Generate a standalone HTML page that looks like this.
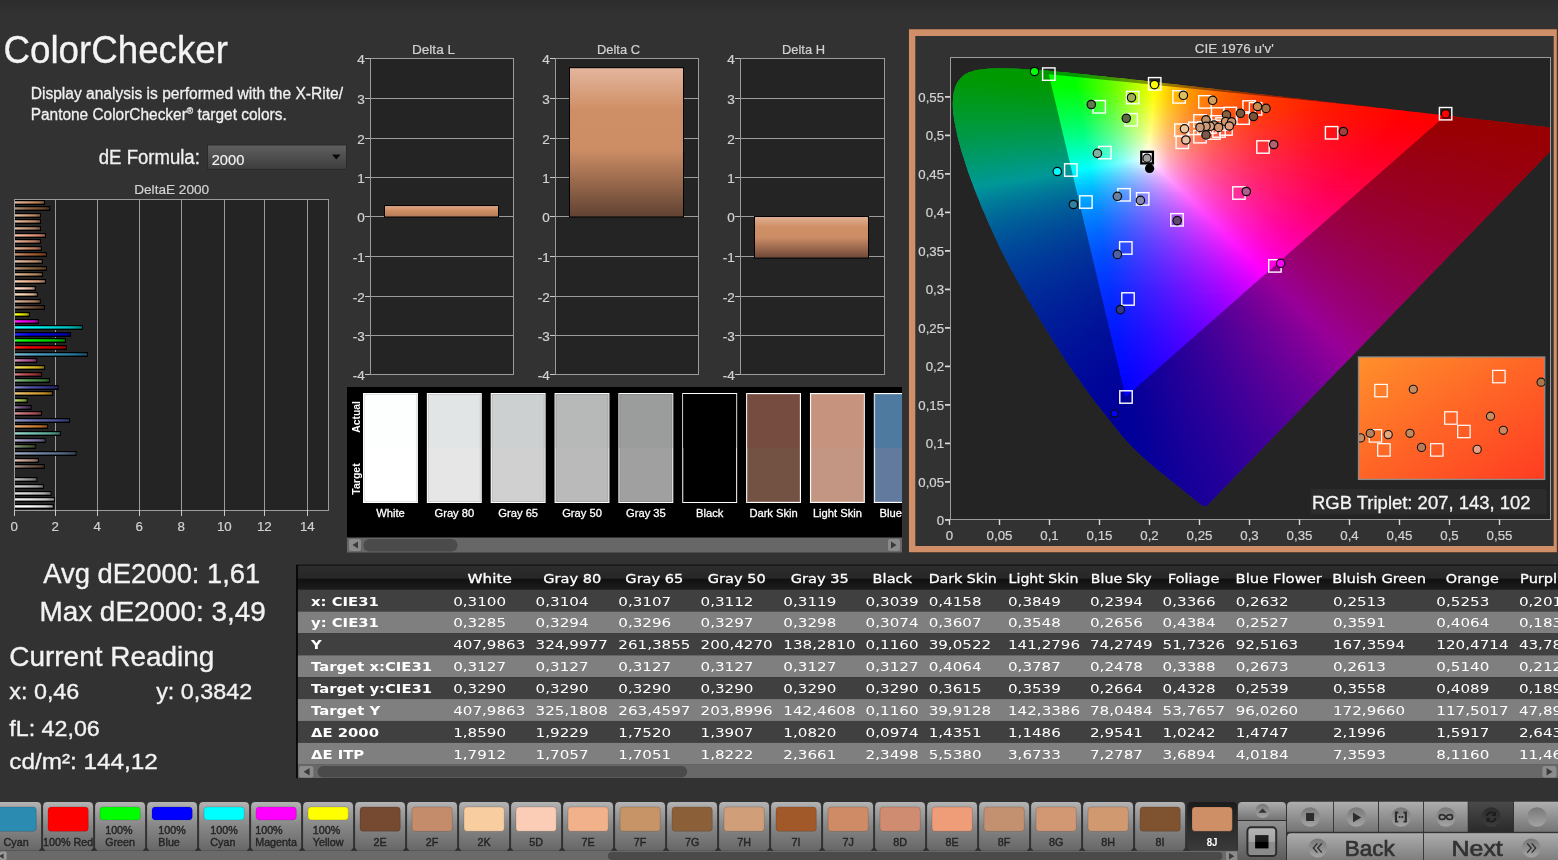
<!DOCTYPE html>
<html lang="en"><head><meta charset="utf-8"><title>ColorChecker</title>
<style>
html,body{margin:0;padding:0;background:#323232}
body{width:1558px;height:860px;overflow:hidden;position:relative}
svg{display:block;position:absolute;left:0;top:0;will-change:transform}
text{white-space:pre}
.l{font-family:"Liberation Sans",Arial,sans-serif}
.d{font-family:"DejaVu Sans","Liberation Sans",sans-serif}
</style></head><body>
<svg width="1558" height="860" viewBox="0 0 1558 860">
<defs>
<linearGradient id="tg" x1="0" y1="0" x2="0" y2="1"><stop offset="0" stop-color="#000" stop-opacity=".1"/><stop offset="1" stop-color="#000" stop-opacity="0"/></linearGradient>
<linearGradient id="dd" x1="0" y1="0" x2="0" y2="1"><stop offset="0" stop-color="#606060"/><stop offset="1" stop-color="#3c3c3c"/></linearGradient>
<linearGradient id="b0" x1="0" x2="1" y1="0" y2="0"><stop offset="0" stop-color="#ffffff"/><stop offset="0.35" stop-color="#ffffff"/><stop offset="0.8" stop-color="#d9d9d9"/><stop offset="1" stop-color="#949494"/></linearGradient>
<linearGradient id="b1" x1="0" x2="1" y1="0" y2="0"><stop offset="0" stop-color="#f0f0f0"/><stop offset="0.35" stop-color="#e9e9e9"/><stop offset="0.8" stop-color="#c4c4c4"/><stop offset="1" stop-color="#858585"/></linearGradient>
<linearGradient id="b2" x1="0" x2="1" y1="0" y2="0"><stop offset="0" stop-color="#e1e2e2"/><stop offset="0.35" stop-color="#d5d7d7"/><stop offset="0.8" stop-color="#b0b2b2"/><stop offset="1" stop-color="#787979"/></linearGradient>
<linearGradient id="b3" x1="0" x2="1" y1="0" y2="0"><stop offset="0" stop-color="#d4d4d4"/><stop offset="0.35" stop-color="#c1c2c1"/><stop offset="0.8" stop-color="#9d9e9d"/><stop offset="1" stop-color="#6b6c6b"/></linearGradient>
<linearGradient id="b4" x1="0" x2="1" y1="0" y2="0"><stop offset="0" stop-color="#c2c3c2"/><stop offset="0.35" stop-color="#a9aaa9"/><stop offset="0.8" stop-color="#858685"/><stop offset="1" stop-color="#5b5c5b"/></linearGradient>
<linearGradient id="b6" x1="0" x2="1" y1="0" y2="0"><stop offset="0" stop-color="#a8948b"/><stop offset="0.35" stop-color="#84675a"/><stop offset="0.8" stop-color="#62463a"/><stop offset="1" stop-color="#433027"/></linearGradient>
<linearGradient id="b7" x1="0" x2="1" y1="0" y2="0"><stop offset="0" stop-color="#d9beb2"/><stop offset="0.35" stop-color="#c9a391"/><stop offset="0.8" stop-color="#a5806e"/><stop offset="1" stop-color="#71574b"/></linearGradient>
<linearGradient id="b8" x1="0" x2="1" y1="0" y2="0"><stop offset="0" stop-color="#9eadc2"/><stop offset="0.35" stop-color="#758aa9"/><stop offset="0.8" stop-color="#536885"/><stop offset="1" stop-color="#39475b"/></linearGradient>
<linearGradient id="b9" x1="0" x2="1" y1="0" y2="0"><stop offset="0" stop-color="#97a48a"/><stop offset="0.35" stop-color="#6b7e5a"/><stop offset="0.8" stop-color="#4a5c39"/><stop offset="1" stop-color="#323f27"/></linearGradient>
<linearGradient id="b10" x1="0" x2="1" y1="0" y2="0"><stop offset="0" stop-color="#b3b0cf"/><stop offset="0.35" stop-color="#948fba"/><stop offset="0.8" stop-color="#716d96"/><stop offset="1" stop-color="#4d4a67"/></linearGradient>
<linearGradient id="b11" x1="0" x2="1" y1="0" y2="0"><stop offset="0" stop-color="#a1d6ca"/><stop offset="0.35" stop-color="#79c5b4"/><stop offset="0.8" stop-color="#58a190"/><stop offset="1" stop-color="#3c6e63"/></linearGradient>
<linearGradient id="b12" x1="0" x2="1" y1="0" y2="0"><stop offset="0" stop-color="#e6af7c"/><stop offset="0.35" stop-color="#db8d45"/><stop offset="0.8" stop-color="#b66b25"/><stop offset="1" stop-color="#7c491a"/></linearGradient>
<linearGradient id="b13" x1="0" x2="1" y1="0" y2="0"><stop offset="0" stop-color="#9299c8"/><stop offset="0.35" stop-color="#656fb1"/><stop offset="0.8" stop-color="#444d8d"/><stop offset="1" stop-color="#2e3560"/></linearGradient>
<linearGradient id="b14" x1="0" x2="1" y1="0" y2="0"><stop offset="0" stop-color="#d9999e"/><stop offset="0.35" stop-color="#c86e76"/><stop offset="0.8" stop-color="#a44c54"/><stop offset="1" stop-color="#703439"/></linearGradient>
<linearGradient id="b15" x1="0" x2="1" y1="0" y2="0"><stop offset="0" stop-color="#9b86a4"/><stop offset="0.35" stop-color="#71537e"/><stop offset="0.8" stop-color="#50335c"/><stop offset="1" stop-color="#37233f"/></linearGradient>
<linearGradient id="b16" x1="0" x2="1" y1="0" y2="0"><stop offset="0" stop-color="#c2d589"/><stop offset="0.35" stop-color="#a9c457"/><stop offset="0.8" stop-color="#85a036"/><stop offset="1" stop-color="#5b6d25"/></linearGradient>
<linearGradient id="b17" x1="0" x2="1" y1="0" y2="0"><stop offset="0" stop-color="#ecc67d"/><stop offset="0.35" stop-color="#e4ae47"/><stop offset="0.8" stop-color="#be8b27"/><stop offset="1" stop-color="#825f1b"/></linearGradient>
<linearGradient id="b18" x1="0" x2="1" y1="0" y2="0"><stop offset="0" stop-color="#8487be"/><stop offset="0.35" stop-color="#5054a3"/><stop offset="0.8" stop-color="#303480"/><stop offset="1" stop-color="#202357"/></linearGradient>
<linearGradient id="b19" x1="0" x2="1" y1="0" y2="0"><stop offset="0" stop-color="#8cbd8e"/><stop offset="0.35" stop-color="#5ca15f"/><stop offset="0.8" stop-color="#3c7e3e"/><stop offset="1" stop-color="#29562a"/></linearGradient>
<linearGradient id="b20" x1="0" x2="1" y1="0" y2="0"><stop offset="0" stop-color="#cd8286"/><stop offset="0.35" stop-color="#b94e53"/><stop offset="0.8" stop-color="#952e33"/><stop offset="1" stop-color="#661f23"/></linearGradient>
<linearGradient id="b21" x1="0" x2="1" y1="0" y2="0"><stop offset="0" stop-color="#f0dc74"/><stop offset="0.35" stop-color="#eace3a"/><stop offset="0.8" stop-color="#c4a91a"/><stop offset="1" stop-color="#867312"/></linearGradient>
<linearGradient id="b22" x1="0" x2="1" y1="0" y2="0"><stop offset="0" stop-color="#d596bd"/><stop offset="0.35" stop-color="#c36aa2"/><stop offset="0.8" stop-color="#9f497f"/><stop offset="1" stop-color="#6c3256"/></linearGradient>
<linearGradient id="b23" x1="0" x2="1" y1="0" y2="0"><stop offset="0" stop-color="#7cb7ce"/><stop offset="0.35" stop-color="#4499b9"/><stop offset="0.8" stop-color="#257696"/><stop offset="1" stop-color="#195166"/></linearGradient>
<linearGradient id="b24" x1="0" x2="1" y1="0" y2="0"><stop offset="0" stop-color="#ff2626"/><stop offset="0.3" stop-color="#f20000"/><stop offset="0.8" stop-color="#bf0000"/><stop offset="1" stop-color="#800000"/></linearGradient>
<linearGradient id="b25" x1="0" x2="1" y1="0" y2="0"><stop offset="0" stop-color="#26ff26"/><stop offset="0.3" stop-color="#00f200"/><stop offset="0.8" stop-color="#00bf00"/><stop offset="1" stop-color="#008000"/></linearGradient>
<linearGradient id="b26" x1="0" x2="1" y1="0" y2="0"><stop offset="0" stop-color="#2626ff"/><stop offset="0.3" stop-color="#0000f2"/><stop offset="0.8" stop-color="#0000bf"/><stop offset="1" stop-color="#000080"/></linearGradient>
<linearGradient id="b27" x1="0" x2="1" y1="0" y2="0"><stop offset="0" stop-color="#26ffff"/><stop offset="0.3" stop-color="#00f2f2"/><stop offset="0.8" stop-color="#00bfbf"/><stop offset="1" stop-color="#008080"/></linearGradient>
<linearGradient id="b28" x1="0" x2="1" y1="0" y2="0"><stop offset="0" stop-color="#ff26ff"/><stop offset="0.3" stop-color="#f200f2"/><stop offset="0.8" stop-color="#bf00bf"/><stop offset="1" stop-color="#800080"/></linearGradient>
<linearGradient id="b29" x1="0" x2="1" y1="0" y2="0"><stop offset="0" stop-color="#ffff26"/><stop offset="0.3" stop-color="#f2f200"/><stop offset="0.8" stop-color="#bfbf00"/><stop offset="1" stop-color="#808000"/></linearGradient>
<linearGradient id="b30" x1="0" x2="1" y1="0" y2="0"><stop offset="0" stop-color="#a98f7f"/><stop offset="0.35" stop-color="#86604a"/><stop offset="0.8" stop-color="#633f2a"/><stop offset="1" stop-color="#442b1c"/></linearGradient>
<linearGradient id="b31" x1="0" x2="1" y1="0" y2="0"><stop offset="0" stop-color="#dab8a3"/><stop offset="0.35" stop-color="#cb9a7d"/><stop offset="0.8" stop-color="#a7775b"/><stop offset="1" stop-color="#72513e"/></linearGradient>
<linearGradient id="b32" x1="0" x2="1" y1="0" y2="0"><stop offset="0" stop-color="#fbe0c4"/><stop offset="0.35" stop-color="#f9d3ab"/><stop offset="0.8" stop-color="#d3ae88"/><stop offset="1" stop-color="#90775d"/></linearGradient>
<linearGradient id="b33" x1="0" x2="1" y1="0" y2="0"><stop offset="0" stop-color="#fde0d2"/><stop offset="0.35" stop-color="#fbd3bf"/><stop offset="0.8" stop-color="#d5ae9b"/><stop offset="1" stop-color="#92776a"/></linearGradient>
<linearGradient id="b34" x1="0" x2="1" y1="0" y2="0"><stop offset="0" stop-color="#f6cfb7"/><stop offset="0.35" stop-color="#f2ba99"/><stop offset="0.8" stop-color="#cc9676"/><stop offset="1" stop-color="#8b6751"/></linearGradient>
<linearGradient id="b35" x1="0" x2="1" y1="0" y2="0"><stop offset="0" stop-color="#dcbda0"/><stop offset="0.35" stop-color="#cda178"/><stop offset="0.8" stop-color="#a87e57"/><stop offset="1" stop-color="#73563b"/></linearGradient>
<linearGradient id="b36" x1="0" x2="1" y1="0" y2="0"><stop offset="0" stop-color="#b79c84"/><stop offset="0.35" stop-color="#997350"/><stop offset="0.8" stop-color="#765230"/><stop offset="1" stop-color="#513820"/></linearGradient>
<linearGradient id="b37" x1="0" x2="1" y1="0" y2="0"><stop offset="0" stop-color="#e2c3ad"/><stop offset="0.35" stop-color="#d6ab8a"/><stop offset="0.8" stop-color="#b18768"/><stop offset="1" stop-color="#795c47"/></linearGradient>
<linearGradient id="b38" x1="0" x2="1" y1="0" y2="0"><stop offset="0" stop-color="#c5987b"/><stop offset="0.35" stop-color="#ad6d44"/><stop offset="0.8" stop-color="#8a4c24"/><stop offset="1" stop-color="#5e3418"/></linearGradient>
<linearGradient id="b39" x1="0" x2="1" y1="0" y2="0"><stop offset="0" stop-color="#e1b6a0"/><stop offset="0.35" stop-color="#d59878"/><stop offset="0.8" stop-color="#b07557"/><stop offset="1" stop-color="#78503b"/></linearGradient>
<linearGradient id="b40" x1="0" x2="1" y1="0" y2="0"><stop offset="0" stop-color="#e2b8a6"/><stop offset="0.35" stop-color="#d69a81"/><stop offset="0.8" stop-color="#b1775f"/><stop offset="1" stop-color="#795141"/></linearGradient>
<linearGradient id="b41" x1="0" x2="1" y1="0" y2="0"><stop offset="0" stop-color="#f5c2ab"/><stop offset="0.35" stop-color="#f1a888"/><stop offset="0.8" stop-color="#cb8566"/><stop offset="1" stop-color="#8b5a46"/></linearGradient>
<linearGradient id="b42" x1="0" x2="1" y1="0" y2="0"><stop offset="0" stop-color="#dabba6"/><stop offset="0.35" stop-color="#ca9e81"/><stop offset="0.8" stop-color="#a67b5f"/><stop offset="1" stop-color="#715441"/></linearGradient>
<linearGradient id="b43" x1="0" x2="1" y1="0" y2="0"><stop offset="0" stop-color="#e2bfa8"/><stop offset="0.35" stop-color="#d7a484"/><stop offset="0.8" stop-color="#b28162"/><stop offset="1" stop-color="#795843"/></linearGradient>
<linearGradient id="b44" x1="0" x2="1" y1="0" y2="0"><stop offset="0" stop-color="#e2c0a6"/><stop offset="0.35" stop-color="#d6a581"/><stop offset="0.8" stop-color="#b1825f"/><stop offset="1" stop-color="#795941"/></linearGradient>
<linearGradient id="b45" x1="0" x2="1" y1="0" y2="0"><stop offset="0" stop-color="#b0947f"/><stop offset="0.35" stop-color="#8e6849"/><stop offset="0.8" stop-color="#6c4729"/><stop offset="1" stop-color="#4a301c"/></linearGradient>
<linearGradient id="b46" x1="0" x2="1" y1="0" y2="0"><stop offset="0" stop-color="#e1baa0"/><stop offset="0.35" stop-color="#d59c78"/><stop offset="0.8" stop-color="#b07a57"/><stop offset="1" stop-color="#78533b"/></linearGradient>
<linearGradient id="dbar" x1="0" y1="0" x2="0" y2="1"><stop offset="0" stop-color="#e3b59c"/><stop offset="0.28" stop-color="#cf8f66"/><stop offset="0.55" stop-color="#cc8d65"/><stop offset="1" stop-color="#614232"/></linearGradient>
<linearGradient id="dbarL" x1="0" y1="0" x2="0" y2="1"><stop offset="0" stop-color="#dca585"/><stop offset="0.4" stop-color="#cf8f66"/><stop offset="1" stop-color="#b57c58"/></linearGradient>
<linearGradient id="dbarH" x1="0" y1="0" x2="0" y2="1"><stop offset="0" stop-color="#e0ae92"/><stop offset="0.25" stop-color="#cf8f66"/><stop offset="0.5" stop-color="#cc8d65"/><stop offset="1" stop-color="#70493a"/></linearGradient>
<clipPath id="swclip"><rect x="347" y="387" width="555" height="166"/></clipPath>
<linearGradient id="c0" gradientUnits="userSpaceOnUse" x1="979" x2="1031"><stop offset="0" stop-color="#0f0"/><stop offset="1" stop-color="#0f0"/></linearGradient>
<linearGradient id="c1" gradientUnits="userSpaceOnUse" x1="968" x2="1055"><stop offset="0" stop-color="#0f0"/><stop offset="1" stop-color="#0f0"/></linearGradient>
<linearGradient id="c2" gradientUnits="userSpaceOnUse" x1="962" x2="1078"><stop offset="0" stop-color="#0f0"/><stop offset=".9655" stop-color="#03ff00"/><stop offset="1" stop-color="#0dff00"/></linearGradient>
<linearGradient id="c3" gradientUnits="userSpaceOnUse" x1="958" x2="1098"><stop offset="0" stop-color="#0f0"/><stop offset=".8286" stop-color="#02ff00"/><stop offset="1" stop-color="#40ff00"/></linearGradient>
<linearGradient id="c4" gradientUnits="userSpaceOnUse" x1="956" x2="1114"><stop offset="0" stop-color="#0f0"/><stop offset=".7468" stop-color="#01ff00"/><stop offset=".9937" stop-color="#6aff00"/><stop offset="1" stop-color="#6dff00"/></linearGradient>
<linearGradient id="c5" gradientUnits="userSpaceOnUse" x1="954" x2="1132"><stop offset="0" stop-color="#00ff04"/><stop offset=".5169" stop-color="#0f0"/><stop offset=".6798" stop-color="#03ff00"/><stop offset=".8876" stop-color="#67ff00"/><stop offset="1" stop-color="#a7ff00"/></linearGradient>
<linearGradient id="c6" gradientUnits="userSpaceOnUse" x1="953" x2="1152"><stop offset="0" stop-color="#00ff08"/><stop offset=".3668" stop-color="#0f0"/><stop offset=".6131" stop-color="#02ff00"/><stop offset=".794" stop-color="#64ff00"/><stop offset=".9497" stop-color="#cbff00"/><stop offset="1" stop-color="#f1ff00"/></linearGradient>
<linearGradient id="c7" gradientUnits="userSpaceOnUse" x1="951" x2="1165"><stop offset="0" stop-color="#00ff0b"/><stop offset=".4393" stop-color="#0f0"/><stop offset=".5794" stop-color="#01ff00"/><stop offset=".7477" stop-color="#64ff00"/><stop offset=".8925" stop-color="#cbff00"/><stop offset=".9579" stop-color="#fffc00"/><stop offset="1" stop-color="#ffdc00"/></linearGradient>
<linearGradient id="c8" gradientUnits="userSpaceOnUse" x1="950" x2="1187"><stop offset="0" stop-color="#00ff0f"/><stop offset=".4852" stop-color="#0f0"/><stop offset=".5316" stop-color="#03ff00"/><stop offset=".6878" stop-color="#69ff00"/><stop offset=".8228" stop-color="#d7ff00"/><stop offset=".865" stop-color="#ff0"/><stop offset=".9409" stop-color="#ffc300"/><stop offset="1" stop-color="#ffa200"/></linearGradient>
<linearGradient id="c9" gradientUnits="userSpaceOnUse" x1="949" x2="1202"><stop offset="0" stop-color="#00ff13"/><stop offset=".502" stop-color="#02ff00"/><stop offset=".6522" stop-color="#6cff00"/><stop offset=".7787" stop-color="#dbff00"/><stop offset=".8142" stop-color="#ff0"/><stop offset=".8735" stop-color="#ffcb00"/><stop offset=".9526" stop-color="#ff9b00"/><stop offset="1" stop-color="#ff8500"/></linearGradient>
<linearGradient id="c10" gradientUnits="userSpaceOnUse" x1="949" x2="1218"><stop offset="0" stop-color="#00ff16"/><stop offset=".4721" stop-color="#02ff02"/><stop offset=".5948" stop-color="#5dff00"/><stop offset=".7063" stop-color="#c1ff00"/><stop offset=".7658" stop-color="#fffe00"/><stop offset=".8253" stop-color="#ffc700"/><stop offset=".9071" stop-color="#ff9400"/><stop offset="1" stop-color="#ff6d00"/></linearGradient>
<linearGradient id="c11" gradientUnits="userSpaceOnUse" x1="949" x2="1235"><stop offset="0" stop-color="#00ff1a"/><stop offset=".4476" stop-color="#03ff07"/><stop offset=".5664" stop-color="#62ff00"/><stop offset=".6748" stop-color="#cdff00"/><stop offset=".7203" stop-color="#fffd00"/><stop offset=".7797" stop-color="#ffc300"/><stop offset=".8566" stop-color="#ff9100"/><stop offset=".965" stop-color="#ff6400"/><stop offset="1" stop-color="#ff5900"/></linearGradient>
<linearGradient id="c12" gradientUnits="userSpaceOnUse" x1="949" x2="1252"><stop offset="0" stop-color="#00ff1d"/><stop offset=".4224" stop-color="#02ff0c"/><stop offset=".5413" stop-color="#68ff04"/><stop offset=".6436" stop-color="#d5ff00"/><stop offset=".6799" stop-color="#fffc00"/><stop offset=".7327" stop-color="#ffc500"/><stop offset=".8053" stop-color="#ff9200"/><stop offset=".9109" stop-color="#ff6300"/><stop offset="1" stop-color="#ff4900"/></linearGradient>
<linearGradient id="c13" gradientUnits="userSpaceOnUse" x1="949" x2="1270"><stop offset="0" stop-color="#00ff21"/><stop offset=".3988" stop-color="#02ff10"/><stop offset=".4984" stop-color="#5cff0a"/><stop offset=".5919" stop-color="#c2ff03"/><stop offset=".6386" stop-color="#feff00"/><stop offset=".6885" stop-color="#ffc700"/><stop offset=".757" stop-color="#ff9300"/><stop offset=".8536" stop-color="#ff6500"/><stop offset=".9875" stop-color="#ff3d00"/><stop offset="1" stop-color="#ff3a00"/></linearGradient>
<linearGradient id="c14" gradientUnits="userSpaceOnUse" x1="949" x2="1287"><stop offset="0" stop-color="#00ff24"/><stop offset=".3817" stop-color="#03ff15"/><stop offset=".4882" stop-color="#6bff0f"/><stop offset=".574" stop-color="#d2ff08"/><stop offset=".6065" stop-color="#ffff05"/><stop offset=".6538" stop-color="#ffc700"/><stop offset=".713" stop-color="#ff9700"/><stop offset=".7929" stop-color="#ff6b00"/><stop offset=".926" stop-color="#ff3f00"/><stop offset="1" stop-color="#ff2f00"/></linearGradient>
<linearGradient id="c15" gradientUnits="userSpaceOnUse" x1="949" x2="1305"><stop offset="0" stop-color="#00ff28"/><stop offset=".3624" stop-color="#03ff1a"/><stop offset=".4579" stop-color="#64ff14"/><stop offset=".5393" stop-color="#cbff0e"/><stop offset=".5758" stop-color="#fffe0b"/><stop offset=".6208" stop-color="#ffc606"/><stop offset=".677" stop-color="#ff9601"/><stop offset=".7584" stop-color="#ff6800"/><stop offset=".8736" stop-color="#ff4000"/><stop offset="1" stop-color="#ff2500"/></linearGradient>
<linearGradient id="c16" gradientUnits="userSpaceOnUse" x1="949" x2="1323"><stop offset="0" stop-color="#00ff2c"/><stop offset=".3449" stop-color="#02ff1f"/><stop offset=".4358" stop-color="#64ff1a"/><stop offset=".5134" stop-color="#cbff15"/><stop offset=".5481" stop-color="#fffd12"/><stop offset=".5909" stop-color="#ffc50b"/><stop offset=".6471" stop-color="#ff9305"/><stop offset=".7246" stop-color="#f60"/><stop offset=".8396" stop-color="#ff3d00"/><stop offset="1" stop-color="#ff1c00"/></linearGradient>
<linearGradient id="c17" gradientUnits="userSpaceOnUse" x1="949" x2="1342"><stop offset="0" stop-color="#00ff2f"/><stop offset=".3282" stop-color="#01ff24"/><stop offset=".4198" stop-color="#6aff1f"/><stop offset=".4911" stop-color="#d0ff1a"/><stop offset=".5216" stop-color="#fffc18"/><stop offset=".5649" stop-color="#ffc110"/><stop offset=".6209" stop-color="#ff8e08"/><stop offset=".7023" stop-color="#ff5f02"/><stop offset=".8193" stop-color="#ff3700"/><stop offset=".9949" stop-color="#ff1500"/><stop offset="1" stop-color="#ff1500"/></linearGradient>
<linearGradient id="c18" gradientUnits="userSpaceOnUse" x1="949" x2="1359"><stop offset="0" stop-color="#0f3"/><stop offset=".3171" stop-color="#03ff29"/><stop offset=".3951" stop-color="#60ff25"/><stop offset=".4683" stop-color="#ccff21"/><stop offset=".5" stop-color="#fffc1e"/><stop offset=".5366" stop-color="#ffc616"/><stop offset=".5878" stop-color="#ff930d"/><stop offset=".6585" stop-color="#ff6606"/><stop offset=".7585" stop-color="#ff3e00"/><stop offset=".9122" stop-color="#ff1b00"/><stop offset="1" stop-color="#ff0e00"/></linearGradient>
<linearGradient id="c19" gradientUnits="userSpaceOnUse" x1="949" x2="1376"><stop offset="0" stop-color="#00ff37"/><stop offset=".3044" stop-color="#02ff2e"/><stop offset=".3817" stop-color="#63ff2b"/><stop offset=".452" stop-color="#d0ff27"/><stop offset=".4778" stop-color="#ffff25"/><stop offset=".5152" stop-color="#ffc51b"/><stop offset=".5667" stop-color="#ff9011"/><stop offset=".6417" stop-color="#ff6009"/><stop offset=".7424" stop-color="#ff3902"/><stop offset=".9087" stop-color="#ff1500"/><stop offset="1" stop-color="#ff0900"/></linearGradient>
<linearGradient id="c20" gradientUnits="userSpaceOnUse" x1="949" x2="1393"><stop offset="0" stop-color="#00ff3b"/><stop offset=".2928" stop-color="#01ff33"/><stop offset=".3694" stop-color="#66ff31"/><stop offset=".4324" stop-color="#cdff2e"/><stop offset=".4595" stop-color="#fffe2c"/><stop offset=".4955" stop-color="#ffc420"/><stop offset=".545" stop-color="#ff8f16"/><stop offset=".6171" stop-color="#ff5f0c"/><stop offset=".7185" stop-color="#ff3704"/><stop offset=".8829" stop-color="#ff1300"/><stop offset="1" stop-color="#ff0400"/></linearGradient>
<linearGradient id="c21" gradientUnits="userSpaceOnUse" x1="949" x2="1410"><stop offset="0" stop-color="#00ff3e"/><stop offset=".2842" stop-color="#03ff39"/><stop offset=".3579" stop-color="#69ff36"/><stop offset=".4187" stop-color="#d1ff34"/><stop offset=".4425" stop-color="#fffd33"/><stop offset=".4794" stop-color="#ffc025"/><stop offset=".5249" stop-color="#ff8f1a"/><stop offset=".5879" stop-color="#ff6210"/><stop offset=".6833" stop-color="#ff3907"/><stop offset=".8351" stop-color="#ff1500"/><stop offset="1" stop-color="#f00"/></linearGradient>
<linearGradient id="c22" gradientUnits="userSpaceOnUse" x1="949" x2="1425"><stop offset="0" stop-color="#00ff42"/><stop offset=".2752" stop-color="#02ff3e"/><stop offset=".3487" stop-color="#6cff3c"/><stop offset=".4118" stop-color="#deff3a"/><stop offset=".4286" stop-color="#fffd39"/><stop offset=".458" stop-color="#ffc92d"/><stop offset=".4979" stop-color="#ff9821"/><stop offset=".5504" stop-color="#ff6d16"/><stop offset=".6345" stop-color="#ff420c"/><stop offset=".7689" stop-color="#ff1c03"/><stop offset=".9664" stop-color="#f00"/><stop offset="1" stop-color="#f00"/></linearGradient>
<linearGradient id="c23" gradientUnits="userSpaceOnUse" x1="949" x2="1446"><stop offset="0" stop-color="#00ff46"/><stop offset=".2636" stop-color="#01ff44"/><stop offset=".33" stop-color="#65ff42"/><stop offset=".3883" stop-color="#d2ff41"/><stop offset=".4085" stop-color="#feff41"/><stop offset=".4406" stop-color="#ffc531"/><stop offset=".4809" stop-color="#ff9324"/><stop offset=".5332" stop-color="#ff6819"/><stop offset=".6197" stop-color="#ff3d0d"/><stop offset=".7485" stop-color="#ff1904"/><stop offset=".9276" stop-color="#f00"/><stop offset="1" stop-color="#f00"/></linearGradient>
<linearGradient id="c24" gradientUnits="userSpaceOnUse" x1="949" x2="1465"><stop offset="0" stop-color="#00ff4a"/><stop offset=".2558" stop-color="#03ff49"/><stop offset=".3178" stop-color="#65ff49"/><stop offset=".3702" stop-color="#caff48"/><stop offset=".3934" stop-color="#ffff48"/><stop offset=".4225" stop-color="#ffc738"/><stop offset=".4593" stop-color="#ff962a"/><stop offset=".5136" stop-color="#ff671c"/><stop offset=".5969" stop-color="#ff3c10"/><stop offset=".719" stop-color="#ff1906"/><stop offset=".8876" stop-color="#f00"/><stop offset="1" stop-color="#f00"/></linearGradient>
<linearGradient id="c25" gradientUnits="userSpaceOnUse" x1="949" x2="1481"><stop offset="0" stop-color="#00ff4e"/><stop offset=".2481" stop-color="#02ff4f"/><stop offset=".3102" stop-color="#68ff4f"/><stop offset=".3628" stop-color="#d3ff4f"/><stop offset=".3816" stop-color="#ffff4f"/><stop offset=".4079" stop-color="#ffc93e"/><stop offset=".4455" stop-color="#ff952e"/><stop offset=".4981" stop-color="#ff6620"/><stop offset=".5846" stop-color="#ff3912"/><stop offset=".7143" stop-color="#ff1507"/><stop offset=".8628" stop-color="#f00"/><stop offset="1" stop-color="#f00"/></linearGradient>
<linearGradient id="c26" gradientUnits="userSpaceOnUse" x1="949" x2="1500"><stop offset="0" stop-color="#00ff52"/><stop offset=".2396" stop-color="#01ff54"/><stop offset=".2976" stop-color="#64ff55"/><stop offset=".3466" stop-color="#cbff56"/><stop offset=".3684" stop-color="#fffe56"/><stop offset=".3938" stop-color="#ffc844"/><stop offset=".4301" stop-color="#ff9433"/><stop offset=".4791" stop-color="#ff6724"/><stop offset=".5572" stop-color="#ff3c16"/><stop offset=".6606" stop-color="#ff1b0b"/><stop offset=".8203" stop-color="#ff0002"/><stop offset="1" stop-color="#f00"/></linearGradient>
<linearGradient id="c27" gradientUnits="userSpaceOnUse" x1="949" x2="1516"><stop offset="0" stop-color="#00ff56"/><stop offset=".2346" stop-color="#03ff5a"/><stop offset=".2892" stop-color="#64ff5c"/><stop offset=".3351" stop-color="#c8ff5d"/><stop offset=".358" stop-color="#fffd5d"/><stop offset=".3827" stop-color="#ffc74a"/><stop offset=".418" stop-color="#ff9338"/><stop offset=".4674" stop-color="#ff6527"/><stop offset=".5362" stop-color="#ff3d19"/><stop offset=".6437" stop-color="#ff1a0d"/><stop offset=".7954" stop-color="#ff0003"/><stop offset="1" stop-color="#f00"/></linearGradient>
<linearGradient id="c28" gradientUnits="userSpaceOnUse" x1="949" x2="1533"><stop offset="0" stop-color="#00ff5a"/><stop offset=".2277" stop-color="#02ff60"/><stop offset=".2825" stop-color="#67ff62"/><stop offset=".3271" stop-color="#ccff64"/><stop offset=".3476" stop-color="#fffc64"/><stop offset=".3716" stop-color="#ffc650"/><stop offset=".4058" stop-color="#ff923c"/><stop offset=".4538" stop-color="#ff642b"/><stop offset=".5257" stop-color="#ff3a1b"/><stop offset=".6336" stop-color="#ff170e"/><stop offset=".774" stop-color="#ff0005"/><stop offset="1" stop-color="#f00"/></linearGradient>
<linearGradient id="c29" gradientUnits="userSpaceOnUse" x1="949" x2="1552"><stop offset="0" stop-color="#00ff5e"/><stop offset=".2206" stop-color="#01ff66"/><stop offset=".2736" stop-color="#67ff69"/><stop offset=".3151" stop-color="#c8ff6b"/><stop offset=".335" stop-color="#feff6d"/><stop offset=".3615" stop-color="#ffc255"/><stop offset=".398" stop-color="#ff8b3f"/><stop offset=".4461" stop-color="#ff5e2d"/><stop offset=".5141" stop-color="#ff371d"/><stop offset=".6252" stop-color="#ff140f"/><stop offset=".7496" stop-color="#ff0006"/><stop offset="1" stop-color="#f00"/></linearGradient>
<linearGradient id="c30" gradientUnits="userSpaceOnUse" x1="949" x2="1552"><stop offset="0" stop-color="#00ff63"/><stop offset=".2222" stop-color="#03ff6c"/><stop offset=".2753" stop-color="#6aff70"/><stop offset=".3217" stop-color="#daff73"/><stop offset=".335" stop-color="#ffff75"/><stop offset=".3599" stop-color="#ffc45c"/><stop offset=".3947" stop-color="#ff8e45"/><stop offset=".4444" stop-color="#ff5e31"/><stop offset=".5191" stop-color="#ff341f"/><stop offset=".6385" stop-color="#ff1010"/><stop offset=".7496" stop-color="#ff0008"/><stop offset="1" stop-color="#f00"/></linearGradient>
<linearGradient id="c31" gradientUnits="userSpaceOnUse" x1="949" x2="1552"><stop offset="0" stop-color="#00ff67"/><stop offset=".2222" stop-color="#02ff72"/><stop offset=".2753" stop-color="#6aff76"/><stop offset=".3201" stop-color="#d6ff7b"/><stop offset=".335" stop-color="#fffe7c"/><stop offset=".3599" stop-color="#ffc362"/><stop offset=".3914" stop-color="#ff924c"/><stop offset=".4345" stop-color="#ff6538"/><stop offset=".5041" stop-color="#ff3a25"/><stop offset=".6103" stop-color="#ff1615"/><stop offset=".7413" stop-color="#ff000a"/><stop offset="1" stop-color="#f00"/></linearGradient>
<linearGradient id="c32" gradientUnits="userSpaceOnUse" x1="950" x2="1552"><stop offset="0" stop-color="#00ff6b"/><stop offset=".2209" stop-color="#01ff78"/><stop offset=".2724" stop-color="#66ff7d"/><stop offset=".3156" stop-color="#ceff82"/><stop offset=".3339" stop-color="#fffd84"/><stop offset=".3588" stop-color="#ffc268"/><stop offset=".3904" stop-color="#ff9151"/><stop offset=".4319" stop-color="#ff663c"/><stop offset=".4934" stop-color="#ff3e2a"/><stop offset=".593" stop-color="#ff1a19"/><stop offset=".7309" stop-color="#ff000c"/><stop offset="1" stop-color="#f00"/></linearGradient>
<linearGradient id="c33" gradientUnits="userSpaceOnUse" x1="950" x2="1552"><stop offset="0" stop-color="#00ff6f"/><stop offset=".2226" stop-color="#03ff7f"/><stop offset=".2757" stop-color="#6dff84"/><stop offset=".3173" stop-color="#d3ff8a"/><stop offset=".3339" stop-color="#fffc8b"/><stop offset=".3588" stop-color="#ffc16e"/><stop offset=".3904" stop-color="#ff9055"/><stop offset=".4319" stop-color="#ff6540"/><stop offset=".49" stop-color="#ff3f2e"/><stop offset=".5897" stop-color="#ff1a1b"/><stop offset=".7292" stop-color="#ff000e"/><stop offset="1" stop-color="#ff0001"/></linearGradient>
<linearGradient id="c34" gradientUnits="userSpaceOnUse" x1="951" x2="1552"><stop offset="0" stop-color="#00ff74"/><stop offset=".2213" stop-color="#03ff85"/><stop offset=".2712" stop-color="#65ff8b"/><stop offset=".3178" stop-color="#d8ff93"/><stop offset=".3311" stop-color="#feff95"/><stop offset=".3577" stop-color="#ffc074"/><stop offset=".3894" stop-color="#ff8f5a"/><stop offset=".4309" stop-color="#ff6444"/><stop offset=".4958" stop-color="#ff3b2f"/><stop offset=".599" stop-color="#ff171c"/><stop offset=".7271" stop-color="#ff000f"/><stop offset="1" stop-color="#ff0002"/></linearGradient>
<linearGradient id="c35" gradientUnits="userSpaceOnUse" x1="951" x2="1552"><stop offset="0" stop-color="#00ff78"/><stop offset=".2213" stop-color="#02ff8b"/><stop offset=".2696" stop-color="#61ff92"/><stop offset=".3161" stop-color="#d4ff9b"/><stop offset=".3311" stop-color="#ffff9e"/><stop offset=".3577" stop-color="#ffbf7b"/><stop offset=".3894" stop-color="#ff8e5f"/><stop offset=".4326" stop-color="#ff6247"/><stop offset=".5075" stop-color="#ff352f"/><stop offset=".609" stop-color="#ff141d"/><stop offset=".7288" stop-color="#f01"/><stop offset="1" stop-color="#ff0003"/></linearGradient>
<linearGradient id="c36" gradientUnits="userSpaceOnUse" x1="951" x2="1552"><stop offset="0" stop-color="#00ff7c"/><stop offset=".2213" stop-color="#01ff92"/><stop offset=".2679" stop-color="#5dff99"/><stop offset=".3095" stop-color="#c3ffa2"/><stop offset=".3311" stop-color="#fffea7"/><stop offset=".3561" stop-color="#ffc283"/><stop offset=".386" stop-color="#ff9167"/><stop offset=".4276" stop-color="#ff654e"/><stop offset=".4925" stop-color="#ff3b36"/><stop offset=".5874" stop-color="#ff1922"/><stop offset=".7188" stop-color="#ff0013"/><stop offset="1" stop-color="#ff0004"/></linearGradient>
<linearGradient id="c37" gradientUnits="userSpaceOnUse" x1="952" x2="1552"><stop offset="0" stop-color="#00ff81"/><stop offset=".2217" stop-color="#03ff99"/><stop offset=".2667" stop-color="#5dffa0"/><stop offset=".3067" stop-color="#bfffaa"/><stop offset=".33" stop-color="#fffdb1"/><stop offset=".3583" stop-color="#ffba85"/><stop offset=".3917" stop-color="#ff8867"/><stop offset=".4367" stop-color="#ff5c4d"/><stop offset=".505" stop-color="#ff3435"/><stop offset=".6167" stop-color="#ff1120"/><stop offset=".7233" stop-color="#ff0014"/><stop offset="1" stop-color="#ff0005"/></linearGradient>
<linearGradient id="c38" gradientUnits="userSpaceOnUse" x1="953" x2="1552"><stop offset="0" stop-color="#00ff86"/><stop offset=".2204" stop-color="#02ff9f"/><stop offset=".2671" stop-color="#60ffa8"/><stop offset=".3055" stop-color="#c0ffb3"/><stop offset=".3289" stop-color="#fffdba"/><stop offset=".3573" stop-color="#ffb98c"/><stop offset=".3907" stop-color="#ff876c"/><stop offset=".4357" stop-color="#ff5b51"/><stop offset=".5025" stop-color="#ff3438"/><stop offset=".6043" stop-color="#ff1324"/><stop offset=".7179" stop-color="#ff0016"/><stop offset="1" stop-color="#ff0006"/></linearGradient>
<linearGradient id="c39" gradientUnits="userSpaceOnUse" x1="953" x2="1552"><stop offset="0" stop-color="#00ff8a"/><stop offset=".2204" stop-color="#01ffa6"/><stop offset=".2671" stop-color="#60ffb0"/><stop offset=".3005" stop-color="#b3ffb9"/><stop offset=".3272" stop-color="#feffc7"/><stop offset=".3589" stop-color="#ffb590"/><stop offset=".3907" stop-color="#ff8671"/><stop offset=".4357" stop-color="#ff5a55"/><stop offset=".5075" stop-color="#ff313a"/><stop offset=".6227" stop-color="#ff0e23"/><stop offset=".7179" stop-color="#ff0018"/><stop offset="1" stop-color="#ff0007"/></linearGradient>
<linearGradient id="c40" gradientUnits="userSpaceOnUse" x1="954" x2="1552"><stop offset="0" stop-color="#00ff8f"/><stop offset=".2057" stop-color="#0fa"/><stop offset=".2207" stop-color="#03ffad"/><stop offset=".2692" stop-color="#67ffb8"/><stop offset=".301" stop-color="#b9ffc3"/><stop offset=".3261" stop-color="#ffffd2"/><stop offset=".3595" stop-color="#ffb194"/><stop offset=".393" stop-color="#ff8173"/><stop offset=".4381" stop-color="#ff5757"/><stop offset=".51" stop-color="#ff2f3c"/><stop offset=".6254" stop-color="#ff0d25"/><stop offset=".714" stop-color="#ff001a"/><stop offset="1" stop-color="#ff0008"/></linearGradient>
<linearGradient id="c41" gradientUnits="userSpaceOnUse" x1="954" x2="1552"><stop offset="0" stop-color="#00ff94"/><stop offset=".2007" stop-color="#00ffb0"/><stop offset=".2207" stop-color="#02ffb4"/><stop offset=".2659" stop-color="#5fffbf"/><stop offset=".2977" stop-color="#b0ffca"/><stop offset=".3227" stop-color="#f8ffdc"/><stop offset=".3278" stop-color="#fffbda"/><stop offset=".3545" stop-color="#ffbaa2"/><stop offset=".3846" stop-color="#ff8a7f"/><stop offset=".4281" stop-color="#ff5e60"/><stop offset=".5033" stop-color="#ff3141"/><stop offset=".6054" stop-color="#ff112a"/><stop offset=".709" stop-color="#ff001c"/><stop offset="1" stop-color="#ff0009"/></linearGradient>
<linearGradient id="c42" gradientUnits="userSpaceOnUse" x1="955" x2="1552"><stop offset="0" stop-color="#00ff98"/><stop offset=".2044" stop-color="#00ffb8"/><stop offset=".2194" stop-color="#01ffbc"/><stop offset=".2647" stop-color="#5fffc7"/><stop offset=".2931" stop-color="#a7ffd1"/><stop offset=".3183" stop-color="#f2ffe4"/><stop offset=".3266" stop-color="#fffae3"/><stop offset=".3568" stop-color="#ffb3a4"/><stop offset=".3853" stop-color="#ff8783"/><stop offset=".4271" stop-color="#ff5d64"/><stop offset=".4958" stop-color="#ff3446"/><stop offset=".5896" stop-color="#ff142f"/><stop offset=".7018" stop-color="#ff001f"/><stop offset="1" stop-color="#ff000a"/></linearGradient>
<linearGradient id="c43" gradientUnits="userSpaceOnUse" x1="955" x2="1552"><stop offset="0" stop-color="#00ff9d"/><stop offset=".1926" stop-color="#00ffbc"/><stop offset=".2211" stop-color="#03ffc3"/><stop offset=".268" stop-color="#66ffd0"/><stop offset=".2948" stop-color="#adffdb"/><stop offset=".3166" stop-color="#f0ffec"/><stop offset=".325" stop-color="#fffeee"/><stop offset=".3585" stop-color="#ffafa8"/><stop offset=".3886" stop-color="#ff8285"/><stop offset=".4322" stop-color="#ff5865"/><stop offset=".4992" stop-color="#ff3148"/><stop offset=".608" stop-color="#ff0f2d"/><stop offset=".7018" stop-color="#ff0020"/><stop offset="1" stop-color="#ff000b"/></linearGradient>
<linearGradient id="c44" gradientUnits="userSpaceOnUse" x1="956" x2="1552"><stop offset="0" stop-color="#00ffa2"/><stop offset=".1913" stop-color="#00ffc3"/><stop offset=".2198" stop-color="#02ffcb"/><stop offset=".2651" stop-color="#62ffd8"/><stop offset=".2919" stop-color="#a8ffe3"/><stop offset=".3138" stop-color="#eefff2"/><stop offset=".3238" stop-color="#fffdf4"/><stop offset=".3389" stop-color="#ffdcd6"/><stop offset=".3574" stop-color="#ffaeae"/><stop offset=".3876" stop-color="#ff818a"/><stop offset=".4312" stop-color="#ff5769"/><stop offset=".4966" stop-color="#ff314b"/><stop offset=".599" stop-color="#ff1031"/><stop offset=".698" stop-color="#f02"/><stop offset="1" stop-color="#ff000c"/></linearGradient>
<linearGradient id="c45" gradientUnits="userSpaceOnUse" x1="957" x2="1552"><stop offset="0" stop-color="#00ffa7"/><stop offset=".1815" stop-color="#00ffc8"/><stop offset=".2185" stop-color="#01ffd2"/><stop offset=".2622" stop-color="#5effe0"/><stop offset=".2891" stop-color="#a3ffeb"/><stop offset=".3126" stop-color="#effff9"/><stop offset=".3227" stop-color="#fffdfa"/><stop offset=".3361" stop-color="#ffe0e1"/><stop offset=".3563" stop-color="#ffadb5"/><stop offset=".3866" stop-color="#ff808f"/><stop offset=".4303" stop-color="#ff566d"/><stop offset=".4941" stop-color="#ff314f"/><stop offset=".5966" stop-color="#ff1034"/><stop offset=".6941" stop-color="#ff0024"/><stop offset=".9916" stop-color="#ff000e"/><stop offset="1" stop-color="#ff000e"/></linearGradient>
<linearGradient id="c46" gradientUnits="userSpaceOnUse" x1="957" x2="1551"><stop offset="0" stop-color="#00ffac"/><stop offset=".1785" stop-color="#00ffce"/><stop offset=".2205" stop-color="#03ffda"/><stop offset=".2677" stop-color="#69ffea"/><stop offset=".2929" stop-color="#aefff5"/><stop offset=".3114" stop-color="#ebfffe"/><stop offset=".3232" stop-color="#fffcfe"/><stop offset=".3384" stop-color="#ffdbe3"/><stop offset=".3569" stop-color="#ffacbb"/><stop offset=".3872" stop-color="#ff7f95"/><stop offset=".431" stop-color="#ff5571"/><stop offset=".5" stop-color="#ff2e50"/><stop offset=".6128" stop-color="#ff0c33"/><stop offset=".6953" stop-color="#ff0026"/><stop offset=".9747" stop-color="#ff0010"/><stop offset="1" stop-color="#ff000f"/></linearGradient>
<linearGradient id="c47" gradientUnits="userSpaceOnUse" x1="958" x2="1549"><stop offset="0" stop-color="#00ffb1"/><stop offset=".1743" stop-color="#00ffd4"/><stop offset=".22" stop-color="#02ffe2"/><stop offset=".2657" stop-color="#65fff2"/><stop offset=".291" stop-color="#a9fffd"/><stop offset=".313" stop-color="#eafaff"/><stop offset=".3266" stop-color="#fff6fe"/><stop offset=".3587" stop-color="#ffa7bf"/><stop offset=".3892" stop-color="#ff7c98"/><stop offset=".4349" stop-color="#ff5273"/><stop offset=".5059" stop-color="#ff2b51"/><stop offset=".6159" stop-color="#ff0b35"/><stop offset=".6937" stop-color="#ff0028"/><stop offset=".9882" stop-color="#ff0010"/><stop offset="1" stop-color="#ff0010"/></linearGradient>
<linearGradient id="c48" gradientUnits="userSpaceOnUse" x1="958" x2="1547"><stop offset="0" stop-color="#00ffb6"/><stop offset=".1715" stop-color="#00ffda"/><stop offset=".2207" stop-color="#01ffea"/><stop offset=".2666" stop-color="#64fffb"/><stop offset=".2971" stop-color="#b2f6ff"/><stop offset=".3158" stop-color="#e8f3ff"/><stop offset=".3311" stop-color="#ffedfe"/><stop offset=".3582" stop-color="#ffa9c8"/><stop offset=".3888" stop-color="#ff7d9f"/><stop offset=".4329" stop-color="#ff537a"/><stop offset=".4992" stop-color="#ff2e57"/><stop offset=".6061" stop-color="#ff0d39"/><stop offset=".691" stop-color="#ff002b"/><stop offset=".9559" stop-color="#ff0013"/><stop offset="1" stop-color="#f01"/></linearGradient>
<linearGradient id="c49" gradientUnits="userSpaceOnUse" x1="959" x2="1545"><stop offset="0" stop-color="#00ffbc"/><stop offset=".1672" stop-color="#00ffe0"/><stop offset=".2218" stop-color="#03fff2"/><stop offset=".2611" stop-color="#57fcff"/><stop offset=".2969" stop-color="#acedff"/><stop offset=".3174" stop-color="#e4ecff"/><stop offset=".3345" stop-color="#ffe2fe"/><stop offset=".3584" stop-color="#ffa8cf"/><stop offset=".3874" stop-color="#ff7ea6"/><stop offset=".43" stop-color="#ff5580"/><stop offset=".4983" stop-color="#ff2e5b"/><stop offset=".6075" stop-color="#ff0c3b"/><stop offset=".6911" stop-color="#ff002d"/><stop offset=".9437" stop-color="#ff0015"/><stop offset="1" stop-color="#ff0012"/></linearGradient>
<linearGradient id="c50" gradientUnits="userSpaceOnUse" x1="960" x2="1543"><stop offset="0" stop-color="#00ffc1"/><stop offset=".163" stop-color="#00ffe6"/><stop offset=".2213" stop-color="#02fffa"/><stop offset=".2504" stop-color="#3ef8ff"/><stop offset=".295" stop-color="#a1e6ff"/><stop offset=".3173" stop-color="#dce4ff"/><stop offset=".3379" stop-color="#ffd7fe"/><stop offset=".3585" stop-color="#ffa7d5"/><stop offset=".3877" stop-color="#ff7dac"/><stop offset=".4305" stop-color="#ff5484"/><stop offset=".4991" stop-color="#ff2d5e"/><stop offset=".6038" stop-color="#ff0d3f"/><stop offset=".6878" stop-color="#ff002f"/><stop offset=".9417" stop-color="#ff0017"/><stop offset="1" stop-color="#ff0013"/></linearGradient>
<linearGradient id="c51" gradientUnits="userSpaceOnUse" x1="960" x2="1541"><stop offset="0" stop-color="#00ffc6"/><stop offset=".1618" stop-color="#00ffed"/><stop offset=".222" stop-color="#01fcff"/><stop offset=".2909" stop-color="#8fdfff"/><stop offset=".3219" stop-color="#dadaff"/><stop offset=".3425" stop-color="#ffcbfe"/><stop offset=".3666" stop-color="#ff9ad0"/><stop offset=".4028" stop-color="#ff6ca2"/><stop offset=".4578" stop-color="#ff4277"/><stop offset=".5353" stop-color="#ff2054"/><stop offset=".6558" stop-color="#ff0237"/><stop offset=".8692" stop-color="#ff001d"/><stop offset="1" stop-color="#ff0015"/></linearGradient>
<linearGradient id="c52" gradientUnits="userSpaceOnUse" x1="961" x2="1539"><stop offset="0" stop-color="#0fc"/><stop offset=".1557" stop-color="#00fff2"/><stop offset=".2007" stop-color="#00fcff"/><stop offset=".2232" stop-color="#03f3ff"/><stop offset=".2976" stop-color="#99d6ff"/><stop offset=".3253" stop-color="#d8d0ff"/><stop offset=".346" stop-color="#ffc1fe"/><stop offset=".3702" stop-color="#ff93d1"/><stop offset=".41" stop-color="#ff65a0"/><stop offset=".4637" stop-color="#ff3e78"/><stop offset=".5415" stop-color="#ff1d55"/><stop offset=".6678" stop-color="#ff0037"/><stop offset=".8927" stop-color="#ff001d"/><stop offset="1" stop-color="#ff0016"/></linearGradient>
<linearGradient id="c53" gradientUnits="userSpaceOnUse" x1="962" x2="1537"><stop offset="0" stop-color="#00ffd2"/><stop offset=".1443" stop-color="#00fff6"/><stop offset=".1809" stop-color="#00fbff"/><stop offset=".2226" stop-color="#02ecff"/><stop offset=".2974" stop-color="#94ceff"/><stop offset=".3304" stop-color="#dac4ff"/><stop offset=".3496" stop-color="#ffb7fe"/><stop offset=".3757" stop-color="#ff8bcf"/><stop offset=".4157" stop-color="#ff5fa0"/><stop offset=".473" stop-color="#ff3976"/><stop offset=".5565" stop-color="#ff1853"/><stop offset=".6748" stop-color="#ff0038"/><stop offset=".887" stop-color="#ff001f"/><stop offset="1" stop-color="#ff0017"/></linearGradient>
<linearGradient id="c54" gradientUnits="userSpaceOnUse" x1="963" x2="1535"><stop offset="0" stop-color="#00ffd7"/><stop offset=".1573" stop-color="#00fcff"/><stop offset=".222" stop-color="#01e4ff"/><stop offset=".3007" stop-color="#96c6ff"/><stop offset=".3462" stop-color="#f1b3ff"/><stop offset=".3549" stop-color="#ffabfb"/><stop offset=".3864" stop-color="#ff7cc6"/><stop offset=".4301" stop-color="#ff5398"/><stop offset=".493" stop-color="#ff2f70"/><stop offset=".5839" stop-color="#ff104e"/><stop offset=".6801" stop-color="#ff0039"/><stop offset=".9161" stop-color="#ff001e"/><stop offset="1" stop-color="#ff0019"/></linearGradient>
<linearGradient id="c55" gradientUnits="userSpaceOnUse" x1="963" x2="1533"><stop offset="0" stop-color="#0fd"/><stop offset=".1368" stop-color="#00fcff"/><stop offset=".2246" stop-color="#03ddff"/><stop offset=".3088" stop-color="#9fbdff"/><stop offset=".3579" stop-color="#ffa7fe"/><stop offset=".3877" stop-color="#ff7bcc"/><stop offset=".4298" stop-color="#ff539e"/><stop offset=".4895" stop-color="#ff3076"/><stop offset=".5772" stop-color="#ff1253"/><stop offset=".6772" stop-color="#ff003c"/><stop offset=".8965" stop-color="#ff0021"/><stop offset="1" stop-color="#ff001a"/></linearGradient>
<linearGradient id="c56" gradientUnits="userSpaceOnUse" x1="964" x2="1531"><stop offset="0" stop-color="#00ffe3"/><stop offset=".1146" stop-color="#00fcff"/><stop offset=".224" stop-color="#02d6ff"/><stop offset=".3104" stop-color="#9db6ff"/><stop offset=".3616" stop-color="#ff9ffe"/><stop offset=".3951" stop-color="#ff72c8"/><stop offset=".4427" stop-color="#ff4998"/><stop offset=".5079" stop-color="#ff2870"/><stop offset=".6085" stop-color="#ff0a4d"/><stop offset=".6808" stop-color="#ff003e"/><stop offset=".8818" stop-color="#ff0024"/><stop offset="1" stop-color="#ff001b"/></linearGradient>
<linearGradient id="c57" gradientUnits="userSpaceOnUse" x1="965" x2="1529"><stop offset="0" stop-color="#00ffe9"/><stop offset=".0922" stop-color="#00fcff"/><stop offset=".2234" stop-color="#01d0ff"/><stop offset=".3227" stop-color="#afabff"/><stop offset=".3652" stop-color="#ff98fe"/><stop offset=".3989" stop-color="#ff6dc9"/><stop offset=".4486" stop-color="#ff4598"/><stop offset=".5266" stop-color="#ff206b"/><stop offset=".6436" stop-color="#ff0347"/><stop offset=".844" stop-color="#ff0029"/><stop offset="1" stop-color="#ff001c"/></linearGradient>
<linearGradient id="c58" gradientUnits="userSpaceOnUse" x1="965" x2="1527"><stop offset="0" stop-color="#0fe"/><stop offset=".073" stop-color="#00fcff"/><stop offset=".226" stop-color="#03caff"/><stop offset=".3327" stop-color="#baa2ff"/><stop offset=".3701" stop-color="#ff92fe"/><stop offset=".4057" stop-color="#ff67c8"/><stop offset=".4555" stop-color="#ff4198"/><stop offset=".532" stop-color="#ff1e6d"/><stop offset=".6423" stop-color="#ff034a"/><stop offset=".8256" stop-color="#ff002d"/><stop offset="1" stop-color="#ff001e"/></linearGradient>
<linearGradient id="c59" gradientUnits="userSpaceOnUse" x1="966" x2="1525"><stop offset="0" stop-color="#00fff5"/><stop offset=".0537" stop-color="#00fbff"/><stop offset=".2254" stop-color="#02c4ff"/><stop offset=".3399" stop-color="#c299ff"/><stop offset=".3739" stop-color="#ff8bfe"/><stop offset=".4097" stop-color="#ff62c9"/><stop offset=".458" stop-color="#ff3f9b"/><stop offset=".5259" stop-color="#ff2073"/><stop offset=".6333" stop-color="#ff044f"/><stop offset=".7191" stop-color="#ff003d"/><stop offset=".9624" stop-color="#f02"/><stop offset="1" stop-color="#ff001f"/></linearGradient>
<linearGradient id="c60" gradientUnits="userSpaceOnUse" x1="967" x2="1524"><stop offset="0" stop-color="#00fffb"/><stop offset=".0449" stop-color="#00f7ff"/><stop offset=".2244" stop-color="#01beff"/><stop offset=".3357" stop-color="#b696ff"/><stop offset=".377" stop-color="#ff85fe"/><stop offset=".4129" stop-color="#ff5eca"/><stop offset=".4614" stop-color="#ff3c9c"/><stop offset=".544" stop-color="#ff196e"/><stop offset=".6625" stop-color="#ff004a"/><stop offset=".8636" stop-color="#ff002c"/><stop offset="1" stop-color="#ff0020"/></linearGradient>
<linearGradient id="c61" gradientUnits="userSpaceOnUse" x1="968" x2="1522"><stop offset="0" stop-color="#00fdff"/><stop offset=".2256" stop-color="#03b8ff"/><stop offset=".3339" stop-color="#af92ff"/><stop offset=".3809" stop-color="#ff7ffe"/><stop offset=".417" stop-color="#ff5acb"/><stop offset=".4639" stop-color="#ff3a9f"/><stop offset=".5307" stop-color="#ff1d77"/><stop offset=".6372" stop-color="#ff0353"/><stop offset=".8014" stop-color="#ff0035"/><stop offset="1" stop-color="#f02"/></linearGradient>
<linearGradient id="c62" gradientUnits="userSpaceOnUse" x1="968" x2="1520"><stop offset="0" stop-color="#00f7ff"/><stop offset=".2264" stop-color="#02b3ff"/><stop offset=".3424" stop-color="#b68bff"/><stop offset=".3859" stop-color="#ff7aff"/><stop offset=".4203" stop-color="#ff57ce"/><stop offset=".4692" stop-color="#ff37a0"/><stop offset=".5417" stop-color="#ff1a76"/><stop offset=".6522" stop-color="#ff0052"/><stop offset=".8243" stop-color="#ff0034"/><stop offset="1" stop-color="#ff0023"/></linearGradient>
<linearGradient id="c63" gradientUnits="userSpaceOnUse" x1="969" x2="1518"><stop offset="0" stop-color="#00f1ff"/><stop offset=".2259" stop-color="#01afff"/><stop offset=".3406" stop-color="#af87ff"/><stop offset=".3916" stop-color="#ff72fc"/><stop offset=".4299" stop-color="#ff4fc8"/><stop offset=".4827" stop-color="#ff309b"/><stop offset=".5592" stop-color="#ff1472"/><stop offset=".6612" stop-color="#ff0052"/><stop offset=".8397" stop-color="#ff0034"/><stop offset="1" stop-color="#ff0025"/></linearGradient>
<linearGradient id="c64" gradientUnits="userSpaceOnUse" x1="970" x2="1516"><stop offset="0" stop-color="#00ebff"/><stop offset=".2271" stop-color="#03a9ff"/><stop offset=".3443" stop-color="#b081ff"/><stop offset=".3956" stop-color="#ff6dfc"/><stop offset=".4322" stop-color="#ff4dcb"/><stop offset=".4853" stop-color="#ff2e9d"/><stop offset=".5623" stop-color="#ff1374"/><stop offset=".6593" stop-color="#f05"/><stop offset=".8425" stop-color="#ff0035"/><stop offset="1" stop-color="#ff0026"/></linearGradient>
<linearGradient id="c65" gradientUnits="userSpaceOnUse" x1="971" x2="1514"><stop offset="0" stop-color="#00e6ff"/><stop offset=".2265" stop-color="#02a5ff"/><stop offset=".3481" stop-color="#b17cff"/><stop offset=".3996" stop-color="#ff68fc"/><stop offset=".4383" stop-color="#ff48ca"/><stop offset=".4917" stop-color="#ff2b9d"/><stop offset=".5727" stop-color="#ff1073"/><stop offset=".6611" stop-color="#ff0057"/><stop offset=".8435" stop-color="#ff0037"/><stop offset="1" stop-color="#ff0028"/></linearGradient>
<linearGradient id="c66" gradientUnits="userSpaceOnUse" x1="972" x2="1512"><stop offset="0" stop-color="#00e0ff"/><stop offset=".2259" stop-color="#01a0ff"/><stop offset=".35" stop-color="#b078ff"/><stop offset=".4037" stop-color="#ff63fc"/><stop offset=".4426" stop-color="#ff44cb"/><stop offset=".4926" stop-color="#ff2aa1"/><stop offset=".5759" stop-color="#ff0e75"/><stop offset=".6593" stop-color="#ff005b"/><stop offset=".813" stop-color="#ff003d"/><stop offset="1" stop-color="#ff0029"/></linearGradient>
<linearGradient id="c67" gradientUnits="userSpaceOnUse" x1="973" x2="1510"><stop offset="0" stop-color="#00dbff"/><stop offset=".2272" stop-color="#039cff"/><stop offset=".3538" stop-color="#b173ff"/><stop offset=".406" stop-color="#ff60ff"/><stop offset=".4451" stop-color="#ff42ce"/><stop offset=".4972" stop-color="#ff27a2"/><stop offset=".5791" stop-color="#ff0d77"/><stop offset=".6574" stop-color="#ff005e"/><stop offset=".8175" stop-color="#ff003e"/><stop offset="1" stop-color="#ff002a"/></linearGradient>
<linearGradient id="c68" gradientUnits="userSpaceOnUse" x1="973" x2="1508"><stop offset="0" stop-color="#00d6ff"/><stop offset=".228" stop-color="#0298ff"/><stop offset=".357" stop-color="#b06eff"/><stop offset=".4131" stop-color="#ff5afc"/><stop offset=".4542" stop-color="#ff3cca"/><stop offset=".5178" stop-color="#ff1f99"/><stop offset=".6093" stop-color="#ff066f"/><stop offset=".6692" stop-color="#ff005d"/><stop offset=".8486" stop-color="#ff003c"/><stop offset="1" stop-color="#ff002c"/></linearGradient>
<linearGradient id="c69" gradientUnits="userSpaceOnUse" x1="974" x2="1506"><stop offset="0" stop-color="#00d1ff"/><stop offset=".2274" stop-color="#0194ff"/><stop offset=".3609" stop-color="#b16aff"/><stop offset=".4173" stop-color="#ff56fc"/><stop offset=".4605" stop-color="#ff38c9"/><stop offset=".5263" stop-color="#ff1c98"/><stop offset=".6184" stop-color="#ff046f"/><stop offset=".6936" stop-color="#ff005a"/><stop offset=".8647" stop-color="#ff003c"/><stop offset="1" stop-color="#ff002d"/></linearGradient>
<linearGradient id="c70" gradientUnits="userSpaceOnUse" x1="974" x2="1504"><stop offset="0" stop-color="#00cdff"/><stop offset=".2302" stop-color="#038fff"/><stop offset=".366" stop-color="#b265ff"/><stop offset=".4226" stop-color="#ff51fc"/><stop offset=".4679" stop-color="#ff34c8"/><stop offset=".534" stop-color="#ff1998"/><stop offset=".6283" stop-color="#ff026f"/><stop offset=".766" stop-color="#ff004d"/><stop offset=".9887" stop-color="#ff0030"/><stop offset="1" stop-color="#ff002f"/></linearGradient>
<linearGradient id="c71" gradientUnits="userSpaceOnUse" x1="975" x2="1502"><stop offset="0" stop-color="#00c8ff"/><stop offset=".2296" stop-color="#028cff"/><stop offset=".3681" stop-color="#b162ff"/><stop offset=".4269" stop-color="#ff4dfc"/><stop offset=".4744" stop-color="#ff30c7"/><stop offset=".5427" stop-color="#ff1697"/><stop offset=".6395" stop-color="#ff006e"/><stop offset=".7894" stop-color="#ff004b"/><stop offset="1" stop-color="#ff0031"/></linearGradient>
<linearGradient id="c72" gradientUnits="userSpaceOnUse" x1="976" x2="1500"><stop offset="0" stop-color="#00c3ff"/><stop offset=".2309" stop-color="#0388ff"/><stop offset=".3798" stop-color="#bc5bff"/><stop offset=".4313" stop-color="#ff49fc"/><stop offset=".4809" stop-color="#ff2cc6"/><stop offset=".5515" stop-color="#ff1396"/><stop offset=".645" stop-color="#ff0070"/><stop offset=".7824" stop-color="#ff004e"/><stop offset="1" stop-color="#ff0032"/></linearGradient>
<linearGradient id="c73" gradientUnits="userSpaceOnUse" x1="977" x2="1498"><stop offset="0" stop-color="#00bfff"/><stop offset=".2303" stop-color="#0384ff"/><stop offset=".3724" stop-color="#ae5aff"/><stop offset=".4357" stop-color="#ff45fc"/><stop offset=".4856" stop-color="#ff2ac7"/><stop offset=".5547" stop-color="#ff1198"/><stop offset=".6449" stop-color="#ff0073"/><stop offset=".7793" stop-color="#ff0051"/><stop offset="1" stop-color="#ff0034"/></linearGradient>
<linearGradient id="c74" gradientUnits="userSpaceOnUse" x1="978" x2="1496"><stop offset="0" stop-color="#0bf"/><stop offset=".2297" stop-color="#0281ff"/><stop offset=".3745" stop-color="#ad57ff"/><stop offset=".4402" stop-color="#ff42fc"/><stop offset=".4923" stop-color="#ff26c6"/><stop offset=".5637" stop-color="#ff0e97"/><stop offset=".6448" stop-color="#ff0076"/><stop offset=".7819" stop-color="#ff0053"/><stop offset="1" stop-color="#ff0035"/></linearGradient>
<linearGradient id="c75" gradientUnits="userSpaceOnUse" x1="979" x2="1494"><stop offset="0" stop-color="#00b6ff"/><stop offset=".2311" stop-color="#037dff"/><stop offset=".3825" stop-color="#b352ff"/><stop offset=".4447" stop-color="#ff3efd"/><stop offset=".4932" stop-color="#ff25ca"/><stop offset=".565" stop-color="#ff0e9a"/><stop offset=".6408" stop-color="#ff007a"/><stop offset=".7922" stop-color="#ff0053"/><stop offset="1" stop-color="#ff0037"/></linearGradient>
<linearGradient id="c76" gradientUnits="userSpaceOnUse" x1="980" x2="1492"><stop offset="0" stop-color="#00b2ff"/><stop offset=".2305" stop-color="#037aff"/><stop offset=".377" stop-color="#a851ff"/><stop offset=".4492" stop-color="#ff3bfd"/><stop offset=".5" stop-color="#ff22c9"/><stop offset=".5742" stop-color="#ff0b99"/><stop offset=".6406" stop-color="#ff007d"/><stop offset=".7793" stop-color="#ff0058"/><stop offset=".9941" stop-color="#ff0039"/><stop offset="1" stop-color="#ff0039"/></linearGradient>
<linearGradient id="c77" gradientUnits="userSpaceOnUse" x1="981" x2="1490"><stop offset="0" stop-color="#00aeff"/><stop offset=".2299" stop-color="#0277ff"/><stop offset=".3851" stop-color="#ae4cff"/><stop offset=".4538" stop-color="#ff37fd"/><stop offset=".5069" stop-color="#ff1fc8"/><stop offset=".5835" stop-color="#ff0898"/><stop offset=".6424" stop-color="#ff0080"/><stop offset=".7623" stop-color="#ff005e"/><stop offset=".9705" stop-color="#ff003d"/><stop offset="1" stop-color="#ff003a"/></linearGradient>
<linearGradient id="c78" gradientUnits="userSpaceOnUse" x1="982" x2="1488"><stop offset="0" stop-color="#0af"/><stop offset=".2312" stop-color="#0374ff"/><stop offset=".3953" stop-color="#b647ff"/><stop offset=".4585" stop-color="#ff34fd"/><stop offset=".5079" stop-color="#ff1ecc"/><stop offset=".581" stop-color="#ff089d"/><stop offset=".6443" stop-color="#ff0082"/><stop offset=".7688" stop-color="#ff005f"/><stop offset=".9704" stop-color="#ff003f"/><stop offset="1" stop-color="#ff003c"/></linearGradient>
<linearGradient id="c79" gradientUnits="userSpaceOnUse" x1="983" x2="1487"><stop offset="0" stop-color="#00a7ff"/><stop offset=".2302" stop-color="#0371ff"/><stop offset=".3829" stop-color="#a548ff"/><stop offset=".4623" stop-color="#ff31fd"/><stop offset=".5139" stop-color="#ff1bcb"/><stop offset=".5893" stop-color="#ff069c"/><stop offset=".6448" stop-color="#ff0084"/><stop offset=".7778" stop-color="#ff005f"/><stop offset=".9841" stop-color="#ff003f"/><stop offset="1" stop-color="#ff003d"/></linearGradient>
<linearGradient id="c80" gradientUnits="userSpaceOnUse" x1="984" x2="1485"><stop offset="0" stop-color="#00a3ff"/><stop offset=".2295" stop-color="#026eff"/><stop offset=".3952" stop-color="#af43ff"/><stop offset=".4671" stop-color="#ff2efd"/><stop offset=".521" stop-color="#ff18ca"/><stop offset=".6008" stop-color="#ff039a"/><stop offset=".7106" stop-color="#ff0072"/><stop offset=".8822" stop-color="#ff004e"/><stop offset="1" stop-color="#ff003f"/></linearGradient>
<linearGradient id="c81" gradientUnits="userSpaceOnUse" x1="984" x2="1483"><stop offset="0" stop-color="#00a0ff"/><stop offset=".2325" stop-color="#036bff"/><stop offset=".4008" stop-color="#b03fff"/><stop offset=".4729" stop-color="#ff2bfd"/><stop offset=".5291" stop-color="#ff15c9"/><stop offset=".6132" stop-color="#ff0098"/><stop offset=".7315" stop-color="#ff006f"/><stop offset=".9058" stop-color="#ff004d"/><stop offset="1" stop-color="#ff0041"/></linearGradient>
<linearGradient id="c82" gradientUnits="userSpaceOnUse" x1="985" x2="1481"><stop offset="0" stop-color="#009cff"/><stop offset=".2319" stop-color="#0268ff"/><stop offset=".4173" stop-color="#be39ff"/><stop offset=".4778" stop-color="#ff28fd"/><stop offset=".5343" stop-color="#ff13ca"/><stop offset=".6129" stop-color="#ff009c"/><stop offset=".7198" stop-color="#ff0075"/><stop offset=".8911" stop-color="#ff0051"/><stop offset="1" stop-color="#ff0043"/></linearGradient>
<linearGradient id="c83" gradientUnits="userSpaceOnUse" x1="986" x2="1479"><stop offset="0" stop-color="#09f"/><stop offset=".2312" stop-color="#0266ff"/><stop offset=".4239" stop-color="#c135ff"/><stop offset=".4828" stop-color="#ff25fd"/><stop offset=".5375" stop-color="#f1c"/><stop offset=".6146" stop-color="#ff009f"/><stop offset=".7221" stop-color="#f07"/><stop offset=".8966" stop-color="#ff0052"/><stop offset="1" stop-color="#f04"/></linearGradient>
<linearGradient id="c84" gradientUnits="userSpaceOnUse" x1="987" x2="1477"><stop offset="0" stop-color="#0095ff"/><stop offset=".2327" stop-color="#0363ff"/><stop offset=".4327" stop-color="#c631ff"/><stop offset=".4878" stop-color="#ff22fd"/><stop offset=".5449" stop-color="#ff0fcb"/><stop offset=".6184" stop-color="#ff00a1"/><stop offset=".7245" stop-color="#ff0079"/><stop offset=".8939" stop-color="#f05"/><stop offset="1" stop-color="#ff0046"/></linearGradient>
<linearGradient id="c85" gradientUnits="userSpaceOnUse" x1="988" x2="1475"><stop offset="0" stop-color="#0092ff"/><stop offset=".232" stop-color="#0261ff"/><stop offset=".4209" stop-color="#b633ff"/><stop offset=".4928" stop-color="#ff1ffd"/><stop offset=".5544" stop-color="#ff0bc9"/><stop offset=".6222" stop-color="#ff00a2"/><stop offset=".7351" stop-color="#ff0079"/><stop offset=".9055" stop-color="#f05"/><stop offset="1" stop-color="#ff0048"/></linearGradient>
<linearGradient id="c86" gradientUnits="userSpaceOnUse" x1="989" x2="1473"><stop offset="0" stop-color="#008fff"/><stop offset=".2314" stop-color="#025eff"/><stop offset=".4215" stop-color="#b331ff"/><stop offset=".4979" stop-color="#ff1dfd"/><stop offset=".5599" stop-color="#ff0ac9"/><stop offset=".6178" stop-color="#ff00a8"/><stop offset=".7335" stop-color="#ff007c"/><stop offset=".9112" stop-color="#ff0056"/><stop offset="1" stop-color="#ff004a"/></linearGradient>
<linearGradient id="c87" gradientUnits="userSpaceOnUse" x1="990" x2="1471"><stop offset="0" stop-color="#008cff"/><stop offset=".2328" stop-color="#035cff"/><stop offset=".4283" stop-color="#b62dff"/><stop offset=".5031" stop-color="#ff1afd"/><stop offset=".5655" stop-color="#ff08ca"/><stop offset=".6175" stop-color="#ff00ac"/><stop offset=".7235" stop-color="#ff0082"/><stop offset=".8836" stop-color="#ff005d"/><stop offset="1" stop-color="#ff004c"/></linearGradient>
<linearGradient id="c88" gradientUnits="userSpaceOnUse" x1="990" x2="1469"><stop offset="0" stop-color="#0089ff"/><stop offset=".2338" stop-color="#0259ff"/><stop offset=".4363" stop-color="#b92aff"/><stop offset=".5094" stop-color="#ff18fd"/><stop offset=".5741" stop-color="#ff05c9"/><stop offset=".6305" stop-color="#f0a"/><stop offset=".737" stop-color="#ff0081"/><stop offset=".9061" stop-color="#ff005b"/><stop offset="1" stop-color="#ff004d"/></linearGradient>
<linearGradient id="c89" gradientUnits="userSpaceOnUse" x1="991" x2="1467"><stop offset="0" stop-color="#0086ff"/><stop offset=".2332" stop-color="#0257ff"/><stop offset=".4307" stop-color="#b02aff"/><stop offset=".5147" stop-color="#ff15fd"/><stop offset=".5819" stop-color="#ff03c8"/><stop offset=".6786" stop-color="#ff0098"/><stop offset=".8172" stop-color="#ff006f"/><stop offset="1" stop-color="#ff004f"/></linearGradient>
<linearGradient id="c90" gradientUnits="userSpaceOnUse" x1="992" x2="1465"><stop offset="0" stop-color="#0083ff"/><stop offset=".2347" stop-color="#0355ff"/><stop offset=".4376" stop-color="#b327ff"/><stop offset=".5201" stop-color="#ff13fd"/><stop offset=".5877" stop-color="#ff01c9"/><stop offset=".6744" stop-color="#ff009d"/><stop offset=".814" stop-color="#ff0072"/><stop offset="1" stop-color="#ff0051"/></linearGradient>
<linearGradient id="c91" gradientUnits="userSpaceOnUse" x1="993" x2="1463"><stop offset="0" stop-color="#0081ff"/><stop offset=".234" stop-color="#0253ff"/><stop offset=".4426" stop-color="#b424ff"/><stop offset=".5255" stop-color="#ff10fd"/><stop offset=".5915" stop-color="#ff00cb"/><stop offset=".6851" stop-color="#ff009c"/><stop offset=".8255" stop-color="#ff0072"/><stop offset="1" stop-color="#ff0053"/></linearGradient>
<linearGradient id="c92" gradientUnits="userSpaceOnUse" x1="994" x2="1461"><stop offset="0" stop-color="#007eff"/><stop offset=".2355" stop-color="#0350ff"/><stop offset=".4582" stop-color="#be20ff"/><stop offset=".531" stop-color="#ff0efd"/><stop offset=".5996" stop-color="#ff00ca"/><stop offset=".7088" stop-color="#ff0097"/><stop offset=".8587" stop-color="#ff006d"/><stop offset="1" stop-color="#f05"/></linearGradient>
<linearGradient id="c93" gradientUnits="userSpaceOnUse" x1="996" x2="1459"><stop offset="0" stop-color="#007bff"/><stop offset=".2333" stop-color="#034eff"/><stop offset=".4428" stop-color="#ae22ff"/><stop offset=".5356" stop-color="#ff0cfd"/><stop offset=".5983" stop-color="#ff00cf"/><stop offset=".689" stop-color="#ff00a1"/><stop offset=".8251" stop-color="#f07"/><stop offset="1" stop-color="#ff0057"/></linearGradient>
<linearGradient id="c94" gradientUnits="userSpaceOnUse" x1="997" x2="1457"><stop offset="0" stop-color="#0078ff"/><stop offset=".2326" stop-color="#024cff"/><stop offset=".4609" stop-color="#ba1cff"/><stop offset=".5413" stop-color="#ff0afd"/><stop offset=".5957" stop-color="#ff00d5"/><stop offset=".6826" stop-color="#ff00a7"/><stop offset=".8196" stop-color="#ff007b"/><stop offset="1" stop-color="#ff0059"/></linearGradient>
<linearGradient id="c95" gradientUnits="userSpaceOnUse" x1="998" x2="1455"><stop offset="0" stop-color="#0075ff"/><stop offset=".2341" stop-color="#034aff"/><stop offset=".4639" stop-color="#b91aff"/><stop offset=".547" stop-color="#ff08fe"/><stop offset=".5952" stop-color="#ff00d9"/><stop offset=".6871" stop-color="#ff00a9"/><stop offset=".8228" stop-color="#ff007d"/><stop offset="1" stop-color="#ff005b"/></linearGradient>
<linearGradient id="c96" gradientUnits="userSpaceOnUse" x1="999" x2="1453"><stop offset="0" stop-color="#0073ff"/><stop offset=".2335" stop-color="#0348ff"/><stop offset=".4626" stop-color="#b41aff"/><stop offset=".5529" stop-color="#ff06fe"/><stop offset=".5969" stop-color="#ff00dc"/><stop offset=".685" stop-color="#ff00ae"/><stop offset=".7996" stop-color="#ff0086"/><stop offset=".978" stop-color="#ff0061"/><stop offset="1" stop-color="#ff005d"/></linearGradient>
<linearGradient id="c97" gradientUnits="userSpaceOnUse" x1="1000" x2="1451"><stop offset="0" stop-color="#0070ff"/><stop offset=".2328" stop-color="#0247ff"/><stop offset=".4612" stop-color="#b019ff"/><stop offset=".5588" stop-color="#ff04fe"/><stop offset=".6208" stop-color="#ff00d2"/><stop offset=".7184" stop-color="#ff00a3"/><stop offset=".867" stop-color="#ff0078"/><stop offset="1" stop-color="#ff0060"/></linearGradient>
<linearGradient id="c98" gradientUnits="userSpaceOnUse" x1="1001" x2="1450"><stop offset="0" stop-color="#006eff"/><stop offset=".2339" stop-color="#0345ff"/><stop offset=".4811" stop-color="#bd13ff"/><stop offset=".5635" stop-color="#ff02fe"/><stop offset=".6437" stop-color="#ff00c8"/><stop offset=".7572" stop-color="#ff0098"/><stop offset=".9243" stop-color="#ff006e"/><stop offset="1" stop-color="#ff0061"/></linearGradient>
<linearGradient id="c99" gradientUnits="userSpaceOnUse" x1="1002" x2="1448"><stop offset="0" stop-color="#006cff"/><stop offset=".2332" stop-color="#0343ff"/><stop offset=".4664" stop-color="#ae15ff"/><stop offset=".5695" stop-color="#ff00fe"/><stop offset=".6457" stop-color="#ff00cb"/><stop offset=".7489" stop-color="#ff009e"/><stop offset=".9036" stop-color="#ff0075"/><stop offset="1" stop-color="#ff0064"/></linearGradient>
<linearGradient id="c100" gradientUnits="userSpaceOnUse" x1="1003" x2="1446"><stop offset="0" stop-color="#0069ff"/><stop offset=".2325" stop-color="#0241ff"/><stop offset=".4853" stop-color="#b911ff"/><stop offset=".5756" stop-color="#ff00fe"/><stop offset=".6501" stop-color="#ff00cd"/><stop offset=".7585" stop-color="#ff009e"/><stop offset=".9187" stop-color="#ff0074"/><stop offset="1" stop-color="#f06"/></linearGradient>
<linearGradient id="c101" gradientUnits="userSpaceOnUse" x1="1004" x2="1444"><stop offset="0" stop-color="#0067ff"/><stop offset=".2341" stop-color="#033fff"/><stop offset=".4886" stop-color="#b80fff"/><stop offset=".5795" stop-color="#fe00ff"/><stop offset=".6614" stop-color="#ff00cb"/><stop offset=".7682" stop-color="#ff009e"/><stop offset=".9273" stop-color="#ff0075"/><stop offset="1" stop-color="#ff0068"/></linearGradient>
<linearGradient id="c102" gradientUnits="userSpaceOnUse" x1="1005" x2="1442"><stop offset="0" stop-color="#0065ff"/><stop offset=".2334" stop-color="#033eff"/><stop offset=".4783" stop-color="#ad10ff"/><stop offset=".5767" stop-color="#f700ff"/><stop offset=".595" stop-color="#ff00f9"/><stop offset=".6751" stop-color="#ff00c8"/><stop offset=".7872" stop-color="#ff009b"/><stop offset=".9542" stop-color="#ff0072"/><stop offset="1" stop-color="#ff006a"/></linearGradient>
<linearGradient id="c103" gradientUnits="userSpaceOnUse" x1="1006" x2="1440"><stop offset="0" stop-color="#0063ff"/><stop offset=".2327" stop-color="#023cff"/><stop offset=".4954" stop-color="#b60cff"/><stop offset=".5737" stop-color="#f000ff"/><stop offset=".5968" stop-color="#ff00fc"/><stop offset=".6774" stop-color="#ff00cb"/><stop offset=".7903" stop-color="#ff009d"/><stop offset=".9631" stop-color="#ff0073"/><stop offset="1" stop-color="#ff006d"/></linearGradient>
<linearGradient id="c104" gradientUnits="userSpaceOnUse" x1="1007" x2="1438"><stop offset="0" stop-color="#0060ff"/><stop offset=".2343" stop-color="#033aff"/><stop offset=".5012" stop-color="#b70aff"/><stop offset=".5731" stop-color="#eb00ff"/><stop offset=".6032" stop-color="#ff00fc"/><stop offset=".6868" stop-color="#ff00ca"/><stop offset=".8005" stop-color="#ff009d"/><stop offset=".9745" stop-color="#ff0073"/><stop offset="1" stop-color="#ff006f"/></linearGradient>
<linearGradient id="c105" gradientUnits="userSpaceOnUse" x1="1009" x2="1436"><stop offset="0" stop-color="#005eff"/><stop offset=".2319" stop-color="#0339ff"/><stop offset=".4895" stop-color="#ac0bff"/><stop offset=".5691" stop-color="#e500ff"/><stop offset=".6089" stop-color="#ff00fc"/><stop offset=".6979" stop-color="#ff00c8"/><stop offset=".8197" stop-color="#ff009a"/><stop offset="1" stop-color="#ff0071"/></linearGradient>
<linearGradient id="c106" gradientUnits="userSpaceOnUse" x1="1010" x2="1434"><stop offset="0" stop-color="#005cff"/><stop offset=".2311" stop-color="#0238ff"/><stop offset=".5024" stop-color="#b208ff"/><stop offset=".5684" stop-color="#e000ff"/><stop offset=".6156" stop-color="#ff00fc"/><stop offset=".7028" stop-color="#ff00ca"/><stop offset=".8208" stop-color="#ff009d"/><stop offset=".9976" stop-color="#ff0074"/><stop offset="1" stop-color="#ff0074"/></linearGradient>
<linearGradient id="c107" gradientUnits="userSpaceOnUse" x1="1011" x2="1432"><stop offset="0" stop-color="#005aff"/><stop offset=".2328" stop-color="#0336ff"/><stop offset=".5012" stop-color="#ae08ff"/><stop offset=".5653" stop-color="#da00ff"/><stop offset=".6223" stop-color="#ff00fc"/><stop offset=".715" stop-color="#ff00c8"/><stop offset=".848" stop-color="#ff0098"/><stop offset="1" stop-color="#ff0076"/></linearGradient>
<linearGradient id="c108" gradientUnits="userSpaceOnUse" x1="1012" x2="1430"><stop offset="0" stop-color="#0058ff"/><stop offset=".2321" stop-color="#0334ff"/><stop offset=".4976" stop-color="#a808ff"/><stop offset=".5622" stop-color="#d400ff"/><stop offset=".6292" stop-color="#ff00fc"/><stop offset=".7249" stop-color="#ff00c7"/><stop offset=".866" stop-color="#ff0096"/><stop offset="1" stop-color="#ff0079"/></linearGradient>
<linearGradient id="c109" gradientUnits="userSpaceOnUse" x1="1013" x2="1428"><stop offset="0" stop-color="#0056ff"/><stop offset=".2313" stop-color="#0233ff"/><stop offset=".5253" stop-color="#b702ff"/><stop offset=".6361" stop-color="#ff00fc"/><stop offset=".7325" stop-color="#ff00c8"/><stop offset=".8627" stop-color="#ff009a"/><stop offset="1" stop-color="#ff007b"/></linearGradient>
<linearGradient id="c110" gradientUnits="userSpaceOnUse" x1="1014" x2="1426"><stop offset="0" stop-color="#0054ff"/><stop offset=".233" stop-color="#0331ff"/><stop offset=".5243" stop-color="#b302ff"/><stop offset=".6432" stop-color="#ff00fc"/><stop offset=".7451" stop-color="#ff00c6"/><stop offset=".8859" stop-color="#ff0097"/><stop offset="1" stop-color="#ff007e"/></linearGradient>
<linearGradient id="c111" gradientUnits="userSpaceOnUse" x1="1015" x2="1424"><stop offset="0" stop-color="#0052ff"/><stop offset=".2323" stop-color="#0330ff"/><stop offset=".5086" stop-color="#a604ff"/><stop offset=".5868" stop-color="#d800ff"/><stop offset=".6504" stop-color="#ff00fc"/><stop offset=".7482" stop-color="#ff00c9"/><stop offset=".8778" stop-color="#ff009c"/><stop offset="1" stop-color="#ff0080"/></linearGradient>
<linearGradient id="c112" gradientUnits="userSpaceOnUse" x1="1017" x2="1422"><stop offset="0" stop-color="#0050ff"/><stop offset=".2321" stop-color="#032eff"/><stop offset=".5432" stop-color="#b900ff"/><stop offset=".6568" stop-color="#ff00fc"/><stop offset=".7605" stop-color="#ff00c7"/><stop offset=".8963" stop-color="#ff009a"/><stop offset="1" stop-color="#ff0083"/></linearGradient>
<linearGradient id="c113" gradientUnits="userSpaceOnUse" x1="1018" x2="1420"><stop offset="0" stop-color="#004eff"/><stop offset=".2313" stop-color="#032dff"/><stop offset=".5373" stop-color="#b200ff"/><stop offset=".6642" stop-color="#ff00fd"/><stop offset=".7562" stop-color="#ff00cd"/><stop offset=".8856" stop-color="#ff00a0"/><stop offset="1" stop-color="#ff0085"/></linearGradient>
<linearGradient id="c114" gradientUnits="userSpaceOnUse" x1="1019" x2="1418"><stop offset="0" stop-color="#004cff"/><stop offset=".2306" stop-color="#032cff"/><stop offset=".5238" stop-color="#a700ff"/><stop offset=".6717" stop-color="#ff00fd"/><stop offset=".7694" stop-color="#ff00cb"/><stop offset=".9123" stop-color="#ff009c"/><stop offset="1" stop-color="#f08"/></linearGradient>
<linearGradient id="c115" gradientUnits="userSpaceOnUse" x1="1020" x2="1416"><stop offset="0" stop-color="#004aff"/><stop offset=".2323" stop-color="#032bff"/><stop offset=".5328" stop-color="#a900ff"/><stop offset=".6793" stop-color="#ff00fd"/><stop offset=".7727" stop-color="#ff00ce"/><stop offset=".9015" stop-color="#ff00a2"/><stop offset="1" stop-color="#ff008b"/></linearGradient>
<linearGradient id="c116" gradientUnits="userSpaceOnUse" x1="1021" x2="1414"><stop offset="0" stop-color="#0049ff"/><stop offset=".2316" stop-color="#0329ff"/><stop offset=".5293" stop-color="#a400ff"/><stop offset=".687" stop-color="#ff00fd"/><stop offset=".7888" stop-color="#ff00cb"/><stop offset=".9313" stop-color="#ff009d"/><stop offset="1" stop-color="#ff008e"/></linearGradient>
<linearGradient id="c117" gradientUnits="userSpaceOnUse" x1="1022" x2="1413"><stop offset="0" stop-color="#0047ff"/><stop offset=".2302" stop-color="#0328ff"/><stop offset=".5243" stop-color="#9f00ff"/><stop offset=".6931" stop-color="#ff00fd"/><stop offset=".8005" stop-color="#ff00c9"/><stop offset=".954" stop-color="#ff009a"/><stop offset="1" stop-color="#ff0090"/></linearGradient>
<linearGradient id="c118" gradientUnits="userSpaceOnUse" x1="1023" x2="1411"><stop offset="0" stop-color="#0045ff"/><stop offset=".232" stop-color="#0327ff"/><stop offset=".5206" stop-color="#9b00ff"/><stop offset=".701" stop-color="#ff00fd"/><stop offset=".8015" stop-color="#ff00cd"/><stop offset=".9459" stop-color="#ff009f"/><stop offset="1" stop-color="#ff0093"/></linearGradient>
<linearGradient id="c119" gradientUnits="userSpaceOnUse" x1="1025" x2="1409"><stop offset="0" stop-color="#0043ff"/><stop offset=".2292" stop-color="#0326ff"/><stop offset=".5156" stop-color="#9600ff"/><stop offset=".7083" stop-color="#ff00fd"/><stop offset=".8177" stop-color="#ff00ca"/><stop offset=".974" stop-color="#ff009b"/><stop offset="1" stop-color="#ff0096"/></linearGradient>
<linearGradient id="c120" gradientUnits="userSpaceOnUse" x1="1026" x2="1407"><stop offset="0" stop-color="#0042ff"/><stop offset=".2283" stop-color="#0225ff"/><stop offset=".5118" stop-color="#9100ff"/><stop offset=".7165" stop-color="#ff00fd"/><stop offset=".8215" stop-color="#ff00cd"/><stop offset=".9659" stop-color="#ff00a0"/><stop offset="1" stop-color="#ff0098"/></linearGradient>
<linearGradient id="c121" gradientUnits="userSpaceOnUse" x1="1027" x2="1405"><stop offset="0" stop-color="#0040ff"/><stop offset=".2302" stop-color="#0323ff"/><stop offset=".5106" stop-color="#8e00ff"/><stop offset=".7249" stop-color="#ff00fd"/><stop offset=".836" stop-color="#ff00cb"/><stop offset=".9868" stop-color="#ff009e"/><stop offset="1" stop-color="#ff009b"/></linearGradient>
<linearGradient id="c122" gradientUnits="userSpaceOnUse" x1="1028" x2="1403"><stop offset="0" stop-color="#003fff"/><stop offset=".2293" stop-color="#0322ff"/><stop offset=".5067" stop-color="#8a00ff"/><stop offset=".7333" stop-color="#ff00fd"/><stop offset=".8507" stop-color="#ff00c9"/><stop offset="1" stop-color="#ff009e"/></linearGradient>
<linearGradient id="c123" gradientUnits="userSpaceOnUse" x1="1029" x2="1401"><stop offset="0" stop-color="#003dff"/><stop offset=".2285" stop-color="#0221ff"/><stop offset=".5027" stop-color="#8500ff"/><stop offset=".7419" stop-color="#ff00fd"/><stop offset=".8548" stop-color="#f0c"/><stop offset="1" stop-color="#ff00a2"/></linearGradient>
<linearGradient id="c124" gradientUnits="userSpaceOnUse" x1="1030" x2="1399"><stop offset="0" stop-color="#003cff"/><stop offset=".2304" stop-color="#0320ff"/><stop offset=".4986" stop-color="#8100ff"/><stop offset=".7507" stop-color="#ff00fd"/><stop offset=".8699" stop-color="#ff00ca"/><stop offset="1" stop-color="#ff00a5"/></linearGradient>
<linearGradient id="c125" gradientUnits="userSpaceOnUse" x1="1031" x2="1397"><stop offset="0" stop-color="#003aff"/><stop offset=".2295" stop-color="#031fff"/><stop offset=".4945" stop-color="#7d00ff"/><stop offset=".7596" stop-color="#ff00fd"/><stop offset=".8743" stop-color="#f0c"/><stop offset="1" stop-color="#ff00a8"/></linearGradient>
<linearGradient id="c126" gradientUnits="userSpaceOnUse" x1="1032" x2="1395"><stop offset="0" stop-color="#0039ff"/><stop offset=".2287" stop-color="#021eff"/><stop offset=".4904" stop-color="#7900ff"/><stop offset=".7686" stop-color="#ff00fd"/><stop offset=".8898" stop-color="#ff00cb"/><stop offset="1" stop-color="#ff00ab"/></linearGradient>
<linearGradient id="c127" gradientUnits="userSpaceOnUse" x1="1033" x2="1393"><stop offset="0" stop-color="#0037ff"/><stop offset=".2306" stop-color="#031dff"/><stop offset=".4861" stop-color="#7400ff"/><stop offset=".7778" stop-color="#ff00fd"/><stop offset=".9056" stop-color="#ff00c9"/><stop offset="1" stop-color="#ff00ae"/></linearGradient>
<linearGradient id="c128" gradientUnits="userSpaceOnUse" x1="1034" x2="1391"><stop offset="0" stop-color="#0036ff"/><stop offset=".2297" stop-color="#031cff"/><stop offset=".4818" stop-color="#7100ff"/><stop offset=".7871" stop-color="#ff00fd"/><stop offset=".9132" stop-color="#ff00cb"/><stop offset="1" stop-color="#ff00b2"/></linearGradient>
<linearGradient id="c129" gradientUnits="userSpaceOnUse" x1="1036" x2="1389"><stop offset="0" stop-color="#0034ff"/><stop offset=".2266" stop-color="#021bff"/><stop offset=".4759" stop-color="#6d00ff"/><stop offset=".796" stop-color="#ff00fd"/><stop offset=".932" stop-color="#ff00c8"/><stop offset="1" stop-color="#ff00b5"/></linearGradient>
<linearGradient id="c130" gradientUnits="userSpaceOnUse" x1="1037" x2="1387"><stop offset="0" stop-color="#03f"/><stop offset=".2286" stop-color="#031aff"/><stop offset=".4714" stop-color="#6900ff"/><stop offset=".8057" stop-color="#ff00fd"/><stop offset=".9314" stop-color="#f0c"/><stop offset="1" stop-color="#ff00b8"/></linearGradient>
<linearGradient id="c131" gradientUnits="userSpaceOnUse" x1="1038" x2="1385"><stop offset="0" stop-color="#0031ff"/><stop offset=".2277" stop-color="#0319ff"/><stop offset=".4697" stop-color="#60f"/><stop offset=".8156" stop-color="#ff00fd"/><stop offset=".9539" stop-color="#ff00c9"/><stop offset="1" stop-color="#ff00bc"/></linearGradient>
<linearGradient id="c132" gradientUnits="userSpaceOnUse" x1="1039" x2="1383"><stop offset="0" stop-color="#0030ff"/><stop offset=".2297" stop-color="#0318ff"/><stop offset=".4651" stop-color="#6300ff"/><stop offset=".8285" stop-color="#ff00fc"/><stop offset=".9622" stop-color="#ff00ca"/><stop offset="1" stop-color="#ff00c0"/></linearGradient>
<linearGradient id="c133" gradientUnits="userSpaceOnUse" x1="1041" x2="1381"><stop offset="0" stop-color="#002fff"/><stop offset=".2265" stop-color="#0317ff"/><stop offset=".4588" stop-color="#5f00ff"/><stop offset=".8382" stop-color="#ff00fc"/><stop offset=".9853" stop-color="#ff00c7"/><stop offset="1" stop-color="#ff00c3"/></linearGradient>
<linearGradient id="c134" gradientUnits="userSpaceOnUse" x1="1042" x2="1379"><stop offset="0" stop-color="#002dff"/><stop offset=".2255" stop-color="#0316ff"/><stop offset=".457" stop-color="#5d00ff"/><stop offset=".8487" stop-color="#ff00fc"/><stop offset=".9911" stop-color="#ff00c9"/><stop offset="1" stop-color="#ff00c7"/></linearGradient>
<linearGradient id="c135" gradientUnits="userSpaceOnUse" x1="1044" x2="1378"><stop offset="0" stop-color="#002cff"/><stop offset=".2246" stop-color="#0315ff"/><stop offset=".4491" stop-color="#5900ff"/><stop offset=".8533" stop-color="#ff00fd"/><stop offset=".994" stop-color="#ff00cb"/><stop offset="1" stop-color="#ff00ca"/></linearGradient>
<linearGradient id="c136" gradientUnits="userSpaceOnUse" x1="1045" x2="1376"><stop offset="0" stop-color="#002aff"/><stop offset=".2236" stop-color="#0314ff"/><stop offset=".4441" stop-color="#5600ff"/><stop offset=".8489" stop-color="#fa00ff"/><stop offset=".8731" stop-color="#ff00fa"/><stop offset="1" stop-color="#ff00ce"/></linearGradient>
<linearGradient id="c137" gradientUnits="userSpaceOnUse" x1="1046" x2="1374"><stop offset="0" stop-color="#0029ff"/><stop offset=".2226" stop-color="#0313ff"/><stop offset=".4421" stop-color="#5300ff"/><stop offset=".875" stop-color="#ff00fd"/><stop offset="1" stop-color="#ff00d1"/></linearGradient>
<linearGradient id="c138" gradientUnits="userSpaceOnUse" x1="1047" x2="1372"><stop offset="0" stop-color="#0028ff"/><stop offset=".2246" stop-color="#0312ff"/><stop offset=".4369" stop-color="#5000ff"/><stop offset=".8892" stop-color="#ff00fc"/><stop offset="1" stop-color="#ff00d5"/></linearGradient>
<linearGradient id="c139" gradientUnits="userSpaceOnUse" x1="1049" x2="1370"><stop offset="0" stop-color="#0027ff"/><stop offset=".2212" stop-color="#0312ff"/><stop offset=".4268" stop-color="#4c00ff"/><stop offset=".8816" stop-color="#fa00ff"/><stop offset=".9065" stop-color="#ff00fa"/><stop offset="1" stop-color="#ff00d9"/></linearGradient>
<linearGradient id="c140" gradientUnits="userSpaceOnUse" x1="1050" x2="1368"><stop offset="0" stop-color="#0025ff"/><stop offset=".2201" stop-color="#0311ff"/><stop offset=".4245" stop-color="#4a00ff"/><stop offset=".9119" stop-color="#ff00fc"/><stop offset="1" stop-color="#f0d"/></linearGradient>
<linearGradient id="c141" gradientUnits="userSpaceOnUse" x1="1051" x2="1366"><stop offset="0" stop-color="#0024ff"/><stop offset=".2222" stop-color="#0310ff"/><stop offset=".419" stop-color="#4700ff"/><stop offset=".8794" stop-color="#f000ff"/><stop offset=".9238" stop-color="#ff00fc"/><stop offset="1" stop-color="#ff00e2"/></linearGradient>
<linearGradient id="c142" gradientUnits="userSpaceOnUse" x1="1053" x2="1364"><stop offset="0" stop-color="#0023ff"/><stop offset=".2186" stop-color="#030fff"/><stop offset=".4148" stop-color="#4500ff"/><stop offset=".8746" stop-color="#ea00ff"/><stop offset=".9357" stop-color="#ff00fc"/><stop offset="1" stop-color="#ff00e6"/></linearGradient>
<linearGradient id="c143" gradientUnits="userSpaceOnUse" x1="1054" x2="1362"><stop offset="0" stop-color="#02f"/><stop offset=".2175" stop-color="#030eff"/><stop offset=".4091" stop-color="#4100ff"/><stop offset=".9286" stop-color="#fa00ff"/><stop offset=".961" stop-color="#ff00f8"/><stop offset="1" stop-color="#ff00ea"/></linearGradient>
<linearGradient id="c144" gradientUnits="userSpaceOnUse" x1="1055" x2="1360"><stop offset="0" stop-color="#0021ff"/><stop offset=".2197" stop-color="#030dff"/><stop offset=".4066" stop-color="#4000ff"/><stop offset=".9115" stop-color="#ef00ff"/><stop offset=".9607" stop-color="#ff00fc"/><stop offset="1" stop-color="#ff00ef"/></linearGradient>
<linearGradient id="c145" gradientUnits="userSpaceOnUse" x1="1057" x2="1358"><stop offset="0" stop-color="#001fff"/><stop offset=".2159" stop-color="#030dff"/><stop offset=".3953" stop-color="#3c00ff"/><stop offset=".887" stop-color="#e200ff"/><stop offset=".9734" stop-color="#ff00fc"/><stop offset="1" stop-color="#ff00f3"/></linearGradient>
<linearGradient id="c146" gradientUnits="userSpaceOnUse" x1="1058" x2="1356"><stop offset="0" stop-color="#001eff"/><stop offset=".2148" stop-color="#030cff"/><stop offset=".3926" stop-color="#3a00ff"/><stop offset=".9128" stop-color="#e700ff"/><stop offset=".9866" stop-color="#ff00fc"/><stop offset="1" stop-color="#ff00f8"/></linearGradient>
<linearGradient id="c147" gradientUnits="userSpaceOnUse" x1="1059" x2="1354"><stop offset="0" stop-color="#001dff"/><stop offset=".2169" stop-color="#030bff"/><stop offset=".3864" stop-color="#3700ff"/><stop offset="1" stop-color="#ff00fc"/></linearGradient>
<linearGradient id="c148" gradientUnits="userSpaceOnUse" x1="1060" x2="1352"><stop offset="0" stop-color="#001cff"/><stop offset=".2158" stop-color="#030aff"/><stop offset=".3836" stop-color="#3500ff"/><stop offset=".9315" stop-color="#e500ff"/><stop offset="1" stop-color="#fd00ff"/></linearGradient>
<linearGradient id="c149" gradientUnits="userSpaceOnUse" x1="1061" x2="1350"><stop offset="0" stop-color="#001bff"/><stop offset=".2145" stop-color="#030aff"/><stop offset=".3772" stop-color="#3200ff"/><stop offset=".9412" stop-color="#e400ff"/><stop offset="1" stop-color="#f800ff"/></linearGradient>
<linearGradient id="c150" gradientUnits="userSpaceOnUse" x1="1062" x2="1348"><stop offset="0" stop-color="#001aff"/><stop offset=".2168" stop-color="#0309ff"/><stop offset=".3706" stop-color="#2f00ff"/><stop offset=".951" stop-color="#e300ff"/><stop offset="1" stop-color="#f400ff"/></linearGradient>
<linearGradient id="c151" gradientUnits="userSpaceOnUse" x1="1064" x2="1346"><stop offset="0" stop-color="#0019ff"/><stop offset=".2128" stop-color="#0308ff"/><stop offset=".3688" stop-color="#2f00ff"/><stop offset=".9362" stop-color="#da00ff"/><stop offset="1" stop-color="#ef00ff"/></linearGradient>
<linearGradient id="c152" gradientUnits="userSpaceOnUse" x1="1065" x2="1344"><stop offset="0" stop-color="#0018ff"/><stop offset=".2115" stop-color="#0308ff"/><stop offset=".3584" stop-color="#2b00ff"/><stop offset=".9427" stop-color="#d800ff"/><stop offset="1" stop-color="#eb00ff"/></linearGradient>
<linearGradient id="c153" gradientUnits="userSpaceOnUse" x1="1067" x2="1342"><stop offset="0" stop-color="#0017ff"/><stop offset=".2109" stop-color="#0307ff"/><stop offset=".3564" stop-color="#2b00ff"/><stop offset=".9164" stop-color="#c0f"/><stop offset="1" stop-color="#e600ff"/></linearGradient>
<linearGradient id="c154" gradientUnits="userSpaceOnUse" x1="1069" x2="1341"><stop offset="0" stop-color="#0015ff"/><stop offset=".2059" stop-color="#0306ff"/><stop offset=".3603" stop-color="#2c00ff"/><stop offset=".9485" stop-color="#d300ff"/><stop offset="1" stop-color="#e300ff"/></linearGradient>
<linearGradient id="c155" gradientUnits="userSpaceOnUse" x1="1070" x2="1339"><stop offset="0" stop-color="#0014ff"/><stop offset=".2082" stop-color="#0305ff"/><stop offset=".3755" stop-color="#2f00ff"/><stop offset=".9926" stop-color="#dc00ff"/><stop offset="1" stop-color="#df00ff"/></linearGradient>
<linearGradient id="c156" gradientUnits="userSpaceOnUse" x1="1072" x2="1337"><stop offset="0" stop-color="#0013ff"/><stop offset=".2038" stop-color="#0305ff"/><stop offset=".3547" stop-color="#2a00ff"/><stop offset=".9547" stop-color="#cd00ff"/><stop offset="1" stop-color="#db00ff"/></linearGradient>
<linearGradient id="c157" gradientUnits="userSpaceOnUse" x1="1073" x2="1335"><stop offset="0" stop-color="#0012ff"/><stop offset=".2023" stop-color="#0304ff"/><stop offset=".416" stop-color="#3900ff"/><stop offset="1" stop-color="#d600ff"/></linearGradient>
<linearGradient id="c158" gradientUnits="userSpaceOnUse" x1="1074" x2="1333"><stop offset="0" stop-color="#01f"/><stop offset=".2046" stop-color="#0303ff"/><stop offset=".888" stop-color="#b300ff"/><stop offset="1" stop-color="#d200ff"/></linearGradient>
<linearGradient id="c159" gradientUnits="userSpaceOnUse" x1="1076" x2="1331"><stop offset="0" stop-color="#0010ff"/><stop offset=".2" stop-color="#0303ff"/><stop offset=".8667" stop-color="#ab00ff"/><stop offset="1" stop-color="#ce00ff"/></linearGradient>
<linearGradient id="c160" gradientUnits="userSpaceOnUse" x1="1077" x2="1329"><stop offset="0" stop-color="#000fff"/><stop offset=".1984" stop-color="#0302ff"/><stop offset=".9127" stop-color="#b300ff"/><stop offset="1" stop-color="#ca00ff"/></linearGradient>
<linearGradient id="c161" gradientUnits="userSpaceOnUse" x1="1078" x2="1327"><stop offset="0" stop-color="#000fff"/><stop offset=".2008" stop-color="#0301ff"/><stop offset=".9478" stop-color="#b900ff"/><stop offset="1" stop-color="#c700ff"/></linearGradient>
<linearGradient id="c162" gradientUnits="userSpaceOnUse" x1="1080" x2="1325"><stop offset="0" stop-color="#000dff"/><stop offset=".1959" stop-color="#0301ff"/><stop offset=".9633" stop-color="#b900ff"/><stop offset="1" stop-color="#c300ff"/></linearGradient>
<linearGradient id="c163" gradientUnits="userSpaceOnUse" x1="1081" x2="1323"><stop offset="0" stop-color="#000dff"/><stop offset=".1942" stop-color="#0300ff"/><stop offset=".8926" stop-color="#a500ff"/><stop offset="1" stop-color="#bf00ff"/></linearGradient>
<linearGradient id="c164" gradientUnits="userSpaceOnUse" x1="1083" x2="1321"><stop offset="0" stop-color="#000bff"/><stop offset=".1933" stop-color="#0300ff"/><stop offset="1" stop-color="#b0f"/></linearGradient>
<linearGradient id="c165" gradientUnits="userSpaceOnUse" x1="1084" x2="1319"><stop offset="0" stop-color="#000bff"/><stop offset=".1915" stop-color="#0300ff"/><stop offset=".9489" stop-color="#ac00ff"/><stop offset="1" stop-color="#b800ff"/></linearGradient>
<linearGradient id="c166" gradientUnits="userSpaceOnUse" x1="1086" x2="1317"><stop offset="0" stop-color="#000aff"/><stop offset=".1861" stop-color="#0300ff"/><stop offset=".974" stop-color="#ae00ff"/><stop offset="1" stop-color="#b400ff"/></linearGradient>
<linearGradient id="c167" gradientUnits="userSpaceOnUse" x1="1087" x2="1315"><stop offset="0" stop-color="#0009ff"/><stop offset=".1886" stop-color="#0300ff"/><stop offset="1" stop-color="#b100ff"/></linearGradient>
<linearGradient id="c168" gradientUnits="userSpaceOnUse" x1="1089" x2="1313"><stop offset="0" stop-color="#0008ff"/><stop offset=".183" stop-color="#0300ff"/><stop offset="1" stop-color="#ad00ff"/></linearGradient>
<linearGradient id="c169" gradientUnits="userSpaceOnUse" x1="1091" x2="1311"><stop offset="0" stop-color="#0007ff"/><stop offset=".1773" stop-color="#0300ff"/><stop offset=".9955" stop-color="#a900ff"/><stop offset="1" stop-color="#a0f"/></linearGradient>
<linearGradient id="c170" gradientUnits="userSpaceOnUse" x1="1092" x2="1309"><stop offset="0" stop-color="#0006ff"/><stop offset=".1797" stop-color="#0300ff"/><stop offset="1" stop-color="#a600ff"/></linearGradient>
<linearGradient id="c171" gradientUnits="userSpaceOnUse" x1="1094" x2="1307"><stop offset="0" stop-color="#0005ff"/><stop offset=".1737" stop-color="#0300ff"/><stop offset="1" stop-color="#a300ff"/></linearGradient>
<linearGradient id="c172" gradientUnits="userSpaceOnUse" x1="1095" x2="1305"><stop offset="0" stop-color="#0004ff"/><stop offset=".1714" stop-color="#0300ff"/><stop offset="1" stop-color="#a000ff"/></linearGradient>
<linearGradient id="c173" gradientUnits="userSpaceOnUse" x1="1097" x2="1304"><stop offset="0" stop-color="#0003ff"/><stop offset=".1691" stop-color="#0300ff"/><stop offset="1" stop-color="#9e00ff"/></linearGradient>
<linearGradient id="c174" gradientUnits="userSpaceOnUse" x1="1099" x2="1302"><stop offset="0" stop-color="#0002ff"/><stop offset=".1626" stop-color="#0300ff"/><stop offset="1" stop-color="#9a00ff"/></linearGradient>
<linearGradient id="c175" gradientUnits="userSpaceOnUse" x1="1101" x2="1300"><stop offset="0" stop-color="#0001ff"/><stop offset=".1608" stop-color="#0300ff"/><stop offset="1" stop-color="#9700ff"/></linearGradient>
<linearGradient id="c176" gradientUnits="userSpaceOnUse" x1="1102" x2="1298"><stop offset="0" stop-color="#0001ff"/><stop offset=".1582" stop-color="#0300ff"/><stop offset="1" stop-color="#9400ff"/></linearGradient>
<linearGradient id="c177" gradientUnits="userSpaceOnUse" x1="1104" x2="1296"><stop offset="0" stop-color="#00f"/><stop offset=".151" stop-color="#0300ff"/><stop offset="1" stop-color="#9100ff"/></linearGradient>
<linearGradient id="c178" gradientUnits="userSpaceOnUse" x1="1105" x2="1294"><stop offset="0" stop-color="#00f"/><stop offset=".1534" stop-color="#0300ff"/><stop offset="1" stop-color="#8e00ff"/></linearGradient>
<linearGradient id="c179" gradientUnits="userSpaceOnUse" x1="1107" x2="1292"><stop offset="0" stop-color="#00f"/><stop offset=".1459" stop-color="#0300ff"/><stop offset="1" stop-color="#8b00ff"/></linearGradient>
<linearGradient id="c180" gradientUnits="userSpaceOnUse" x1="1109" x2="1290"><stop offset="0" stop-color="#00f"/><stop offset=".1381" stop-color="#0300ff"/><stop offset="1" stop-color="#80f"/></linearGradient>
<linearGradient id="c181" gradientUnits="userSpaceOnUse" x1="1110" x2="1288"><stop offset="0" stop-color="#00f"/><stop offset=".1404" stop-color="#0300ff"/><stop offset="1" stop-color="#8500ff"/></linearGradient>
<linearGradient id="c182" gradientUnits="userSpaceOnUse" x1="1112" x2="1286"><stop offset="0" stop-color="#00f"/><stop offset=".1322" stop-color="#0300ff"/><stop offset="1" stop-color="#8200ff"/></linearGradient>
<linearGradient id="c183" gradientUnits="userSpaceOnUse" x1="1114" x2="1284"><stop offset="0" stop-color="#00f"/><stop offset=".1235" stop-color="#0300ff"/><stop offset="1" stop-color="#8000ff"/></linearGradient>
<linearGradient id="c184" gradientUnits="userSpaceOnUse" x1="1115" x2="1282"><stop offset="0" stop-color="#00f"/><stop offset=".1257" stop-color="#0300ff"/><stop offset="1" stop-color="#7d00ff"/></linearGradient>
<linearGradient id="c185" gradientUnits="userSpaceOnUse" x1="1117" x2="1280"><stop offset="0" stop-color="#00f"/><stop offset=".1227" stop-color="#0400ff"/><stop offset="1" stop-color="#7a00ff"/></linearGradient>
<linearGradient id="c186" gradientUnits="userSpaceOnUse" x1="1119" x2="1278"><stop offset="0" stop-color="#00f"/><stop offset=".1069" stop-color="#0300ff"/><stop offset="1" stop-color="#70f"/></linearGradient>
<linearGradient id="c187" gradientUnits="userSpaceOnUse" x1="1121" x2="1276"><stop offset="0" stop-color="#00f"/><stop offset=".1097" stop-color="#0400ff"/><stop offset="1" stop-color="#7500ff"/></linearGradient>
<linearGradient id="c188" gradientUnits="userSpaceOnUse" x1="1124" x2="1274"><stop offset="0" stop-color="#00f"/><stop offset=".1067" stop-color="#0500ff"/><stop offset="1" stop-color="#7200ff"/></linearGradient>
<linearGradient id="c189" gradientUnits="userSpaceOnUse" x1="1125" x2="1272"><stop offset="0" stop-color="#00f"/><stop offset=".102" stop-color="#0500ff"/><stop offset="1" stop-color="#6f00ff"/></linearGradient>
<linearGradient id="c190" gradientUnits="userSpaceOnUse" x1="1127" x2="1270"><stop offset="0" stop-color="#00f"/><stop offset=".1049" stop-color="#0600ff"/><stop offset="1" stop-color="#6d00ff"/></linearGradient>
<linearGradient id="c191" gradientUnits="userSpaceOnUse" x1="1129" x2="1268"><stop offset="0" stop-color="#00f"/><stop offset=".1511" stop-color="#0c00ff"/><stop offset="1" stop-color="#6a00ff"/></linearGradient>
<linearGradient id="c192" gradientUnits="userSpaceOnUse" x1="1131" x2="1267"><stop offset="0" stop-color="#00f"/><stop offset=".7059" stop-color="#4800ff"/><stop offset="1" stop-color="#6900ff"/></linearGradient>
<linearGradient id="c193" gradientUnits="userSpaceOnUse" x1="1134" x2="1265"><stop offset="0" stop-color="#00f"/><stop offset="1" stop-color="#60f"/></linearGradient>
<linearGradient id="c194" gradientUnits="userSpaceOnUse" x1="1136" x2="1263"><stop offset="0" stop-color="#0100ff"/><stop offset="1" stop-color="#6400ff"/></linearGradient>
<linearGradient id="c195" gradientUnits="userSpaceOnUse" x1="1138" x2="1261"><stop offset="0" stop-color="#0200ff"/><stop offset="1" stop-color="#6100ff"/></linearGradient>
<linearGradient id="c196" gradientUnits="userSpaceOnUse" x1="1140" x2="1259"><stop offset="0" stop-color="#0300ff"/><stop offset="1" stop-color="#5f00ff"/></linearGradient>
<linearGradient id="c197" gradientUnits="userSpaceOnUse" x1="1143" x2="1257"><stop offset="0" stop-color="#0500ff"/><stop offset="1" stop-color="#5d00ff"/></linearGradient>
<linearGradient id="c198" gradientUnits="userSpaceOnUse" x1="1144" x2="1255"><stop offset="0" stop-color="#0600ff"/><stop offset="1" stop-color="#5a00ff"/></linearGradient>
<linearGradient id="c199" gradientUnits="userSpaceOnUse" x1="1146" x2="1253"><stop offset="0" stop-color="#0700ff"/><stop offset="1" stop-color="#5800ff"/></linearGradient>
<linearGradient id="c200" gradientUnits="userSpaceOnUse" x1="1149" x2="1251"><stop offset="0" stop-color="#0900ff"/><stop offset="1" stop-color="#5600ff"/></linearGradient>
<linearGradient id="c201" gradientUnits="userSpaceOnUse" x1="1151" x2="1249"><stop offset="0" stop-color="#0a00ff"/><stop offset="1" stop-color="#5300ff"/></linearGradient>
<linearGradient id="c202" gradientUnits="userSpaceOnUse" x1="1154" x2="1247"><stop offset="0" stop-color="#0c00ff"/><stop offset="1" stop-color="#5100ff"/></linearGradient>
<linearGradient id="c203" gradientUnits="userSpaceOnUse" x1="1156" x2="1245"><stop offset="0" stop-color="#0d00ff"/><stop offset="1" stop-color="#4f00ff"/></linearGradient>
<linearGradient id="c204" gradientUnits="userSpaceOnUse" x1="1159" x2="1243"><stop offset="0" stop-color="#0f00ff"/><stop offset="1" stop-color="#4d00ff"/></linearGradient>
<linearGradient id="c205" gradientUnits="userSpaceOnUse" x1="1161" x2="1241"><stop offset="0" stop-color="#1000ff"/><stop offset="1" stop-color="#4b00ff"/></linearGradient>
<linearGradient id="c206" gradientUnits="userSpaceOnUse" x1="1164" x2="1239"><stop offset="0" stop-color="#1200ff"/><stop offset="1" stop-color="#4900ff"/></linearGradient>
<linearGradient id="c207" gradientUnits="userSpaceOnUse" x1="1166" x2="1237"><stop offset="0" stop-color="#1300ff"/><stop offset="1" stop-color="#4600ff"/></linearGradient>
<linearGradient id="c208" gradientUnits="userSpaceOnUse" x1="1169" x2="1235"><stop offset="0" stop-color="#1500ff"/><stop offset="1" stop-color="#40f"/></linearGradient>
<linearGradient id="c209" gradientUnits="userSpaceOnUse" x1="1171" x2="1233"><stop offset="0" stop-color="#1600ff"/><stop offset="1" stop-color="#4200ff"/></linearGradient>
<linearGradient id="c210" gradientUnits="userSpaceOnUse" x1="1173" x2="1231"><stop offset="0" stop-color="#1700ff"/><stop offset="1" stop-color="#4000ff"/></linearGradient>
<linearGradient id="c211" gradientUnits="userSpaceOnUse" x1="1175" x2="1230"><stop offset="0" stop-color="#1800ff"/><stop offset="1" stop-color="#3f00ff"/></linearGradient>
<linearGradient id="c212" gradientUnits="userSpaceOnUse" x1="1178" x2="1228"><stop offset="0" stop-color="#1a00ff"/><stop offset="1" stop-color="#3d00ff"/></linearGradient>
<linearGradient id="c213" gradientUnits="userSpaceOnUse" x1="1181" x2="1226"><stop offset="0" stop-color="#1b00ff"/><stop offset="1" stop-color="#3b00ff"/></linearGradient>
<linearGradient id="c214" gradientUnits="userSpaceOnUse" x1="1183" x2="1224"><stop offset="0" stop-color="#1c00ff"/><stop offset="1" stop-color="#3900ff"/></linearGradient>
<linearGradient id="c215" gradientUnits="userSpaceOnUse" x1="1185" x2="1222"><stop offset="0" stop-color="#1d00ff"/><stop offset="1" stop-color="#3700ff"/></linearGradient>
<linearGradient id="c216" gradientUnits="userSpaceOnUse" x1="1188" x2="1220"><stop offset="0" stop-color="#1f00ff"/><stop offset="1" stop-color="#3500ff"/></linearGradient>
<linearGradient id="c217" gradientUnits="userSpaceOnUse" x1="1190" x2="1218"><stop offset="0" stop-color="#2000ff"/><stop offset="1" stop-color="#30f"/></linearGradient>
<linearGradient id="c218" gradientUnits="userSpaceOnUse" x1="1193" x2="1216"><stop offset="0" stop-color="#20f"/><stop offset="1" stop-color="#3200ff"/></linearGradient>
<linearGradient id="c219" gradientUnits="userSpaceOnUse" x1="1195" x2="1214"><stop offset="0" stop-color="#2300ff"/><stop offset="1" stop-color="#3000ff"/></linearGradient>
<clipPath id="locus"><path d="M1206.5,505.9 1571.0,129.9 1132.9,79.6 1077.0,73.5 1045.4,70.5 1029.4,69.4 1017.5,68.8 997.8,68.5 987.9,68.8 978.1,69.8 972.2,71.3 968.1,72.8 965.5,74.1 963.2,75.7 961.1,77.7 959.1,79.9 957.4,82.5 955.9,85.4 954.8,88.7 953.8,92.3 953.2,96.3 952.8,103.3 952.9,108.4 953.4,114.1 954.9,123.7 958.2,138.9 961.8,152.1 968.4,172.4 974.7,189.5 982.0,207.7 990.5,227.3 1000.0,247.7 1006.9,261.2 1014.3,275.1 1026.1,296.1 1038.0,316.3 1050.1,336.0 1062.0,354.8 1069.7,366.4 1081.0,382.5 1095.2,401.7 1105.1,414.2 1114.4,425.9 1122.7,436.6 1132.2,446.7 1142.9,457.0 1156.1,468.6 1200.5,503.9 1203.4,505.9 1206.5,505.9Z"/></clipPath>
<clipPath id="plot"><rect x="951" y="58" width="599" height="461"/></clipPath>
<linearGradient id="ins" x1="0" y1="0" x2="1" y2="1"><stop offset="0" stop-color="#ff902c"/><stop offset=".5" stop-color="#ff6426"/><stop offset="1" stop-color="#ff3c22"/></linearGradient>
<clipPath id="insc"><rect x="1359" y="357.5" width="186" height="122"/></clipPath>
<linearGradient id="th" x1="0" y1="0" x2="0" y2="1"><stop offset="0" stop-color="#2d2d2d"/><stop offset="0.53" stop-color="#272727"/><stop offset="0.55" stop-color="#101010"/><stop offset="1" stop-color="#1c1c1c"/></linearGradient>
<clipPath id="tclip"><rect x="296" y="564" width="1262" height="215"/></clipPath>
<linearGradient id="tab" x1="0" y1="0" x2="0" y2="1"><stop offset="0" stop-color="#b4b4b4"/><stop offset="0.12" stop-color="#a6a6a6"/><stop offset="0.5" stop-color="#868686"/><stop offset="1" stop-color="#676767"/></linearGradient>
<linearGradient id="tabs" x1="0" y1="0" x2="0" y2="1"><stop offset="0" stop-color="#1c1c1c"/><stop offset="0.3" stop-color="#262626"/><stop offset="1" stop-color="#3a3a3a"/></linearGradient>
<linearGradient id="btn" x1="0" y1="0" x2="0" y2="1"><stop offset="0" stop-color="#b0b0b0"/><stop offset="0.1" stop-color="#a8a8a8"/><stop offset="1" stop-color="#747474"/></linearGradient>
<linearGradient id="btnd" x1="0" y1="0" x2="0" y2="1"><stop offset="0" stop-color="#4a4a4a"/><stop offset="1" stop-color="#2a2a2a"/></linearGradient>
<linearGradient id="btn2" x1="0" y1="0" x2="0" y2="1"><stop offset="0" stop-color="#b0b0b0"/><stop offset="0.1" stop-color="#a8a8a8"/><stop offset="1" stop-color="#7c7c7c"/></linearGradient>
<linearGradient id="circ" x1="0" y1="0" x2="0" y2="1"><stop offset="0" stop-color="#787878"/><stop offset="1" stop-color="#a4a4a4"/></linearGradient>
<linearGradient id="circd" x1="0" y1="0" x2="0" y2="1"><stop offset="0" stop-color="#2c2c2c"/><stop offset="1" stop-color="#3c3c3c"/></linearGradient>
<linearGradient id="sq" x1="0" y1="0" x2="0" y2="1"><stop offset="0" stop-color="#b4b4b4"/><stop offset="0.5" stop-color="#a4a4a4"/><stop offset="0.5" stop-color="#8c8c8c"/><stop offset="1" stop-color="#8a8a8a"/></linearGradient>
<linearGradient id="sqi" x1="0" y1="0" x2="0" y2="1"><stop offset="0" stop-color="#202020"/><stop offset="0.5" stop-color="#1a1a1a"/><stop offset="0.5" stop-color="#000"/><stop offset="1" stop-color="#000"/></linearGradient>
<linearGradient id="pnl" x1="0" y1="0" x2="0" y2="1"><stop offset="0" stop-color="#929292"/><stop offset="1" stop-color="#5c5c5c"/></linearGradient>
</defs>
<rect x="0" y="0" width="1558" height="14" fill="url(#tg)"/>
<text class="l" x="3.5" y="62.5" font-size="39.5" fill="#f4f4f4" textLength="224.5" lengthAdjust="spacingAndGlyphs" stroke="#f4f4f4" stroke-width="0.3">ColorChecker</text>
<text class="l" x="30.7" y="98.6" font-size="16" fill="#f0f0f0" textLength="312.3" lengthAdjust="spacingAndGlyphs" stroke="#f0f0f0" stroke-width="0.3">Display analysis is performed with the X-Rite/</text>
<text class="l" x="30.7" y="119.6" font-size="16" fill="#f0f0f0" textLength="256" lengthAdjust="spacingAndGlyphs" stroke="#f0f0f0" stroke-width="0.3">Pantone ColorChecker<tspan font-size="9" dy="-5.6">®</tspan><tspan dy="5.6"> target colors.</tspan></text>
<text class="l" x="98.8" y="164.3" font-size="20.5" fill="#f0f0f0" textLength="101" lengthAdjust="spacingAndGlyphs" stroke="#f0f0f0" stroke-width="0.35">dE Formula:</text>
<rect x="207.5" y="145" width="139" height="24.4" fill="url(#dd)" stroke="#2a2a2a" stroke-width="1"/>
<text class="l" x="211.7" y="165" font-size="15.4" fill="#f0f0f0" textLength="32.6" lengthAdjust="spacingAndGlyphs" stroke="#f0f0f0" stroke-width="0.2">2000</text>
<path d="M332 154.5h8.6l-4.3 5z" fill="#0a0a0a"/>
<text class="l" x="171.7" y="193.8" font-size="13.2" fill="#d2d2d2" text-anchor="middle" textLength="75" lengthAdjust="spacingAndGlyphs" stroke="#d2d2d2" stroke-width="0.2">DeltaE 2000</text>
<rect x="14.5" y="199.5" width="314" height="311" fill="#242424" stroke="#9b9b9b" stroke-width="1"/>
<path d="M14.5 510L14.5 516" stroke="#c8c8c8" stroke-width="1"/>
<text class="l" x="14.3" y="530.7" font-size="12.8" fill="#d2d2d2" text-anchor="middle" textLength="7.4" lengthAdjust="spacingAndGlyphs" stroke="#d2d2d2" stroke-width="0.2">0</text>
<path d="M55.5 199L55.5 510" stroke="#9b9b9b" stroke-width="1"/>
<path d="M55.5 510L55.5 516" stroke="#c8c8c8" stroke-width="1"/>
<text class="l" x="55.3" y="530.7" font-size="12.8" fill="#d2d2d2" text-anchor="middle" textLength="7.4" lengthAdjust="spacingAndGlyphs" stroke="#d2d2d2" stroke-width="0.2">2</text>
<path d="M97.5 199L97.5 510" stroke="#9b9b9b" stroke-width="1"/>
<path d="M97.5 510L97.5 516" stroke="#c8c8c8" stroke-width="1"/>
<text class="l" x="97.3" y="530.7" font-size="12.8" fill="#d2d2d2" text-anchor="middle" textLength="7.4" lengthAdjust="spacingAndGlyphs" stroke="#d2d2d2" stroke-width="0.2">4</text>
<path d="M139.5 199L139.5 510" stroke="#9b9b9b" stroke-width="1"/>
<path d="M139.5 510L139.5 516" stroke="#c8c8c8" stroke-width="1"/>
<text class="l" x="139.3" y="530.7" font-size="12.8" fill="#d2d2d2" text-anchor="middle" textLength="7.4" lengthAdjust="spacingAndGlyphs" stroke="#d2d2d2" stroke-width="0.2">6</text>
<path d="M181.5 199L181.5 510" stroke="#9b9b9b" stroke-width="1"/>
<path d="M181.5 510L181.5 516" stroke="#c8c8c8" stroke-width="1"/>
<text class="l" x="181.3" y="530.7" font-size="12.8" fill="#d2d2d2" text-anchor="middle" textLength="7.4" lengthAdjust="spacingAndGlyphs" stroke="#d2d2d2" stroke-width="0.2">8</text>
<path d="M224.5 199L224.5 510" stroke="#9b9b9b" stroke-width="1"/>
<path d="M224.5 510L224.5 516" stroke="#c8c8c8" stroke-width="1"/>
<text class="l" x="224.3" y="530.7" font-size="12.8" fill="#d2d2d2" text-anchor="middle" textLength="14.81" lengthAdjust="spacingAndGlyphs" stroke="#d2d2d2" stroke-width="0.2">10</text>
<path d="M264.5 199L264.5 510" stroke="#9b9b9b" stroke-width="1"/>
<path d="M264.5 510L264.5 516" stroke="#c8c8c8" stroke-width="1"/>
<text class="l" x="264.3" y="530.7" font-size="12.8" fill="#d2d2d2" text-anchor="middle" textLength="14.81" lengthAdjust="spacingAndGlyphs" stroke="#d2d2d2" stroke-width="0.2">12</text>
<path d="M307.5 199L307.5 510" stroke="#9b9b9b" stroke-width="1"/>
<path d="M307.5 510L307.5 516" stroke="#c8c8c8" stroke-width="1"/>
<text class="l" x="307.3" y="530.7" font-size="12.8" fill="#d2d2d2" text-anchor="middle" textLength="14.81" lengthAdjust="spacingAndGlyphs" stroke="#d2d2d2" stroke-width="0.2">14</text>
<rect x="15" y="504" width="38.71" height="5" fill="#000"/>
<rect x="15" y="505" width="37.71" height="3" fill="url(#b0)"/>
<rect x="15" y="505" width="37.71" height="1" fill="#000" opacity=".22"/>
<rect x="15" y="507" width="37.71" height="1" fill="#000" opacity=".4"/>
<rect x="15" y="497" width="40.05" height="5" fill="#000"/>
<rect x="15" y="498" width="39.05" height="3" fill="url(#b1)"/>
<rect x="15" y="498" width="39.05" height="1" fill="#000" opacity=".22"/>
<rect x="15" y="500" width="39.05" height="1" fill="#000" opacity=".4"/>
<rect x="15" y="491" width="36.47" height="5" fill="#000"/>
<rect x="15" y="492" width="35.47" height="3" fill="url(#b2)"/>
<rect x="15" y="492" width="35.47" height="1" fill="#000" opacity=".22"/>
<rect x="15" y="494" width="35.47" height="1" fill="#000" opacity=".4"/>
<rect x="15" y="484" width="28.91" height="5" fill="#000"/>
<rect x="15" y="485" width="27.91" height="3" fill="url(#b3)"/>
<rect x="15" y="485" width="27.91" height="1" fill="#000" opacity=".22"/>
<rect x="15" y="487" width="27.91" height="1" fill="#000" opacity=".4"/>
<rect x="15" y="477" width="22.45" height="5" fill="#000"/>
<rect x="15" y="478" width="21.45" height="3" fill="url(#b4)"/>
<rect x="15" y="478" width="21.45" height="1" fill="#000" opacity=".22"/>
<rect x="15" y="480" width="21.45" height="1" fill="#000" opacity=".4"/>
<rect x="15" y="464" width="29.84" height="5" fill="#000"/>
<rect x="15" y="465" width="28.84" height="3" fill="url(#b6)"/>
<rect x="15" y="465" width="28.84" height="1" fill="#000" opacity=".22"/>
<rect x="15" y="467" width="28.84" height="1" fill="#000" opacity=".4"/>
<rect x="15" y="458" width="23.84" height="5" fill="#000"/>
<rect x="15" y="459" width="22.84" height="3" fill="url(#b7)"/>
<rect x="15" y="459" width="22.84" height="1" fill="#000" opacity=".22"/>
<rect x="15" y="461" width="22.84" height="1" fill="#000" opacity=".4"/>
<rect x="15" y="451" width="61.63" height="5" fill="#000"/>
<rect x="15" y="452" width="60.63" height="3" fill="url(#b8)"/>
<rect x="15" y="452" width="60.63" height="1" fill="#000" opacity=".22"/>
<rect x="15" y="454" width="60.63" height="1" fill="#000" opacity=".4"/>
<rect x="15" y="444" width="21.24" height="5" fill="#000"/>
<rect x="15" y="445" width="20.24" height="3" fill="url(#b9)"/>
<rect x="15" y="445" width="20.24" height="1" fill="#000" opacity=".22"/>
<rect x="15" y="447" width="20.24" height="1" fill="#000" opacity=".4"/>
<rect x="15" y="438" width="30.67" height="5" fill="#000"/>
<rect x="15" y="439" width="29.67" height="3" fill="url(#b10)"/>
<rect x="15" y="439" width="29.67" height="1" fill="#000" opacity=".22"/>
<rect x="15" y="441" width="29.67" height="1" fill="#000" opacity=".4"/>
<rect x="15" y="431" width="45.84" height="5" fill="#000"/>
<rect x="15" y="432" width="44.84" height="3" fill="url(#b11)"/>
<rect x="15" y="432" width="44.84" height="1" fill="#000" opacity=".22"/>
<rect x="15" y="434" width="44.84" height="1" fill="#000" opacity=".4"/>
<rect x="15" y="424" width="33.11" height="5" fill="#000"/>
<rect x="15" y="425" width="32.11" height="3" fill="url(#b12)"/>
<rect x="15" y="425" width="32.11" height="1" fill="#000" opacity=".22"/>
<rect x="15" y="427" width="32.11" height="1" fill="#000" opacity=".4"/>
<rect x="15" y="418" width="55.12" height="5" fill="#000"/>
<rect x="15" y="419" width="54.12" height="3" fill="url(#b13)"/>
<rect x="15" y="419" width="54.12" height="1" fill="#000" opacity=".22"/>
<rect x="15" y="421" width="54.12" height="1" fill="#000" opacity=".4"/>
<rect x="15" y="411" width="27.01" height="5" fill="#000"/>
<rect x="15" y="412" width="26.01" height="3" fill="url(#b14)"/>
<rect x="15" y="412" width="26.01" height="1" fill="#000" opacity=".22"/>
<rect x="15" y="414" width="26.01" height="1" fill="#000" opacity=".4"/>
<rect x="15" y="405" width="16.75" height="5" fill="#000"/>
<rect x="15" y="406" width="15.75" height="3" fill="url(#b15)"/>
<rect x="15" y="406" width="15.75" height="1" fill="#000" opacity=".22"/>
<rect x="15" y="408" width="15.75" height="1" fill="#000" opacity=".4"/>
<rect x="15" y="398" width="12.78" height="5" fill="#000"/>
<rect x="15" y="399" width="11.78" height="3" fill="url(#b16)"/>
<rect x="15" y="399" width="11.78" height="1" fill="#000" opacity=".22"/>
<rect x="15" y="401" width="11.78" height="1" fill="#000" opacity=".4"/>
<rect x="15" y="391" width="37.89" height="5" fill="#000"/>
<rect x="15" y="392" width="36.89" height="3" fill="url(#b17)"/>
<rect x="15" y="392" width="36.89" height="1" fill="#000" opacity=".22"/>
<rect x="15" y="394" width="36.89" height="1" fill="#000" opacity=".4"/>
<rect x="15" y="385" width="43.75" height="5" fill="#000"/>
<rect x="15" y="386" width="42.75" height="3" fill="url(#b18)"/>
<rect x="15" y="386" width="42.75" height="1" fill="#000" opacity=".22"/>
<rect x="15" y="388" width="42.75" height="1" fill="#000" opacity=".4"/>
<rect x="15" y="378" width="34.96" height="5" fill="#000"/>
<rect x="15" y="379" width="33.96" height="3" fill="url(#b19)"/>
<rect x="15" y="379" width="33.96" height="1" fill="#000" opacity=".22"/>
<rect x="15" y="381" width="33.96" height="1" fill="#000" opacity=".4"/>
<rect x="15" y="372" width="27.01" height="5" fill="#000"/>
<rect x="15" y="373" width="26.01" height="3" fill="url(#b20)"/>
<rect x="15" y="373" width="26.01" height="1" fill="#000" opacity=".22"/>
<rect x="15" y="375" width="26.01" height="1" fill="#000" opacity=".4"/>
<rect x="15" y="365" width="29.94" height="5" fill="#000"/>
<rect x="15" y="366" width="28.94" height="3" fill="url(#b21)"/>
<rect x="15" y="366" width="28.94" height="1" fill="#000" opacity=".22"/>
<rect x="15" y="368" width="28.94" height="1" fill="#000" opacity=".4"/>
<rect x="15" y="358" width="22.2" height="5" fill="#000"/>
<rect x="15" y="359" width="21.2" height="3" fill="url(#b22)"/>
<rect x="15" y="359" width="21.2" height="1" fill="#000" opacity=".22"/>
<rect x="15" y="361" width="21.2" height="1" fill="#000" opacity=".4"/>
<rect x="15" y="352" width="72.85" height="5" fill="#000"/>
<rect x="15" y="353" width="71.85" height="3" fill="url(#b23)"/>
<rect x="15" y="353" width="71.85" height="1" fill="#000" opacity=".22"/>
<rect x="15" y="355" width="71.85" height="1" fill="#000" opacity=".4"/>
<rect x="15" y="345" width="51.92" height="5" fill="#000"/>
<rect x="15" y="346" width="50.92" height="3" fill="url(#b24)"/>
<rect x="15" y="346" width="50.92" height="1" fill="#000" opacity=".22"/>
<rect x="15" y="348" width="50.92" height="1" fill="#000" opacity=".4"/>
<rect x="15" y="338" width="50.87" height="5" fill="#000"/>
<rect x="15" y="339" width="49.87" height="3" fill="url(#b25)"/>
<rect x="15" y="339" width="49.87" height="1" fill="#000" opacity=".22"/>
<rect x="15" y="341" width="49.87" height="1" fill="#000" opacity=".4"/>
<rect x="15" y="332" width="56.1" height="5" fill="#000"/>
<rect x="15" y="333" width="55.1" height="3" fill="url(#b26)"/>
<rect x="15" y="333" width="55.1" height="1" fill="#000" opacity=".22"/>
<rect x="15" y="335" width="55.1" height="1" fill="#000" opacity=".4"/>
<rect x="15" y="325" width="67.82" height="5" fill="#000"/>
<rect x="15" y="326" width="66.82" height="3" fill="url(#b27)"/>
<rect x="15" y="326" width="66.82" height="1" fill="#000" opacity=".22"/>
<rect x="15" y="328" width="66.82" height="1" fill="#000" opacity=".4"/>
<rect x="15" y="319" width="23.87" height="5" fill="#000"/>
<rect x="15" y="320" width="22.87" height="3" fill="url(#b28)"/>
<rect x="15" y="320" width="22.87" height="1" fill="#000" opacity=".22"/>
<rect x="15" y="322" width="22.87" height="1" fill="#000" opacity=".4"/>
<rect x="15" y="312" width="14.87" height="5" fill="#000"/>
<rect x="15" y="313" width="13.87" height="3" fill="url(#b29)"/>
<rect x="15" y="313" width="13.87" height="1" fill="#000" opacity=".22"/>
<rect x="15" y="315" width="13.87" height="1" fill="#000" opacity=".4"/>
<rect x="15" y="305" width="29.94" height="5" fill="#000"/>
<rect x="15" y="306" width="28.94" height="3" fill="url(#b30)"/>
<rect x="15" y="306" width="28.94" height="1" fill="#000" opacity=".22"/>
<rect x="15" y="308" width="28.94" height="1" fill="#000" opacity=".4"/>
<rect x="15" y="299" width="25.75" height="5" fill="#000"/>
<rect x="15" y="300" width="24.75" height="3" fill="url(#b31)"/>
<rect x="15" y="300" width="24.75" height="1" fill="#000" opacity=".22"/>
<rect x="15" y="302" width="24.75" height="1" fill="#000" opacity=".4"/>
<rect x="15" y="292" width="22.82" height="5" fill="#000"/>
<rect x="15" y="293" width="21.82" height="3" fill="url(#b32)"/>
<rect x="15" y="293" width="21.82" height="1" fill="#000" opacity=".22"/>
<rect x="15" y="295" width="21.82" height="1" fill="#000" opacity=".4"/>
<rect x="15" y="286" width="20.73" height="5" fill="#000"/>
<rect x="15" y="287" width="19.73" height="3" fill="url(#b33)"/>
<rect x="15" y="287" width="19.73" height="1" fill="#000" opacity=".22"/>
<rect x="15" y="289" width="19.73" height="1" fill="#000" opacity=".4"/>
<rect x="15" y="279" width="30.99" height="5" fill="#000"/>
<rect x="15" y="280" width="29.99" height="3" fill="url(#b34)"/>
<rect x="15" y="280" width="29.99" height="1" fill="#000" opacity=".22"/>
<rect x="15" y="282" width="29.99" height="1" fill="#000" opacity=".4"/>
<rect x="15" y="272" width="28.06" height="5" fill="#000"/>
<rect x="15" y="273" width="27.06" height="3" fill="url(#b35)"/>
<rect x="15" y="273" width="27.06" height="1" fill="#000" opacity=".22"/>
<rect x="15" y="275" width="27.06" height="1" fill="#000" opacity=".4"/>
<rect x="15" y="266" width="32.03" height="5" fill="#000"/>
<rect x="15" y="267" width="31.03" height="3" fill="url(#b36)"/>
<rect x="15" y="267" width="31.03" height="1" fill="#000" opacity=".22"/>
<rect x="15" y="269" width="31.03" height="1" fill="#000" opacity=".4"/>
<rect x="15" y="259" width="27.85" height="5" fill="#000"/>
<rect x="15" y="260" width="26.85" height="3" fill="url(#b37)"/>
<rect x="15" y="260" width="26.85" height="1" fill="#000" opacity=".22"/>
<rect x="15" y="262" width="26.85" height="1" fill="#000" opacity=".4"/>
<rect x="15" y="252" width="32.03" height="5" fill="#000"/>
<rect x="15" y="253" width="31.03" height="3" fill="url(#b38)"/>
<rect x="15" y="253" width="31.03" height="1" fill="#000" opacity=".22"/>
<rect x="15" y="255" width="31.03" height="1" fill="#000" opacity=".4"/>
<rect x="15" y="246" width="26.8" height="5" fill="#000"/>
<rect x="15" y="247" width="25.8" height="3" fill="url(#b39)"/>
<rect x="15" y="247" width="25.8" height="1" fill="#000" opacity=".22"/>
<rect x="15" y="249" width="25.8" height="1" fill="#000" opacity=".4"/>
<rect x="15" y="239" width="25.96" height="5" fill="#000"/>
<rect x="15" y="240" width="24.96" height="3" fill="url(#b40)"/>
<rect x="15" y="240" width="24.96" height="1" fill="#000" opacity=".22"/>
<rect x="15" y="242" width="24.96" height="1" fill="#000" opacity=".4"/>
<rect x="15" y="233" width="30.99" height="5" fill="#000"/>
<rect x="15" y="234" width="29.99" height="3" fill="url(#b41)"/>
<rect x="15" y="234" width="29.99" height="1" fill="#000" opacity=".22"/>
<rect x="15" y="236" width="29.99" height="1" fill="#000" opacity=".4"/>
<rect x="15" y="226" width="25.96" height="5" fill="#000"/>
<rect x="15" y="227" width="24.96" height="3" fill="url(#b42)"/>
<rect x="15" y="227" width="24.96" height="1" fill="#000" opacity=".22"/>
<rect x="15" y="229" width="24.96" height="1" fill="#000" opacity=".4"/>
<rect x="15" y="219" width="25.96" height="5" fill="#000"/>
<rect x="15" y="220" width="24.96" height="3" fill="url(#b43)"/>
<rect x="15" y="220" width="24.96" height="1" fill="#000" opacity=".22"/>
<rect x="15" y="222" width="24.96" height="1" fill="#000" opacity=".4"/>
<rect x="15" y="213" width="25.96" height="5" fill="#000"/>
<rect x="15" y="214" width="24.96" height="3" fill="url(#b44)"/>
<rect x="15" y="214" width="24.96" height="1" fill="#000" opacity=".22"/>
<rect x="15" y="216" width="24.96" height="1" fill="#000" opacity=".4"/>
<rect x="15" y="206" width="35.17" height="5" fill="#000"/>
<rect x="15" y="207" width="34.17" height="3" fill="url(#b45)"/>
<rect x="15" y="207" width="34.17" height="1" fill="#000" opacity=".22"/>
<rect x="15" y="209" width="34.17" height="1" fill="#000" opacity=".4"/>
<rect x="15" y="200" width="29.94" height="5" fill="#000"/>
<rect x="15" y="201" width="28.94" height="3" fill="url(#b46)"/>
<rect x="15" y="201" width="28.94" height="1" fill="#000" opacity=".22"/>
<rect x="15" y="203" width="28.94" height="1" fill="#000" opacity=".4"/>
<text class="l" x="433.5" y="54" font-size="13.2" fill="#d2d2d2" text-anchor="middle" textLength="43" lengthAdjust="spacingAndGlyphs" stroke="#d2d2d2" stroke-width="0.2">Delta L</text>
<rect x="370.5" y="58.5" width="143" height="316" fill="#242424" stroke="#9b9b9b" stroke-width="1"/>
<path d="M365 374.5L370 374.5" stroke="#c8c8c8" stroke-width="1"/>
<text class="l" x="364.7" y="379.5" font-size="12.9" fill="#d2d2d2" text-anchor="end" textLength="12.04" lengthAdjust="spacingAndGlyphs" stroke="#d2d2d2" stroke-width="0.2">-4</text>
<path d="M370 335.5L513 335.5" stroke="#9b9b9b" stroke-width="1"/>
<path d="M365 335.5L370 335.5" stroke="#c8c8c8" stroke-width="1"/>
<text class="l" x="364.7" y="340.5" font-size="12.9" fill="#d2d2d2" text-anchor="end" textLength="12.04" lengthAdjust="spacingAndGlyphs" stroke="#d2d2d2" stroke-width="0.2">-3</text>
<path d="M370 296.5L513 296.5" stroke="#9b9b9b" stroke-width="1"/>
<path d="M365 296.5L370 296.5" stroke="#c8c8c8" stroke-width="1"/>
<text class="l" x="364.7" y="301.5" font-size="12.9" fill="#d2d2d2" text-anchor="end" textLength="12.04" lengthAdjust="spacingAndGlyphs" stroke="#d2d2d2" stroke-width="0.2">-2</text>
<path d="M370 256.5L513 256.5" stroke="#9b9b9b" stroke-width="1"/>
<path d="M365 256.5L370 256.5" stroke="#c8c8c8" stroke-width="1"/>
<text class="l" x="364.7" y="261.5" font-size="12.9" fill="#d2d2d2" text-anchor="end" textLength="12.04" lengthAdjust="spacingAndGlyphs" stroke="#d2d2d2" stroke-width="0.2">-1</text>
<path d="M370 216.5L513 216.5" stroke="#9b9b9b" stroke-width="1"/>
<path d="M365 216.5L370 216.5" stroke="#c8c8c8" stroke-width="1"/>
<text class="l" x="364.7" y="221.5" font-size="12.9" fill="#d2d2d2" text-anchor="end" textLength="7.53" lengthAdjust="spacingAndGlyphs" stroke="#d2d2d2" stroke-width="0.2">0</text>
<path d="M370 177.5L513 177.5" stroke="#9b9b9b" stroke-width="1"/>
<path d="M365 177.5L370 177.5" stroke="#c8c8c8" stroke-width="1"/>
<text class="l" x="364.7" y="182.5" font-size="12.9" fill="#d2d2d2" text-anchor="end" textLength="7.53" lengthAdjust="spacingAndGlyphs" stroke="#d2d2d2" stroke-width="0.2">1</text>
<path d="M370 138.5L513 138.5" stroke="#9b9b9b" stroke-width="1"/>
<path d="M365 138.5L370 138.5" stroke="#c8c8c8" stroke-width="1"/>
<text class="l" x="364.7" y="143.5" font-size="12.9" fill="#d2d2d2" text-anchor="end" textLength="7.53" lengthAdjust="spacingAndGlyphs" stroke="#d2d2d2" stroke-width="0.2">2</text>
<path d="M370 98.5L513 98.5" stroke="#9b9b9b" stroke-width="1"/>
<path d="M365 98.5L370 98.5" stroke="#c8c8c8" stroke-width="1"/>
<text class="l" x="364.7" y="103.5" font-size="12.9" fill="#d2d2d2" text-anchor="end" textLength="7.53" lengthAdjust="spacingAndGlyphs" stroke="#d2d2d2" stroke-width="0.2">3</text>
<path d="M365 58.5L370 58.5" stroke="#c8c8c8" stroke-width="1"/>
<text class="l" x="364.7" y="63.5" font-size="12.9" fill="#d2d2d2" text-anchor="end" textLength="7.53" lengthAdjust="spacingAndGlyphs" stroke="#d2d2d2" stroke-width="0.2">4</text>
<rect x="384" y="205.04" width="115" height="12.46" fill="#000"/>
<rect x="385" y="206.04" width="113" height="10.46" fill="url(#dbarL)"/>
<text class="l" x="618.5" y="54" font-size="13.2" fill="#d2d2d2" text-anchor="middle" textLength="43" lengthAdjust="spacingAndGlyphs" stroke="#d2d2d2" stroke-width="0.2">Delta C</text>
<rect x="555.5" y="58.5" width="143" height="316" fill="#242424" stroke="#9b9b9b" stroke-width="1"/>
<path d="M550 374.5L555 374.5" stroke="#c8c8c8" stroke-width="1"/>
<text class="l" x="549.7" y="379.5" font-size="12.9" fill="#d2d2d2" text-anchor="end" textLength="12.04" lengthAdjust="spacingAndGlyphs" stroke="#d2d2d2" stroke-width="0.2">-4</text>
<path d="M555 335.5L698 335.5" stroke="#9b9b9b" stroke-width="1"/>
<path d="M550 335.5L555 335.5" stroke="#c8c8c8" stroke-width="1"/>
<text class="l" x="549.7" y="340.5" font-size="12.9" fill="#d2d2d2" text-anchor="end" textLength="12.04" lengthAdjust="spacingAndGlyphs" stroke="#d2d2d2" stroke-width="0.2">-3</text>
<path d="M555 296.5L698 296.5" stroke="#9b9b9b" stroke-width="1"/>
<path d="M550 296.5L555 296.5" stroke="#c8c8c8" stroke-width="1"/>
<text class="l" x="549.7" y="301.5" font-size="12.9" fill="#d2d2d2" text-anchor="end" textLength="12.04" lengthAdjust="spacingAndGlyphs" stroke="#d2d2d2" stroke-width="0.2">-2</text>
<path d="M555 256.5L698 256.5" stroke="#9b9b9b" stroke-width="1"/>
<path d="M550 256.5L555 256.5" stroke="#c8c8c8" stroke-width="1"/>
<text class="l" x="549.7" y="261.5" font-size="12.9" fill="#d2d2d2" text-anchor="end" textLength="12.04" lengthAdjust="spacingAndGlyphs" stroke="#d2d2d2" stroke-width="0.2">-1</text>
<path d="M555 216.5L698 216.5" stroke="#9b9b9b" stroke-width="1"/>
<path d="M550 216.5L555 216.5" stroke="#c8c8c8" stroke-width="1"/>
<text class="l" x="549.7" y="221.5" font-size="12.9" fill="#d2d2d2" text-anchor="end" textLength="7.53" lengthAdjust="spacingAndGlyphs" stroke="#d2d2d2" stroke-width="0.2">0</text>
<path d="M555 177.5L698 177.5" stroke="#9b9b9b" stroke-width="1"/>
<path d="M550 177.5L555 177.5" stroke="#c8c8c8" stroke-width="1"/>
<text class="l" x="549.7" y="182.5" font-size="12.9" fill="#d2d2d2" text-anchor="end" textLength="7.53" lengthAdjust="spacingAndGlyphs" stroke="#d2d2d2" stroke-width="0.2">1</text>
<path d="M555 138.5L698 138.5" stroke="#9b9b9b" stroke-width="1"/>
<path d="M550 138.5L555 138.5" stroke="#c8c8c8" stroke-width="1"/>
<text class="l" x="549.7" y="143.5" font-size="12.9" fill="#d2d2d2" text-anchor="end" textLength="7.53" lengthAdjust="spacingAndGlyphs" stroke="#d2d2d2" stroke-width="0.2">2</text>
<path d="M555 98.5L698 98.5" stroke="#9b9b9b" stroke-width="1"/>
<path d="M550 98.5L555 98.5" stroke="#c8c8c8" stroke-width="1"/>
<text class="l" x="549.7" y="103.5" font-size="12.9" fill="#d2d2d2" text-anchor="end" textLength="7.53" lengthAdjust="spacingAndGlyphs" stroke="#d2d2d2" stroke-width="0.2">3</text>
<path d="M550 58.5L555 58.5" stroke="#c8c8c8" stroke-width="1"/>
<text class="l" x="549.7" y="63.5" font-size="12.9" fill="#d2d2d2" text-anchor="end" textLength="7.53" lengthAdjust="spacingAndGlyphs" stroke="#d2d2d2" stroke-width="0.2">4</text>
<rect x="569" y="67.19" width="115" height="150.31" fill="#000"/>
<rect x="570" y="68.19" width="113" height="148.31" fill="url(#dbar)"/>
<text class="l" x="803.5" y="54" font-size="13.2" fill="#d2d2d2" text-anchor="middle" textLength="43" lengthAdjust="spacingAndGlyphs" stroke="#d2d2d2" stroke-width="0.2">Delta H</text>
<rect x="740.5" y="58.5" width="144" height="316" fill="#242424" stroke="#9b9b9b" stroke-width="1"/>
<path d="M735 374.5L740 374.5" stroke="#c8c8c8" stroke-width="1"/>
<text class="l" x="734.7" y="379.5" font-size="12.9" fill="#d2d2d2" text-anchor="end" textLength="12.04" lengthAdjust="spacingAndGlyphs" stroke="#d2d2d2" stroke-width="0.2">-4</text>
<path d="M740 335.5L884 335.5" stroke="#9b9b9b" stroke-width="1"/>
<path d="M735 335.5L740 335.5" stroke="#c8c8c8" stroke-width="1"/>
<text class="l" x="734.7" y="340.5" font-size="12.9" fill="#d2d2d2" text-anchor="end" textLength="12.04" lengthAdjust="spacingAndGlyphs" stroke="#d2d2d2" stroke-width="0.2">-3</text>
<path d="M740 296.5L884 296.5" stroke="#9b9b9b" stroke-width="1"/>
<path d="M735 296.5L740 296.5" stroke="#c8c8c8" stroke-width="1"/>
<text class="l" x="734.7" y="301.5" font-size="12.9" fill="#d2d2d2" text-anchor="end" textLength="12.04" lengthAdjust="spacingAndGlyphs" stroke="#d2d2d2" stroke-width="0.2">-2</text>
<path d="M740 256.5L884 256.5" stroke="#9b9b9b" stroke-width="1"/>
<path d="M735 256.5L740 256.5" stroke="#c8c8c8" stroke-width="1"/>
<text class="l" x="734.7" y="261.5" font-size="12.9" fill="#d2d2d2" text-anchor="end" textLength="12.04" lengthAdjust="spacingAndGlyphs" stroke="#d2d2d2" stroke-width="0.2">-1</text>
<path d="M740 216.5L884 216.5" stroke="#9b9b9b" stroke-width="1"/>
<path d="M735 216.5L740 216.5" stroke="#c8c8c8" stroke-width="1"/>
<text class="l" x="734.7" y="221.5" font-size="12.9" fill="#d2d2d2" text-anchor="end" textLength="7.53" lengthAdjust="spacingAndGlyphs" stroke="#d2d2d2" stroke-width="0.2">0</text>
<path d="M740 177.5L884 177.5" stroke="#9b9b9b" stroke-width="1"/>
<path d="M735 177.5L740 177.5" stroke="#c8c8c8" stroke-width="1"/>
<text class="l" x="734.7" y="182.5" font-size="12.9" fill="#d2d2d2" text-anchor="end" textLength="7.53" lengthAdjust="spacingAndGlyphs" stroke="#d2d2d2" stroke-width="0.2">1</text>
<path d="M740 138.5L884 138.5" stroke="#9b9b9b" stroke-width="1"/>
<path d="M735 138.5L740 138.5" stroke="#c8c8c8" stroke-width="1"/>
<text class="l" x="734.7" y="143.5" font-size="12.9" fill="#d2d2d2" text-anchor="end" textLength="7.53" lengthAdjust="spacingAndGlyphs" stroke="#d2d2d2" stroke-width="0.2">2</text>
<path d="M740 98.5L884 98.5" stroke="#9b9b9b" stroke-width="1"/>
<path d="M735 98.5L740 98.5" stroke="#c8c8c8" stroke-width="1"/>
<text class="l" x="734.7" y="103.5" font-size="12.9" fill="#d2d2d2" text-anchor="end" textLength="7.53" lengthAdjust="spacingAndGlyphs" stroke="#d2d2d2" stroke-width="0.2">3</text>
<path d="M735 58.5L740 58.5" stroke="#c8c8c8" stroke-width="1"/>
<text class="l" x="734.7" y="63.5" font-size="12.9" fill="#d2d2d2" text-anchor="end" textLength="7.53" lengthAdjust="spacingAndGlyphs" stroke="#d2d2d2" stroke-width="0.2">4</text>
<rect x="754" y="216" width="115" height="42.58" fill="#000"/>
<rect x="755" y="217" width="113" height="40.58" fill="url(#dbarH)"/>
<g clip-path="url(#swclip)">
<rect x="347" y="387" width="555" height="151" fill="#000"/>
<rect x="363" y="393" width="54.9" height="110" fill="#fff"/>
<rect x="364" y="394" width="52.9" height="108" fill="#ffffff"/>
<rect x="364" y="394" width="52.9" height="54" fill="#fdffff"/>
<rect x="364.5" y="394.5" width="51.9" height="107" fill="none" stroke="#000" stroke-opacity=".1" stroke-width="1"/>
<text class="l" x="376.22" y="517" font-size="11.7" fill="#fff" textLength="28.56" lengthAdjust="spacingAndGlyphs" stroke="#fff" stroke-width="0.3">White</text>
<rect x="426.85" y="393" width="54.9" height="110" fill="#fff"/>
<rect x="427.85" y="394" width="52.9" height="108" fill="#e6e6e6"/>
<rect x="427.85" y="394" width="52.9" height="54" fill="#e2e5e5"/>
<rect x="428.35" y="394.5" width="51.9" height="107" fill="none" stroke="#000" stroke-opacity=".1" stroke-width="1"/>
<text class="l" x="434.48" y="517" font-size="11.7" fill="#fff" textLength="39.75" lengthAdjust="spacingAndGlyphs" stroke="#fff" stroke-width="0.3">Gray 80</text>
<rect x="490.7" y="393" width="54.9" height="110" fill="#fff"/>
<rect x="491.7" y="394" width="52.9" height="108" fill="#d0d0d0"/>
<rect x="491.7" y="394" width="52.9" height="54" fill="#ccd0d0"/>
<rect x="492.2" y="394.5" width="51.9" height="107" fill="none" stroke="#000" stroke-opacity=".1" stroke-width="1"/>
<text class="l" x="498.33" y="517" font-size="11.7" fill="#fff" textLength="39.75" lengthAdjust="spacingAndGlyphs" stroke="#fff" stroke-width="0.3">Gray 65</text>
<rect x="554.55" y="393" width="54.9" height="110" fill="#fff"/>
<rect x="555.55" y="394" width="52.9" height="108" fill="#bababa"/>
<rect x="555.55" y="394" width="52.9" height="54" fill="#b7b9b8"/>
<rect x="556.05" y="394.5" width="51.9" height="107" fill="none" stroke="#000" stroke-opacity=".1" stroke-width="1"/>
<text class="l" x="562.18" y="517" font-size="11.7" fill="#fff" textLength="39.75" lengthAdjust="spacingAndGlyphs" stroke="#fff" stroke-width="0.3">Gray 50</text>
<rect x="618.4" y="393" width="54.9" height="110" fill="#fff"/>
<rect x="619.4" y="394" width="52.9" height="108" fill="#a0a0a0"/>
<rect x="619.4" y="394" width="52.9" height="54" fill="#9b9d9c"/>
<rect x="619.9" y="394.5" width="51.9" height="107" fill="none" stroke="#000" stroke-opacity=".1" stroke-width="1"/>
<text class="l" x="626.03" y="517" font-size="11.7" fill="#fff" textLength="39.75" lengthAdjust="spacingAndGlyphs" stroke="#fff" stroke-width="0.3">Gray 35</text>
<rect x="682.25" y="393" width="54.9" height="110" fill="#fff"/>
<rect x="683.25" y="394" width="52.9" height="108" fill="#000000"/>
<rect x="683.25" y="394" width="52.9" height="54" fill="#000000"/>
<text class="l" x="696.09" y="517" font-size="11.7" fill="#fff" textLength="27.32" lengthAdjust="spacingAndGlyphs" stroke="#fff" stroke-width="0.3">Black</text>
<rect x="746.1" y="393" width="54.9" height="110" fill="#fff"/>
<rect x="747.1" y="394" width="52.9" height="108" fill="#735244"/>
<rect x="747.1" y="394" width="52.9" height="54" fill="#764c40"/>
<rect x="747.6" y="394.5" width="51.9" height="107" fill="none" stroke="#fff" stroke-opacity=".15" stroke-width="1"/>
<text class="l" x="749.38" y="517" font-size="11.7" fill="#fff" textLength="48.43" lengthAdjust="spacingAndGlyphs" stroke="#fff" stroke-width="0.3">Dark Skin</text>
<rect x="809.95" y="393" width="54.9" height="110" fill="#fff"/>
<rect x="810.95" y="394" width="52.9" height="108" fill="#c29682"/>
<rect x="810.95" y="394" width="52.9" height="54" fill="#c6937e"/>
<rect x="811.45" y="394.5" width="51.9" height="107" fill="none" stroke="#fff" stroke-opacity=".15" stroke-width="1"/>
<text class="l" x="812.92" y="517" font-size="11.7" fill="#fff" textLength="49.07" lengthAdjust="spacingAndGlyphs" stroke="#fff" stroke-width="0.3">Light Skin</text>
<rect x="873.8" y="393" width="54.9" height="110" fill="#fff"/>
<rect x="874.8" y="394" width="52.9" height="108" fill="#627a9d"/>
<rect x="874.8" y="394" width="52.9" height="54" fill="#4e7aa0"/>
<rect x="875.3" y="394.5" width="51.9" height="107" fill="none" stroke="#fff" stroke-opacity=".15" stroke-width="1"/>
<text class="l" x="879.5" y="517" font-size="11.7" fill="#fff" textLength="44.09" lengthAdjust="spacingAndGlyphs" stroke="#fff" stroke-width="0.3">Blue Sky</text>
<text class="l" font-size="11.4" fill="#fff" transform="translate(359.8 432.8) rotate(-90)" font-weight="bold" textLength="31.8" lengthAdjust="spacingAndGlyphs">Actual</text>
<text class="l" font-size="11.4" fill="#fff" transform="translate(359.8 494.7) rotate(-90)" font-weight="bold" textLength="31.4" lengthAdjust="spacingAndGlyphs">Target</text>
</g>
<rect x="347" y="537.5" width="555" height="15" fill="#676767"/>
<rect x="349" y="539" width="12" height="12" fill="#8a8a8a" rx="2"/>
<path d="M358 541.5v7l-5.5-3.5z" fill="#3a3a3a"/>
<rect x="363.5" y="539" width="94" height="12.5" fill="#4b4b4b" rx="6"/>
<rect x="888" y="539" width="12" height="12" fill="#8a8a8a" rx="2"/>
<path d="M891 541.5v7l5.5-3.5z" fill="#3a3a3a"/>
<rect x="908.5" y="28.8" width="649.5" height="523.8" fill="#4a3324"/>
<rect x="909" y="29.3" width="647.8" height="522.9" fill="#d08f68"/>
<rect x="915.3" y="36" width="638.4" height="510" fill="#323232"/>
<text class="l" x="1234.3" y="53.1" font-size="12.6" fill="#d2d2d2" text-anchor="middle" textLength="79" lengthAdjust="spacingAndGlyphs" stroke="#d2d2d2" stroke-width="0.2">CIE 1976 u'v'</text>
<rect x="950.5" y="57.5" width="600" height="462" fill="#242424" stroke="#9b9b9b" stroke-width="1"/>
<g clip-path="url(#plot)"><g clip-path="url(#locus)">
<rect x="979" y="66" width="52" height="2.6" fill="url(#c0)"/>
<rect x="968" y="68" width="87" height="2.6" fill="url(#c1)"/>
<rect x="962" y="70" width="116" height="2.6" fill="url(#c2)"/>
<rect x="958" y="72" width="140" height="2.6" fill="url(#c3)"/>
<rect x="956" y="74" width="158" height="2.6" fill="url(#c4)"/>
<rect x="954" y="76" width="178" height="2.6" fill="url(#c5)"/>
<rect x="953" y="78" width="199" height="2.6" fill="url(#c6)"/>
<rect x="951" y="80" width="214" height="2.6" fill="url(#c7)"/>
<rect x="950" y="82" width="237" height="2.6" fill="url(#c8)"/>
<rect x="949" y="84" width="253" height="2.6" fill="url(#c9)"/>
<rect x="949" y="86" width="269" height="2.6" fill="url(#c10)"/>
<rect x="949" y="88" width="286" height="2.6" fill="url(#c11)"/>
<rect x="949" y="90" width="303" height="2.6" fill="url(#c12)"/>
<rect x="949" y="92" width="321" height="2.6" fill="url(#c13)"/>
<rect x="949" y="94" width="338" height="2.6" fill="url(#c14)"/>
<rect x="949" y="96" width="356" height="2.6" fill="url(#c15)"/>
<rect x="949" y="98" width="374" height="2.6" fill="url(#c16)"/>
<rect x="949" y="100" width="393" height="2.6" fill="url(#c17)"/>
<rect x="949" y="102" width="410" height="2.6" fill="url(#c18)"/>
<rect x="949" y="104" width="427" height="2.6" fill="url(#c19)"/>
<rect x="949" y="106" width="444" height="2.6" fill="url(#c20)"/>
<rect x="949" y="108" width="461" height="2.6" fill="url(#c21)"/>
<rect x="949" y="110" width="476" height="2.6" fill="url(#c22)"/>
<rect x="949" y="112" width="497" height="2.6" fill="url(#c23)"/>
<rect x="949" y="114" width="516" height="2.6" fill="url(#c24)"/>
<rect x="949" y="116" width="532" height="2.6" fill="url(#c25)"/>
<rect x="949" y="118" width="551" height="2.6" fill="url(#c26)"/>
<rect x="949" y="120" width="567" height="2.6" fill="url(#c27)"/>
<rect x="949" y="122" width="584" height="2.6" fill="url(#c28)"/>
<rect x="949" y="124" width="603" height="2.6" fill="url(#c29)"/>
<rect x="949" y="126" width="603" height="2.6" fill="url(#c30)"/>
<rect x="949" y="128" width="603" height="2.6" fill="url(#c31)"/>
<rect x="950" y="130" width="602" height="2.6" fill="url(#c32)"/>
<rect x="950" y="132" width="602" height="2.6" fill="url(#c33)"/>
<rect x="951" y="134" width="601" height="2.6" fill="url(#c34)"/>
<rect x="951" y="136" width="601" height="2.6" fill="url(#c35)"/>
<rect x="951" y="138" width="601" height="2.6" fill="url(#c36)"/>
<rect x="952" y="140" width="600" height="2.6" fill="url(#c37)"/>
<rect x="953" y="142" width="599" height="2.6" fill="url(#c38)"/>
<rect x="953" y="144" width="599" height="2.6" fill="url(#c39)"/>
<rect x="954" y="146" width="598" height="2.6" fill="url(#c40)"/>
<rect x="954" y="148" width="598" height="2.6" fill="url(#c41)"/>
<rect x="955" y="150" width="597" height="2.6" fill="url(#c42)"/>
<rect x="955" y="152" width="597" height="2.6" fill="url(#c43)"/>
<rect x="956" y="154" width="596" height="2.6" fill="url(#c44)"/>
<rect x="957" y="156" width="595" height="2.6" fill="url(#c45)"/>
<rect x="957" y="158" width="594" height="2.6" fill="url(#c46)"/>
<rect x="958" y="160" width="591" height="2.6" fill="url(#c47)"/>
<rect x="958" y="162" width="589" height="2.6" fill="url(#c48)"/>
<rect x="959" y="164" width="586" height="2.6" fill="url(#c49)"/>
<rect x="960" y="166" width="583" height="2.6" fill="url(#c50)"/>
<rect x="960" y="168" width="581" height="2.6" fill="url(#c51)"/>
<rect x="961" y="170" width="578" height="2.6" fill="url(#c52)"/>
<rect x="962" y="172" width="575" height="2.6" fill="url(#c53)"/>
<rect x="963" y="174" width="572" height="2.6" fill="url(#c54)"/>
<rect x="963" y="176" width="570" height="2.6" fill="url(#c55)"/>
<rect x="964" y="178" width="567" height="2.6" fill="url(#c56)"/>
<rect x="965" y="180" width="564" height="2.6" fill="url(#c57)"/>
<rect x="965" y="182" width="562" height="2.6" fill="url(#c58)"/>
<rect x="966" y="184" width="559" height="2.6" fill="url(#c59)"/>
<rect x="967" y="186" width="557" height="2.6" fill="url(#c60)"/>
<rect x="968" y="188" width="554" height="2.6" fill="url(#c61)"/>
<rect x="968" y="190" width="552" height="2.6" fill="url(#c62)"/>
<rect x="969" y="192" width="549" height="2.6" fill="url(#c63)"/>
<rect x="970" y="194" width="546" height="2.6" fill="url(#c64)"/>
<rect x="971" y="196" width="543" height="2.6" fill="url(#c65)"/>
<rect x="972" y="198" width="540" height="2.6" fill="url(#c66)"/>
<rect x="973" y="200" width="537" height="2.6" fill="url(#c67)"/>
<rect x="973" y="202" width="535" height="2.6" fill="url(#c68)"/>
<rect x="974" y="204" width="532" height="2.6" fill="url(#c69)"/>
<rect x="974" y="206" width="530" height="2.6" fill="url(#c70)"/>
<rect x="975" y="208" width="527" height="2.6" fill="url(#c71)"/>
<rect x="976" y="210" width="524" height="2.6" fill="url(#c72)"/>
<rect x="977" y="212" width="521" height="2.6" fill="url(#c73)"/>
<rect x="978" y="214" width="518" height="2.6" fill="url(#c74)"/>
<rect x="979" y="216" width="515" height="2.6" fill="url(#c75)"/>
<rect x="980" y="218" width="512" height="2.6" fill="url(#c76)"/>
<rect x="981" y="220" width="509" height="2.6" fill="url(#c77)"/>
<rect x="982" y="222" width="506" height="2.6" fill="url(#c78)"/>
<rect x="983" y="224" width="504" height="2.6" fill="url(#c79)"/>
<rect x="984" y="226" width="501" height="2.6" fill="url(#c80)"/>
<rect x="984" y="228" width="499" height="2.6" fill="url(#c81)"/>
<rect x="985" y="230" width="496" height="2.6" fill="url(#c82)"/>
<rect x="986" y="232" width="493" height="2.6" fill="url(#c83)"/>
<rect x="987" y="234" width="490" height="2.6" fill="url(#c84)"/>
<rect x="988" y="236" width="487" height="2.6" fill="url(#c85)"/>
<rect x="989" y="238" width="484" height="2.6" fill="url(#c86)"/>
<rect x="990" y="240" width="481" height="2.6" fill="url(#c87)"/>
<rect x="990" y="242" width="479" height="2.6" fill="url(#c88)"/>
<rect x="991" y="244" width="476" height="2.6" fill="url(#c89)"/>
<rect x="992" y="246" width="473" height="2.6" fill="url(#c90)"/>
<rect x="993" y="248" width="470" height="2.6" fill="url(#c91)"/>
<rect x="994" y="250" width="467" height="2.6" fill="url(#c92)"/>
<rect x="996" y="252" width="463" height="2.6" fill="url(#c93)"/>
<rect x="997" y="254" width="460" height="2.6" fill="url(#c94)"/>
<rect x="998" y="256" width="457" height="2.6" fill="url(#c95)"/>
<rect x="999" y="258" width="454" height="2.6" fill="url(#c96)"/>
<rect x="1000" y="260" width="451" height="2.6" fill="url(#c97)"/>
<rect x="1001" y="262" width="449" height="2.6" fill="url(#c98)"/>
<rect x="1002" y="264" width="446" height="2.6" fill="url(#c99)"/>
<rect x="1003" y="266" width="443" height="2.6" fill="url(#c100)"/>
<rect x="1004" y="268" width="440" height="2.6" fill="url(#c101)"/>
<rect x="1005" y="270" width="437" height="2.6" fill="url(#c102)"/>
<rect x="1006" y="272" width="434" height="2.6" fill="url(#c103)"/>
<rect x="1007" y="274" width="431" height="2.6" fill="url(#c104)"/>
<rect x="1009" y="276" width="427" height="2.6" fill="url(#c105)"/>
<rect x="1010" y="278" width="424" height="2.6" fill="url(#c106)"/>
<rect x="1011" y="280" width="421" height="2.6" fill="url(#c107)"/>
<rect x="1012" y="282" width="418" height="2.6" fill="url(#c108)"/>
<rect x="1013" y="284" width="415" height="2.6" fill="url(#c109)"/>
<rect x="1014" y="286" width="412" height="2.6" fill="url(#c110)"/>
<rect x="1015" y="288" width="409" height="2.6" fill="url(#c111)"/>
<rect x="1017" y="290" width="405" height="2.6" fill="url(#c112)"/>
<rect x="1018" y="292" width="402" height="2.6" fill="url(#c113)"/>
<rect x="1019" y="294" width="399" height="2.6" fill="url(#c114)"/>
<rect x="1020" y="296" width="396" height="2.6" fill="url(#c115)"/>
<rect x="1021" y="298" width="393" height="2.6" fill="url(#c116)"/>
<rect x="1022" y="300" width="391" height="2.6" fill="url(#c117)"/>
<rect x="1023" y="302" width="388" height="2.6" fill="url(#c118)"/>
<rect x="1025" y="304" width="384" height="2.6" fill="url(#c119)"/>
<rect x="1026" y="306" width="381" height="2.6" fill="url(#c120)"/>
<rect x="1027" y="308" width="378" height="2.6" fill="url(#c121)"/>
<rect x="1028" y="310" width="375" height="2.6" fill="url(#c122)"/>
<rect x="1029" y="312" width="372" height="2.6" fill="url(#c123)"/>
<rect x="1030" y="314" width="369" height="2.6" fill="url(#c124)"/>
<rect x="1031" y="316" width="366" height="2.6" fill="url(#c125)"/>
<rect x="1032" y="318" width="363" height="2.6" fill="url(#c126)"/>
<rect x="1033" y="320" width="360" height="2.6" fill="url(#c127)"/>
<rect x="1034" y="322" width="357" height="2.6" fill="url(#c128)"/>
<rect x="1036" y="324" width="353" height="2.6" fill="url(#c129)"/>
<rect x="1037" y="326" width="350" height="2.6" fill="url(#c130)"/>
<rect x="1038" y="328" width="347" height="2.6" fill="url(#c131)"/>
<rect x="1039" y="330" width="344" height="2.6" fill="url(#c132)"/>
<rect x="1041" y="332" width="340" height="2.6" fill="url(#c133)"/>
<rect x="1042" y="334" width="337" height="2.6" fill="url(#c134)"/>
<rect x="1044" y="336" width="334" height="2.6" fill="url(#c135)"/>
<rect x="1045" y="338" width="331" height="2.6" fill="url(#c136)"/>
<rect x="1046" y="340" width="328" height="2.6" fill="url(#c137)"/>
<rect x="1047" y="342" width="325" height="2.6" fill="url(#c138)"/>
<rect x="1049" y="344" width="321" height="2.6" fill="url(#c139)"/>
<rect x="1050" y="346" width="318" height="2.6" fill="url(#c140)"/>
<rect x="1051" y="348" width="315" height="2.6" fill="url(#c141)"/>
<rect x="1053" y="350" width="311" height="2.6" fill="url(#c142)"/>
<rect x="1054" y="352" width="308" height="2.6" fill="url(#c143)"/>
<rect x="1055" y="354" width="305" height="2.6" fill="url(#c144)"/>
<rect x="1057" y="356" width="301" height="2.6" fill="url(#c145)"/>
<rect x="1058" y="358" width="298" height="2.6" fill="url(#c146)"/>
<rect x="1059" y="360" width="295" height="2.6" fill="url(#c147)"/>
<rect x="1060" y="362" width="292" height="2.6" fill="url(#c148)"/>
<rect x="1061" y="364" width="289" height="2.6" fill="url(#c149)"/>
<rect x="1062" y="366" width="286" height="2.6" fill="url(#c150)"/>
<rect x="1064" y="368" width="282" height="2.6" fill="url(#c151)"/>
<rect x="1065" y="370" width="279" height="2.6" fill="url(#c152)"/>
<rect x="1067" y="372" width="275" height="2.6" fill="url(#c153)"/>
<rect x="1069" y="374" width="272" height="2.6" fill="url(#c154)"/>
<rect x="1070" y="376" width="269" height="2.6" fill="url(#c155)"/>
<rect x="1072" y="378" width="265" height="2.6" fill="url(#c156)"/>
<rect x="1073" y="380" width="262" height="2.6" fill="url(#c157)"/>
<rect x="1074" y="382" width="259" height="2.6" fill="url(#c158)"/>
<rect x="1076" y="384" width="255" height="2.6" fill="url(#c159)"/>
<rect x="1077" y="386" width="252" height="2.6" fill="url(#c160)"/>
<rect x="1078" y="388" width="249" height="2.6" fill="url(#c161)"/>
<rect x="1080" y="390" width="245" height="2.6" fill="url(#c162)"/>
<rect x="1081" y="392" width="242" height="2.6" fill="url(#c163)"/>
<rect x="1083" y="394" width="238" height="2.6" fill="url(#c164)"/>
<rect x="1084" y="396" width="235" height="2.6" fill="url(#c165)"/>
<rect x="1086" y="398" width="231" height="2.6" fill="url(#c166)"/>
<rect x="1087" y="400" width="228" height="2.6" fill="url(#c167)"/>
<rect x="1089" y="402" width="224" height="2.6" fill="url(#c168)"/>
<rect x="1091" y="404" width="220" height="2.6" fill="url(#c169)"/>
<rect x="1092" y="406" width="217" height="2.6" fill="url(#c170)"/>
<rect x="1094" y="408" width="213" height="2.6" fill="url(#c171)"/>
<rect x="1095" y="410" width="210" height="2.6" fill="url(#c172)"/>
<rect x="1097" y="412" width="207" height="2.6" fill="url(#c173)"/>
<rect x="1099" y="414" width="203" height="2.6" fill="url(#c174)"/>
<rect x="1101" y="416" width="199" height="2.6" fill="url(#c175)"/>
<rect x="1102" y="418" width="196" height="2.6" fill="url(#c176)"/>
<rect x="1104" y="420" width="192" height="2.6" fill="url(#c177)"/>
<rect x="1105" y="422" width="189" height="2.6" fill="url(#c178)"/>
<rect x="1107" y="424" width="185" height="2.6" fill="url(#c179)"/>
<rect x="1109" y="426" width="181" height="2.6" fill="url(#c180)"/>
<rect x="1110" y="428" width="178" height="2.6" fill="url(#c181)"/>
<rect x="1112" y="430" width="174" height="2.6" fill="url(#c182)"/>
<rect x="1114" y="432" width="170" height="2.6" fill="url(#c183)"/>
<rect x="1115" y="434" width="167" height="2.6" fill="url(#c184)"/>
<rect x="1117" y="436" width="163" height="2.6" fill="url(#c185)"/>
<rect x="1119" y="438" width="159" height="2.6" fill="url(#c186)"/>
<rect x="1121" y="440" width="155" height="2.6" fill="url(#c187)"/>
<rect x="1124" y="442" width="150" height="2.6" fill="url(#c188)"/>
<rect x="1125" y="444" width="147" height="2.6" fill="url(#c189)"/>
<rect x="1127" y="446" width="143" height="2.6" fill="url(#c190)"/>
<rect x="1129" y="448" width="139" height="2.6" fill="url(#c191)"/>
<rect x="1131" y="450" width="136" height="2.6" fill="url(#c192)"/>
<rect x="1134" y="452" width="131" height="2.6" fill="url(#c193)"/>
<rect x="1136" y="454" width="127" height="2.6" fill="url(#c194)"/>
<rect x="1138" y="456" width="123" height="2.6" fill="url(#c195)"/>
<rect x="1140" y="458" width="119" height="2.6" fill="url(#c196)"/>
<rect x="1143" y="460" width="114" height="2.6" fill="url(#c197)"/>
<rect x="1144" y="462" width="111" height="2.6" fill="url(#c198)"/>
<rect x="1146" y="464" width="107" height="2.6" fill="url(#c199)"/>
<rect x="1149" y="466" width="102" height="2.6" fill="url(#c200)"/>
<rect x="1151" y="468" width="98" height="2.6" fill="url(#c201)"/>
<rect x="1154" y="470" width="93" height="2.6" fill="url(#c202)"/>
<rect x="1156" y="472" width="89" height="2.6" fill="url(#c203)"/>
<rect x="1159" y="474" width="84" height="2.6" fill="url(#c204)"/>
<rect x="1161" y="476" width="80" height="2.6" fill="url(#c205)"/>
<rect x="1164" y="478" width="75" height="2.6" fill="url(#c206)"/>
<rect x="1166" y="480" width="71" height="2.6" fill="url(#c207)"/>
<rect x="1169" y="482" width="66" height="2.6" fill="url(#c208)"/>
<rect x="1171" y="484" width="62" height="2.6" fill="url(#c209)"/>
<rect x="1173" y="486" width="58" height="2.6" fill="url(#c210)"/>
<rect x="1175" y="488" width="55" height="2.6" fill="url(#c211)"/>
<rect x="1178" y="490" width="50" height="2.6" fill="url(#c212)"/>
<rect x="1181" y="492" width="45" height="2.6" fill="url(#c213)"/>
<rect x="1183" y="494" width="41" height="2.6" fill="url(#c214)"/>
<rect x="1185" y="496" width="37" height="2.6" fill="url(#c215)"/>
<rect x="1188" y="498" width="32" height="2.6" fill="url(#c216)"/>
<rect x="1190" y="500" width="28" height="2.6" fill="url(#c217)"/>
<rect x="1193" y="502" width="23" height="2.6" fill="url(#c218)"/>
<rect x="1195" y="504" width="19" height="2.6" fill="url(#c219)"/>
<path d="M900 0H1600V600H900Z M1446.6,114.4 1048.8,74.3 1125.6,397.1Z" fill="#000" fill-opacity=".4" fill-rule="evenodd"/>
</g>
<g fill="none" stroke="#fff" stroke-width="1.4">
<rect x="1042.6" y="67.9" width="12.4" height="12.4"/>
<rect x="1148.5" y="77.6" width="12.4" height="12.4"/>
<rect x="1126.5" y="91.4" width="12.4" height="12.4"/>
<rect x="1093" y="100.6" width="12.4" height="12.4"/>
<rect x="1125" y="113.6" width="12.4" height="12.4"/>
<rect x="1172.9" y="90.7" width="12.4" height="12.4"/>
<rect x="1198.7" y="95.7" width="12.4" height="12.4"/>
<rect x="1242.9" y="100.8" width="12.4" height="12.4"/>
<rect x="1249.4" y="102.6" width="12.4" height="12.4"/>
<rect x="1211.5" y="107.8" width="12.4" height="12.4"/>
<rect x="1224" y="107.3" width="12.4" height="12.4"/>
<rect x="1236.9" y="111.9" width="12.4" height="12.4"/>
<rect x="1193.8" y="114.7" width="12.4" height="12.4"/>
<rect x="1210.5" y="115.7" width="12.4" height="12.4"/>
<rect x="1215.8" y="117.8" width="12.4" height="12.4"/>
<rect x="1219.8" y="122.8" width="12.4" height="12.4"/>
<rect x="1203.8" y="120.8" width="12.4" height="12.4"/>
<rect x="1207.8" y="126.8" width="12.4" height="12.4"/>
<rect x="1197.8" y="121.8" width="12.4" height="12.4"/>
<rect x="1188.7" y="122.2" width="12.4" height="12.4"/>
<rect x="1212.8" y="124.8" width="12.4" height="12.4"/>
<rect x="1174.7" y="124" width="12.4" height="12.4"/>
<rect x="1193.8" y="130.5" width="12.4" height="12.4"/>
<rect x="1176.1" y="136.1" width="12.4" height="12.4"/>
<rect x="1256.8" y="140.8" width="12.4" height="12.4"/>
<rect x="1325.4" y="126.6" width="12.4" height="12.4"/>
<rect x="1439.4" y="107.5" width="12.4" height="12.4"/>
<rect x="1098.7" y="146.4" width="12.4" height="12.4"/>
<rect x="1064.6" y="163.8" width="12.4" height="12.4"/>
<rect x="1079.7" y="195.8" width="12.4" height="12.4"/>
<rect x="1117.8" y="188.6" width="12.4" height="12.4"/>
<rect x="1136.5" y="192.7" width="12.4" height="12.4"/>
<rect x="1170.8" y="213.6" width="12.4" height="12.4"/>
<rect x="1232.7" y="186.8" width="12.4" height="12.4"/>
<rect x="1119.6" y="241.8" width="12.4" height="12.4"/>
<rect x="1268.7" y="259.7" width="12.4" height="12.4"/>
<rect x="1121.8" y="292.8" width="12.4" height="12.4"/>
<rect x="1119.8" y="390.8" width="12.4" height="12.4"/>
</g>
<rect x="1141.3" y="151.8" width="11.6" height="11.6" fill="#fff" fill-opacity=".55" stroke="#000" stroke-width="2.3"/>
<circle cx="1149.6" cy="168.4" r="4.6" fill="#000"/>
<g stroke="#0a0a0a" stroke-width="1.2">
<circle cx="1034.5" cy="71.5" r="4.2" fill="#00ff00"/>
<circle cx="1154.5" cy="84.6" r="4.2" fill="#ffff00"/>
<circle cx="1131.5" cy="97.6" r="4.2" fill="#9fb050"/>
<circle cx="1091.3" cy="104.5" r="4.2" fill="#5f7a48"/>
<circle cx="1126.3" cy="118.3" r="4.2" fill="#5c6a40"/>
<circle cx="1183.4" cy="95.3" r="4.2" fill="#dcc060"/>
<circle cx="1212.6" cy="100.3" r="4.2" fill="#d0a05c"/>
<circle cx="1257.5" cy="106.5" r="4.2" fill="#cf8a50"/>
<circle cx="1266" cy="108.4" r="4.2" fill="#a87040"/>
<circle cx="1226.5" cy="114.9" r="4.2" fill="#8a6040"/>
<circle cx="1240.5" cy="113.3" r="4.2" fill="#7a5638"/>
<circle cx="1253.5" cy="116.5" r="4.2" fill="#7a5236"/>
<circle cx="1206" cy="119.8" r="4.2" fill="#c09068"/>
<circle cx="1225.6" cy="121.6" r="4.2" fill="#d09870"/>
<circle cx="1231.6" cy="121.9" r="4.2" fill="#c89070"/>
<circle cx="1229.3" cy="126" r="4.2" fill="#e0a080"/>
<circle cx="1214" cy="125.1" r="4.2" fill="#c0906c"/>
<circle cx="1218.6" cy="127.4" r="4.2" fill="#d09870"/>
<circle cx="1210.2" cy="126.3" r="4.2" fill="#e0a888"/>
<circle cx="1206" cy="126.3" r="4.2" fill="#d09c78"/>
<circle cx="1200" cy="127.4" r="4.2" fill="#c89878"/>
<circle cx="1184.5" cy="128.8" r="4.2" fill="#f0c8a0"/>
<circle cx="1206" cy="134.9" r="4.2" fill="#7a5a4c"/>
<circle cx="1185.9" cy="140" r="4.2" fill="#e8c0a8"/>
<circle cx="1273.7" cy="144.5" r="4.2" fill="#b06470"/>
<circle cx="1343.4" cy="131.5" r="4.2" fill="#a04038"/>
<circle cx="1445.6" cy="113.9" r="4.2" fill="#ff0000"/>
<circle cx="1097.4" cy="153.4" r="4.2" fill="#80b0a0"/>
<circle cx="1057.3" cy="171.5" r="4.2" fill="#00ffff"/>
<circle cx="1073.4" cy="204.5" r="4.2" fill="#3080a0"/>
<circle cx="1117.4" cy="196.3" r="4.2" fill="#6880a0"/>
<circle cx="1140.4" cy="200.4" r="4.2" fill="#8888b0"/>
<circle cx="1177.2" cy="220.6" r="4.2" fill="#604870"/>
<circle cx="1246.3" cy="191.5" r="4.2" fill="#b06090"/>
<circle cx="1117.4" cy="254.4" r="4.2" fill="#5060a0"/>
<circle cx="1280.6" cy="263.3" r="4.2" fill="#ff00ff"/>
<circle cx="1120.4" cy="309.6" r="4.2" fill="#303888"/>
<circle cx="1114.5" cy="413.6" r="3.6" fill="#0000ff"/>
<circle cx="1147" cy="158.2" r="4.1" fill="#a2a2a2"/>
</g>
</g>
<rect x="1358.5" y="357" width="186.2" height="122.4" fill="url(#ins)" stroke="#8c8c8c" stroke-width="1.3"/>
<g clip-path="url(#insc)"><g fill="none" stroke="#fff" stroke-width="1.2">
<rect x="1374.8" y="384.4" width="12.4" height="12.4"/>
<rect x="1492.7" y="370.4" width="12.4" height="12.4"/>
<rect x="1444.7" y="411.8" width="12.4" height="12.4"/>
<rect x="1457.7" y="425.3" width="12.4" height="12.4"/>
<rect x="1369.2" y="429.7" width="12.4" height="12.4"/>
<rect x="1377.7" y="443.7" width="12.4" height="12.4"/>
<rect x="1430.6" y="443.7" width="12.4" height="12.4"/>
</g><g stroke="#141414" stroke-width="1.1">
<circle cx="1413.3" cy="389.3" r="4.1" fill="#c48c60"/>
<circle cx="1541.1" cy="382.2" r="4.1" fill="#a8784c"/>
<circle cx="1490.5" cy="416.2" r="4.1" fill="#c88c64"/>
<circle cx="1503.3" cy="430.3" r="4.1" fill="#c88860"/>
<circle cx="1360.6" cy="437.9" r="4.1" fill="#c08c68"/>
<circle cx="1370.3" cy="433.3" r="4.1" fill="#b8845c"/>
<circle cx="1388.2" cy="434.6" r="4.1" fill="#e8a880"/>
<circle cx="1410" cy="433.3" r="4.1" fill="#c08a60"/>
<circle cx="1421.5" cy="447.4" r="4.1" fill="#b87c58"/>
<circle cx="1477.2" cy="449.4" r="4.1" fill="#e8a080"/>
</g></g>
<rect x="1310.7" y="488.8" width="236" height="25.6" fill="#2c2c2c"/>
<text class="l" x="1312" y="508.9" font-size="18.6" fill="#f4f4f4" textLength="218.5" lengthAdjust="spacingAndGlyphs" stroke="#f4f4f4" stroke-width="0.3">RGB Triplet: 207, 143, 102</text>
<path d="M949.5 519.5L949.5 525" stroke="#dadada" stroke-width="1.4"/>
<text class="l" x="949.5" y="539.8" font-size="12.5" fill="#d2d2d2" text-anchor="middle" textLength="7.37" lengthAdjust="spacingAndGlyphs" stroke="#d2d2d2" stroke-width="0.2">0</text>
<path d="M999.5 519.5L999.5 525" stroke="#dadada" stroke-width="1.4"/>
<text class="l" x="999.5" y="539.8" font-size="12.5" fill="#d2d2d2" text-anchor="middle" textLength="25.79" lengthAdjust="spacingAndGlyphs" stroke="#d2d2d2" stroke-width="0.2">0,05</text>
<path d="M1049.5 519.5L1049.5 525" stroke="#dadada" stroke-width="1.4"/>
<text class="l" x="1049.5" y="539.8" font-size="12.5" fill="#d2d2d2" text-anchor="middle" textLength="18.42" lengthAdjust="spacingAndGlyphs" stroke="#d2d2d2" stroke-width="0.2">0,1</text>
<path d="M1099.5 519.5L1099.5 525" stroke="#dadada" stroke-width="1.4"/>
<text class="l" x="1099.5" y="539.8" font-size="12.5" fill="#d2d2d2" text-anchor="middle" textLength="25.79" lengthAdjust="spacingAndGlyphs" stroke="#d2d2d2" stroke-width="0.2">0,15</text>
<path d="M1149.5 519.5L1149.5 525" stroke="#dadada" stroke-width="1.4"/>
<text class="l" x="1149.5" y="539.8" font-size="12.5" fill="#d2d2d2" text-anchor="middle" textLength="18.42" lengthAdjust="spacingAndGlyphs" stroke="#d2d2d2" stroke-width="0.2">0,2</text>
<path d="M1199.5 519.5L1199.5 525" stroke="#dadada" stroke-width="1.4"/>
<text class="l" x="1199.5" y="539.8" font-size="12.5" fill="#d2d2d2" text-anchor="middle" textLength="25.79" lengthAdjust="spacingAndGlyphs" stroke="#d2d2d2" stroke-width="0.2">0,25</text>
<path d="M1249.5 519.5L1249.5 525" stroke="#dadada" stroke-width="1.4"/>
<text class="l" x="1249.5" y="539.8" font-size="12.5" fill="#d2d2d2" text-anchor="middle" textLength="18.42" lengthAdjust="spacingAndGlyphs" stroke="#d2d2d2" stroke-width="0.2">0,3</text>
<path d="M1299.5 519.5L1299.5 525" stroke="#dadada" stroke-width="1.4"/>
<text class="l" x="1299.5" y="539.8" font-size="12.5" fill="#d2d2d2" text-anchor="middle" textLength="25.79" lengthAdjust="spacingAndGlyphs" stroke="#d2d2d2" stroke-width="0.2">0,35</text>
<path d="M1349.5 519.5L1349.5 525" stroke="#dadada" stroke-width="1.4"/>
<text class="l" x="1349.5" y="539.8" font-size="12.5" fill="#d2d2d2" text-anchor="middle" textLength="18.42" lengthAdjust="spacingAndGlyphs" stroke="#d2d2d2" stroke-width="0.2">0,4</text>
<path d="M1399.5 519.5L1399.5 525" stroke="#dadada" stroke-width="1.4"/>
<text class="l" x="1399.5" y="539.8" font-size="12.5" fill="#d2d2d2" text-anchor="middle" textLength="25.79" lengthAdjust="spacingAndGlyphs" stroke="#d2d2d2" stroke-width="0.2">0,45</text>
<path d="M1449.5 519.5L1449.5 525" stroke="#dadada" stroke-width="1.4"/>
<text class="l" x="1449.5" y="539.8" font-size="12.5" fill="#d2d2d2" text-anchor="middle" textLength="18.42" lengthAdjust="spacingAndGlyphs" stroke="#d2d2d2" stroke-width="0.2">0,5</text>
<path d="M1499.5 519.5L1499.5 525" stroke="#dadada" stroke-width="1.4"/>
<text class="l" x="1499.5" y="539.8" font-size="12.5" fill="#d2d2d2" text-anchor="middle" textLength="25.79" lengthAdjust="spacingAndGlyphs" stroke="#d2d2d2" stroke-width="0.2">0,55</text>
<path d="M945 519.9L950 519.9" stroke="#dadada" stroke-width="1.7"/>
<text class="l" x="944.1" y="524.7" font-size="12.5" fill="#d2d2d2" text-anchor="end" textLength="7.37" lengthAdjust="spacingAndGlyphs" stroke="#d2d2d2" stroke-width="0.2">0</text>
<path d="M945 481.9L950 481.9" stroke="#dadada" stroke-width="1.7"/>
<text class="l" x="944.1" y="486.7" font-size="12.5" fill="#d2d2d2" text-anchor="end" textLength="25.79" lengthAdjust="spacingAndGlyphs" stroke="#d2d2d2" stroke-width="0.2">0,05</text>
<path d="M945 443.4L950 443.4" stroke="#dadada" stroke-width="1.7"/>
<text class="l" x="944.1" y="448.2" font-size="12.5" fill="#d2d2d2" text-anchor="end" textLength="18.42" lengthAdjust="spacingAndGlyphs" stroke="#d2d2d2" stroke-width="0.2">0,1</text>
<path d="M945 404.9L950 404.9" stroke="#dadada" stroke-width="1.7"/>
<text class="l" x="944.1" y="409.7" font-size="12.5" fill="#d2d2d2" text-anchor="end" textLength="25.79" lengthAdjust="spacingAndGlyphs" stroke="#d2d2d2" stroke-width="0.2">0,15</text>
<path d="M945 366.4L950 366.4" stroke="#dadada" stroke-width="1.7"/>
<text class="l" x="944.1" y="371.2" font-size="12.5" fill="#d2d2d2" text-anchor="end" textLength="18.42" lengthAdjust="spacingAndGlyphs" stroke="#d2d2d2" stroke-width="0.2">0,2</text>
<path d="M945 327.9L950 327.9" stroke="#dadada" stroke-width="1.7"/>
<text class="l" x="944.1" y="332.7" font-size="12.5" fill="#d2d2d2" text-anchor="end" textLength="25.79" lengthAdjust="spacingAndGlyphs" stroke="#d2d2d2" stroke-width="0.2">0,25</text>
<path d="M945 289.4L950 289.4" stroke="#dadada" stroke-width="1.7"/>
<text class="l" x="944.1" y="294.2" font-size="12.5" fill="#d2d2d2" text-anchor="end" textLength="18.42" lengthAdjust="spacingAndGlyphs" stroke="#d2d2d2" stroke-width="0.2">0,3</text>
<path d="M945 250.9L950 250.9" stroke="#dadada" stroke-width="1.7"/>
<text class="l" x="944.1" y="255.7" font-size="12.5" fill="#d2d2d2" text-anchor="end" textLength="25.79" lengthAdjust="spacingAndGlyphs" stroke="#d2d2d2" stroke-width="0.2">0,35</text>
<path d="M945 212.4L950 212.4" stroke="#dadada" stroke-width="1.7"/>
<text class="l" x="944.1" y="217.2" font-size="12.5" fill="#d2d2d2" text-anchor="end" textLength="18.42" lengthAdjust="spacingAndGlyphs" stroke="#d2d2d2" stroke-width="0.2">0,4</text>
<path d="M945 173.9L950 173.9" stroke="#dadada" stroke-width="1.7"/>
<text class="l" x="944.1" y="178.7" font-size="12.5" fill="#d2d2d2" text-anchor="end" textLength="25.79" lengthAdjust="spacingAndGlyphs" stroke="#d2d2d2" stroke-width="0.2">0,45</text>
<path d="M945 135.4L950 135.4" stroke="#dadada" stroke-width="1.7"/>
<text class="l" x="944.1" y="140.2" font-size="12.5" fill="#d2d2d2" text-anchor="end" textLength="18.42" lengthAdjust="spacingAndGlyphs" stroke="#d2d2d2" stroke-width="0.2">0,5</text>
<path d="M945 96.9L950 96.9" stroke="#dadada" stroke-width="1.7"/>
<text class="l" x="944.1" y="101.7" font-size="12.5" fill="#d2d2d2" text-anchor="end" textLength="25.79" lengthAdjust="spacingAndGlyphs" stroke="#d2d2d2" stroke-width="0.2">0,55</text>
<text class="l" x="43.3" y="583.4" font-size="27.6" fill="#f2f2f2" textLength="217" lengthAdjust="spacingAndGlyphs" stroke="#f2f2f2" stroke-width="0.35">Avg dE2000: 1,61</text>
<text class="l" x="39.4" y="621.2" font-size="27.6" fill="#f2f2f2" textLength="226.5" lengthAdjust="spacingAndGlyphs" stroke="#f2f2f2" stroke-width="0.35">Max dE2000: 3,49</text>
<text class="l" x="9.3" y="666" font-size="27.6" fill="#f2f2f2" textLength="205" lengthAdjust="spacingAndGlyphs" stroke="#f2f2f2" stroke-width="0.35">Current Reading</text>
<text class="l" x="9.3" y="698.6" font-size="22.6" fill="#f2f2f2" textLength="70" lengthAdjust="spacingAndGlyphs" stroke="#f2f2f2" stroke-width="0.35">x: 0,46</text>
<text class="l" x="156.2" y="698.6" font-size="22.6" fill="#f2f2f2" textLength="96" lengthAdjust="spacingAndGlyphs" stroke="#f2f2f2" stroke-width="0.35">y: 0,3842</text>
<text class="l" x="9.3" y="736.4" font-size="22.6" fill="#f2f2f2" textLength="90.5" lengthAdjust="spacingAndGlyphs" stroke="#f2f2f2" stroke-width="0.35">fL: 42,06</text>
<text class="l" x="9.3" y="768.8" font-size="22.6" fill="#f2f2f2" textLength="148.5" lengthAdjust="spacingAndGlyphs" stroke="#f2f2f2" stroke-width="0.35">cd/m²: 144,12</text>
<g clip-path="url(#tclip)">
<rect x="296.3" y="564.6" width="1270" height="213.4" fill="#0c0c0c"/>
<rect x="297.3" y="565.6" width="1270" height="24" fill="url(#th)"/>
<rect x="297.3" y="589.6" width="1270" height="21.94" fill="#404040"/>
<text class="d" x="311" y="605.5" font-size="13" fill="#fff" font-weight="bold" textLength="67.78" lengthAdjust="spacingAndGlyphs">x: CIE31</text>
<text class="d" x="453.2" y="605.5" font-size="13" fill="#fff" textLength="52.9" lengthAdjust="spacingAndGlyphs">0,3100</text>
<text class="d" x="535.62" y="605.5" font-size="13" fill="#fff" textLength="52.9" lengthAdjust="spacingAndGlyphs">0,3104</text>
<text class="d" x="618.34" y="605.5" font-size="13" fill="#fff" textLength="52.9" lengthAdjust="spacingAndGlyphs">0,3107</text>
<text class="d" x="700.57" y="605.5" font-size="13" fill="#fff" textLength="52.9" lengthAdjust="spacingAndGlyphs">0,3112</text>
<text class="d" x="783.39" y="605.5" font-size="13" fill="#fff" textLength="52.9" lengthAdjust="spacingAndGlyphs">0,3119</text>
<text class="d" x="865.61" y="605.5" font-size="13" fill="#fff" textLength="52.9" lengthAdjust="spacingAndGlyphs">0,3039</text>
<text class="d" x="928.65" y="605.5" font-size="13" fill="#fff" textLength="52.9" lengthAdjust="spacingAndGlyphs">0,4158</text>
<text class="d" x="1007.98" y="605.5" font-size="13" fill="#fff" textLength="52.9" lengthAdjust="spacingAndGlyphs">0,3849</text>
<text class="d" x="1090" y="605.5" font-size="13" fill="#fff" textLength="52.9" lengthAdjust="spacingAndGlyphs">0,2394</text>
<text class="d" x="1162.63" y="605.5" font-size="13" fill="#fff" textLength="52.9" lengthAdjust="spacingAndGlyphs">0,3366</text>
<text class="d" x="1235.67" y="605.5" font-size="13" fill="#fff" textLength="52.9" lengthAdjust="spacingAndGlyphs">0,2632</text>
<text class="d" x="1332.97" y="605.5" font-size="13" fill="#fff" textLength="52.9" lengthAdjust="spacingAndGlyphs">0,2513</text>
<text class="d" x="1436.38" y="605.5" font-size="13" fill="#fff" textLength="52.9" lengthAdjust="spacingAndGlyphs">0,5253</text>
<text class="d" x="1518.9" y="605.5" font-size="13" fill="#fff" textLength="52.9" lengthAdjust="spacingAndGlyphs">0,2017</text>
<rect x="297.3" y="611.49" width="1270" height="21.94" fill="#7f7f7f"/>
<text class="d" x="311" y="627.39" font-size="13" fill="#fff" font-weight="bold" textLength="67.88" lengthAdjust="spacingAndGlyphs">y: CIE31</text>
<text class="d" x="453.2" y="627.39" font-size="13" fill="#fff" textLength="52.9" lengthAdjust="spacingAndGlyphs">0,3285</text>
<text class="d" x="535.62" y="627.39" font-size="13" fill="#fff" textLength="52.9" lengthAdjust="spacingAndGlyphs">0,3294</text>
<text class="d" x="618.34" y="627.39" font-size="13" fill="#fff" textLength="52.9" lengthAdjust="spacingAndGlyphs">0,3296</text>
<text class="d" x="700.57" y="627.39" font-size="13" fill="#fff" textLength="52.9" lengthAdjust="spacingAndGlyphs">0,3297</text>
<text class="d" x="783.39" y="627.39" font-size="13" fill="#fff" textLength="52.9" lengthAdjust="spacingAndGlyphs">0,3298</text>
<text class="d" x="865.61" y="627.39" font-size="13" fill="#fff" textLength="52.9" lengthAdjust="spacingAndGlyphs">0,3074</text>
<text class="d" x="928.65" y="627.39" font-size="13" fill="#fff" textLength="52.9" lengthAdjust="spacingAndGlyphs">0,3607</text>
<text class="d" x="1007.98" y="627.39" font-size="13" fill="#fff" textLength="52.9" lengthAdjust="spacingAndGlyphs">0,3548</text>
<text class="d" x="1090" y="627.39" font-size="13" fill="#fff" textLength="52.9" lengthAdjust="spacingAndGlyphs">0,2656</text>
<text class="d" x="1162.63" y="627.39" font-size="13" fill="#fff" textLength="52.9" lengthAdjust="spacingAndGlyphs">0,4384</text>
<text class="d" x="1235.67" y="627.39" font-size="13" fill="#fff" textLength="52.9" lengthAdjust="spacingAndGlyphs">0,2527</text>
<text class="d" x="1332.97" y="627.39" font-size="13" fill="#fff" textLength="52.9" lengthAdjust="spacingAndGlyphs">0,3591</text>
<text class="d" x="1436.38" y="627.39" font-size="13" fill="#fff" textLength="52.9" lengthAdjust="spacingAndGlyphs">0,4064</text>
<text class="d" x="1518.9" y="627.39" font-size="13" fill="#fff" textLength="52.9" lengthAdjust="spacingAndGlyphs">0,1834</text>
<rect x="297.3" y="633.38" width="1270" height="21.94" fill="#404040"/>
<text class="d" x="311" y="649.28" font-size="13" fill="#fff" font-weight="bold" textLength="10.73" lengthAdjust="spacingAndGlyphs">Y</text>
<text class="d" x="453.2" y="649.28" font-size="13" fill="#fff" textLength="72.14" lengthAdjust="spacingAndGlyphs">407,9863</text>
<text class="d" x="535.62" y="649.28" font-size="13" fill="#fff" textLength="72.14" lengthAdjust="spacingAndGlyphs">324,9977</text>
<text class="d" x="618.34" y="649.28" font-size="13" fill="#fff" textLength="72.14" lengthAdjust="spacingAndGlyphs">261,3855</text>
<text class="d" x="700.57" y="649.28" font-size="13" fill="#fff" textLength="72.14" lengthAdjust="spacingAndGlyphs">200,4270</text>
<text class="d" x="783.39" y="649.28" font-size="13" fill="#fff" textLength="72.14" lengthAdjust="spacingAndGlyphs">138,2810</text>
<text class="d" x="865.61" y="649.28" font-size="13" fill="#fff" textLength="52.9" lengthAdjust="spacingAndGlyphs">0,1160</text>
<text class="d" x="928.65" y="649.28" font-size="13" fill="#fff" textLength="62.52" lengthAdjust="spacingAndGlyphs">39,0522</text>
<text class="d" x="1007.98" y="649.28" font-size="13" fill="#fff" textLength="72.14" lengthAdjust="spacingAndGlyphs">141,2796</text>
<text class="d" x="1090" y="649.28" font-size="13" fill="#fff" textLength="62.52" lengthAdjust="spacingAndGlyphs">74,2749</text>
<text class="d" x="1162.63" y="649.28" font-size="13" fill="#fff" textLength="62.52" lengthAdjust="spacingAndGlyphs">51,7326</text>
<text class="d" x="1235.67" y="649.28" font-size="13" fill="#fff" textLength="62.52" lengthAdjust="spacingAndGlyphs">92,5163</text>
<text class="d" x="1332.97" y="649.28" font-size="13" fill="#fff" textLength="72.14" lengthAdjust="spacingAndGlyphs">167,3594</text>
<text class="d" x="1436.38" y="649.28" font-size="13" fill="#fff" textLength="72.14" lengthAdjust="spacingAndGlyphs">120,4714</text>
<text class="d" x="1518.9" y="649.28" font-size="13" fill="#fff" textLength="62.52" lengthAdjust="spacingAndGlyphs">43,7812</text>
<rect x="297.3" y="655.27" width="1270" height="21.94" fill="#7f7f7f"/>
<text class="d" x="311" y="671.17" font-size="13" fill="#fff" font-weight="bold" textLength="121.04" lengthAdjust="spacingAndGlyphs">Target x:CIE31</text>
<text class="d" x="453.2" y="671.17" font-size="13" fill="#fff" textLength="52.9" lengthAdjust="spacingAndGlyphs">0,3127</text>
<text class="d" x="535.62" y="671.17" font-size="13" fill="#fff" textLength="52.9" lengthAdjust="spacingAndGlyphs">0,3127</text>
<text class="d" x="618.34" y="671.17" font-size="13" fill="#fff" textLength="52.9" lengthAdjust="spacingAndGlyphs">0,3127</text>
<text class="d" x="700.57" y="671.17" font-size="13" fill="#fff" textLength="52.9" lengthAdjust="spacingAndGlyphs">0,3127</text>
<text class="d" x="783.39" y="671.17" font-size="13" fill="#fff" textLength="52.9" lengthAdjust="spacingAndGlyphs">0,3127</text>
<text class="d" x="865.61" y="671.17" font-size="13" fill="#fff" textLength="52.9" lengthAdjust="spacingAndGlyphs">0,3127</text>
<text class="d" x="928.65" y="671.17" font-size="13" fill="#fff" textLength="52.9" lengthAdjust="spacingAndGlyphs">0,4064</text>
<text class="d" x="1007.98" y="671.17" font-size="13" fill="#fff" textLength="52.9" lengthAdjust="spacingAndGlyphs">0,3787</text>
<text class="d" x="1090" y="671.17" font-size="13" fill="#fff" textLength="52.9" lengthAdjust="spacingAndGlyphs">0,2478</text>
<text class="d" x="1162.63" y="671.17" font-size="13" fill="#fff" textLength="52.9" lengthAdjust="spacingAndGlyphs">0,3388</text>
<text class="d" x="1235.67" y="671.17" font-size="13" fill="#fff" textLength="52.9" lengthAdjust="spacingAndGlyphs">0,2673</text>
<text class="d" x="1332.97" y="671.17" font-size="13" fill="#fff" textLength="52.9" lengthAdjust="spacingAndGlyphs">0,2613</text>
<text class="d" x="1436.38" y="671.17" font-size="13" fill="#fff" textLength="52.9" lengthAdjust="spacingAndGlyphs">0,5140</text>
<text class="d" x="1518.9" y="671.17" font-size="13" fill="#fff" textLength="52.9" lengthAdjust="spacingAndGlyphs">0,2125</text>
<rect x="297.3" y="677.16" width="1270" height="21.94" fill="#404040"/>
<text class="d" x="311" y="693.06" font-size="13" fill="#fff" font-weight="bold" textLength="121.14" lengthAdjust="spacingAndGlyphs">Target y:CIE31</text>
<text class="d" x="453.2" y="693.06" font-size="13" fill="#fff" textLength="52.9" lengthAdjust="spacingAndGlyphs">0,3290</text>
<text class="d" x="535.62" y="693.06" font-size="13" fill="#fff" textLength="52.9" lengthAdjust="spacingAndGlyphs">0,3290</text>
<text class="d" x="618.34" y="693.06" font-size="13" fill="#fff" textLength="52.9" lengthAdjust="spacingAndGlyphs">0,3290</text>
<text class="d" x="700.57" y="693.06" font-size="13" fill="#fff" textLength="52.9" lengthAdjust="spacingAndGlyphs">0,3290</text>
<text class="d" x="783.39" y="693.06" font-size="13" fill="#fff" textLength="52.9" lengthAdjust="spacingAndGlyphs">0,3290</text>
<text class="d" x="865.61" y="693.06" font-size="13" fill="#fff" textLength="52.9" lengthAdjust="spacingAndGlyphs">0,3290</text>
<text class="d" x="928.65" y="693.06" font-size="13" fill="#fff" textLength="52.9" lengthAdjust="spacingAndGlyphs">0,3615</text>
<text class="d" x="1007.98" y="693.06" font-size="13" fill="#fff" textLength="52.9" lengthAdjust="spacingAndGlyphs">0,3539</text>
<text class="d" x="1090" y="693.06" font-size="13" fill="#fff" textLength="52.9" lengthAdjust="spacingAndGlyphs">0,2664</text>
<text class="d" x="1162.63" y="693.06" font-size="13" fill="#fff" textLength="52.9" lengthAdjust="spacingAndGlyphs">0,4328</text>
<text class="d" x="1235.67" y="693.06" font-size="13" fill="#fff" textLength="52.9" lengthAdjust="spacingAndGlyphs">0,2539</text>
<text class="d" x="1332.97" y="693.06" font-size="13" fill="#fff" textLength="52.9" lengthAdjust="spacingAndGlyphs">0,3558</text>
<text class="d" x="1436.38" y="693.06" font-size="13" fill="#fff" textLength="52.9" lengthAdjust="spacingAndGlyphs">0,4089</text>
<text class="d" x="1518.9" y="693.06" font-size="13" fill="#fff" textLength="52.9" lengthAdjust="spacingAndGlyphs">0,1895</text>
<rect x="297.3" y="699.05" width="1270" height="21.94" fill="#7f7f7f"/>
<text class="d" x="311" y="714.95" font-size="13" fill="#fff" font-weight="bold" textLength="69.14" lengthAdjust="spacingAndGlyphs">Target Y</text>
<text class="d" x="453.2" y="714.95" font-size="13" fill="#fff" textLength="72.14" lengthAdjust="spacingAndGlyphs">407,9863</text>
<text class="d" x="535.62" y="714.95" font-size="13" fill="#fff" textLength="72.14" lengthAdjust="spacingAndGlyphs">325,1808</text>
<text class="d" x="618.34" y="714.95" font-size="13" fill="#fff" textLength="72.14" lengthAdjust="spacingAndGlyphs">263,4597</text>
<text class="d" x="700.57" y="714.95" font-size="13" fill="#fff" textLength="72.14" lengthAdjust="spacingAndGlyphs">203,8996</text>
<text class="d" x="783.39" y="714.95" font-size="13" fill="#fff" textLength="72.14" lengthAdjust="spacingAndGlyphs">142,4608</text>
<text class="d" x="865.61" y="714.95" font-size="13" fill="#fff" textLength="52.9" lengthAdjust="spacingAndGlyphs">0,1160</text>
<text class="d" x="928.65" y="714.95" font-size="13" fill="#fff" textLength="62.52" lengthAdjust="spacingAndGlyphs">39,9128</text>
<text class="d" x="1007.98" y="714.95" font-size="13" fill="#fff" textLength="72.14" lengthAdjust="spacingAndGlyphs">142,3386</text>
<text class="d" x="1090" y="714.95" font-size="13" fill="#fff" textLength="62.52" lengthAdjust="spacingAndGlyphs">78,0484</text>
<text class="d" x="1162.63" y="714.95" font-size="13" fill="#fff" textLength="62.52" lengthAdjust="spacingAndGlyphs">53,7657</text>
<text class="d" x="1235.67" y="714.95" font-size="13" fill="#fff" textLength="62.52" lengthAdjust="spacingAndGlyphs">96,0260</text>
<text class="d" x="1332.97" y="714.95" font-size="13" fill="#fff" textLength="72.14" lengthAdjust="spacingAndGlyphs">172,9660</text>
<text class="d" x="1436.38" y="714.95" font-size="13" fill="#fff" textLength="72.14" lengthAdjust="spacingAndGlyphs">117,5017</text>
<text class="d" x="1518.9" y="714.95" font-size="13" fill="#fff" textLength="62.52" lengthAdjust="spacingAndGlyphs">47,8912</text>
<rect x="297.3" y="720.94" width="1270" height="21.94" fill="#404040"/>
<text class="d" x="311" y="736.84" font-size="13" fill="#fff" font-weight="bold" textLength="68" lengthAdjust="spacingAndGlyphs">ΔE 2000</text>
<text class="d" x="453.2" y="736.84" font-size="13" fill="#fff" textLength="52.9" lengthAdjust="spacingAndGlyphs">1,8590</text>
<text class="d" x="535.62" y="736.84" font-size="13" fill="#fff" textLength="52.9" lengthAdjust="spacingAndGlyphs">1,9229</text>
<text class="d" x="618.34" y="736.84" font-size="13" fill="#fff" textLength="52.9" lengthAdjust="spacingAndGlyphs">1,7520</text>
<text class="d" x="700.57" y="736.84" font-size="13" fill="#fff" textLength="52.9" lengthAdjust="spacingAndGlyphs">1,3907</text>
<text class="d" x="783.39" y="736.84" font-size="13" fill="#fff" textLength="52.9" lengthAdjust="spacingAndGlyphs">1,0820</text>
<text class="d" x="865.61" y="736.84" font-size="13" fill="#fff" textLength="52.9" lengthAdjust="spacingAndGlyphs">0,0974</text>
<text class="d" x="928.65" y="736.84" font-size="13" fill="#fff" textLength="52.9" lengthAdjust="spacingAndGlyphs">1,4351</text>
<text class="d" x="1007.98" y="736.84" font-size="13" fill="#fff" textLength="52.9" lengthAdjust="spacingAndGlyphs">1,1486</text>
<text class="d" x="1090" y="736.84" font-size="13" fill="#fff" textLength="52.9" lengthAdjust="spacingAndGlyphs">2,9541</text>
<text class="d" x="1162.63" y="736.84" font-size="13" fill="#fff" textLength="52.9" lengthAdjust="spacingAndGlyphs">1,0242</text>
<text class="d" x="1235.67" y="736.84" font-size="13" fill="#fff" textLength="52.9" lengthAdjust="spacingAndGlyphs">1,4747</text>
<text class="d" x="1332.97" y="736.84" font-size="13" fill="#fff" textLength="52.9" lengthAdjust="spacingAndGlyphs">2,1996</text>
<text class="d" x="1436.38" y="736.84" font-size="13" fill="#fff" textLength="52.9" lengthAdjust="spacingAndGlyphs">1,5917</text>
<text class="d" x="1518.9" y="736.84" font-size="13" fill="#fff" textLength="52.9" lengthAdjust="spacingAndGlyphs">2,6430</text>
<rect x="297.3" y="742.83" width="1270" height="21.94" fill="#7f7f7f"/>
<text class="d" x="311" y="758.73" font-size="13" fill="#fff" font-weight="bold" textLength="53.24" lengthAdjust="spacingAndGlyphs">ΔE ITP</text>
<text class="d" x="453.2" y="758.73" font-size="13" fill="#fff" textLength="52.9" lengthAdjust="spacingAndGlyphs">1,7912</text>
<text class="d" x="535.62" y="758.73" font-size="13" fill="#fff" textLength="52.9" lengthAdjust="spacingAndGlyphs">1,7057</text>
<text class="d" x="618.34" y="758.73" font-size="13" fill="#fff" textLength="52.9" lengthAdjust="spacingAndGlyphs">1,7051</text>
<text class="d" x="700.57" y="758.73" font-size="13" fill="#fff" textLength="52.9" lengthAdjust="spacingAndGlyphs">1,8222</text>
<text class="d" x="783.39" y="758.73" font-size="13" fill="#fff" textLength="52.9" lengthAdjust="spacingAndGlyphs">2,3661</text>
<text class="d" x="865.61" y="758.73" font-size="13" fill="#fff" textLength="52.9" lengthAdjust="spacingAndGlyphs">2,3498</text>
<text class="d" x="928.65" y="758.73" font-size="13" fill="#fff" textLength="52.9" lengthAdjust="spacingAndGlyphs">5,5380</text>
<text class="d" x="1007.98" y="758.73" font-size="13" fill="#fff" textLength="52.9" lengthAdjust="spacingAndGlyphs">3,6733</text>
<text class="d" x="1090" y="758.73" font-size="13" fill="#fff" textLength="52.9" lengthAdjust="spacingAndGlyphs">7,2787</text>
<text class="d" x="1162.63" y="758.73" font-size="13" fill="#fff" textLength="52.9" lengthAdjust="spacingAndGlyphs">3,6894</text>
<text class="d" x="1235.67" y="758.73" font-size="13" fill="#fff" textLength="52.9" lengthAdjust="spacingAndGlyphs">4,0184</text>
<text class="d" x="1332.97" y="758.73" font-size="13" fill="#fff" textLength="52.9" lengthAdjust="spacingAndGlyphs">7,3593</text>
<text class="d" x="1436.38" y="758.73" font-size="13" fill="#fff" textLength="52.9" lengthAdjust="spacingAndGlyphs">8,1160</text>
<text class="d" x="1518.9" y="758.73" font-size="13" fill="#fff" textLength="62.52" lengthAdjust="spacingAndGlyphs">11,4612</text>
<text class="d" x="467.55" y="583" font-size="13" fill="#fff" textLength="44.3" lengthAdjust="spacingAndGlyphs" stroke="#fff" stroke-width="0.3">White</text>
<text class="d" x="543.24" y="583" font-size="13" fill="#fff" textLength="57.96" lengthAdjust="spacingAndGlyphs" stroke="#fff" stroke-width="0.3">Gray 80</text>
<text class="d" x="625.36" y="583" font-size="13" fill="#fff" textLength="57.96" lengthAdjust="spacingAndGlyphs" stroke="#fff" stroke-width="0.3">Gray 65</text>
<text class="d" x="707.79" y="583" font-size="13" fill="#fff" textLength="57.96" lengthAdjust="spacingAndGlyphs" stroke="#fff" stroke-width="0.3">Gray 50</text>
<text class="d" x="790.71" y="583" font-size="13" fill="#fff" textLength="57.96" lengthAdjust="spacingAndGlyphs" stroke="#fff" stroke-width="0.3">Gray 35</text>
<text class="d" x="872.63" y="583" font-size="13" fill="#fff" textLength="39.39" lengthAdjust="spacingAndGlyphs" stroke="#fff" stroke-width="0.3">Black</text>
<text class="d" x="928.66" y="583" font-size="13" fill="#fff" textLength="68.2" lengthAdjust="spacingAndGlyphs" stroke="#fff" stroke-width="0.3">Dark Skin</text>
<text class="d" x="1008.58" y="583" font-size="13" fill="#fff" textLength="69.8" lengthAdjust="spacingAndGlyphs" stroke="#fff" stroke-width="0.3">Light Skin</text>
<text class="d" x="1090.81" y="583" font-size="13" fill="#fff" textLength="60.8" lengthAdjust="spacingAndGlyphs" stroke="#fff" stroke-width="0.3">Blue Sky</text>
<text class="d" x="1167.94" y="583" font-size="13" fill="#fff" textLength="51.4" lengthAdjust="spacingAndGlyphs" stroke="#fff" stroke-width="0.3">Foliage</text>
<text class="d" x="1235.61" y="583" font-size="13" fill="#fff" textLength="86.3" lengthAdjust="spacingAndGlyphs" stroke="#fff" stroke-width="0.3">Blue Flower</text>
<text class="d" x="1332.36" y="583" font-size="13" fill="#fff" textLength="93.6" lengthAdjust="spacingAndGlyphs" stroke="#fff" stroke-width="0.3">Bluish Green</text>
<text class="d" x="1445.88" y="583" font-size="13" fill="#fff" textLength="53" lengthAdjust="spacingAndGlyphs" stroke="#fff" stroke-width="0.3">Orange</text>
<text class="d" x="1520.12" y="583" font-size="13" fill="#fff" textLength="94.73" lengthAdjust="spacingAndGlyphs" stroke="#fff" stroke-width="0.3">Purplish Blue</text>
<rect x="297.3" y="764.7" width="1270" height="13.3" fill="#686868"/>
<rect x="299.2" y="766" width="14.2" height="11.4" fill="#8c8c8c" rx="2.2"/>
<path d="M309.6 767.9v7.6l-6-3.8z" fill="#3a3a3a"/>
<rect x="317.6" y="766" width="369.6" height="11.5" fill="#4a4a4a" rx="5.7"/>
<rect x="1542.4" y="766" width="14" height="11.4" fill="#8c8c8c" rx="2.2"/>
<path d="M1546.6 767.9v7.6l6-3.8z" fill="#3a3a3a"/>
<rect x="296.2" y="565" width="1.6" height="213.2" fill="#050505"/>
</g>
<rect x="0" y="850.6" width="1238" height="9.4" fill="#6a6a6a"/>
<path d="M-8.9 850.6V806.4q0-4.3 4.3-4.3H36.8q4.3 0 4.3 4.3V850.6z" fill="url(#tab)"/>
<rect x="-4" y="806.9" width="40.3" height="24.4" fill="#2b8bb0" rx="3.4" stroke="#000" stroke-opacity=".18" stroke-width=".8"/>
<text class="l" x="3.57" y="845.8" font-size="11.3" fill="#262626" textLength="25.06" lengthAdjust="spacingAndGlyphs" stroke="#262626" stroke-width=".45">Cyan</text>
<path d="M43.1 850.6V806.4q0-4.3 4.3-4.3H88.8q4.3 0 4.3 4.3V850.6z" fill="url(#tab)"/>
<path d="M38.7 850.7l2.6-3h1.6l2.6 3z" fill="#2e2e2e"/>
<rect x="48" y="806.9" width="40.3" height="24.4" fill="#ff0000" rx="3.4" stroke="#000" stroke-opacity=".18" stroke-width=".8"/>
<text class="l" x="43.03" y="845.8" font-size="11.3" fill="#262626" textLength="50.13" lengthAdjust="spacingAndGlyphs" stroke="#262626" stroke-width=".45">100% Red</text>
<path d="M95.1 850.6V806.4q0-4.3 4.3-4.3H140.8q4.3 0 4.3 4.3V850.6z" fill="url(#tab)"/>
<path d="M90.7 850.7l2.6-3h1.6l2.6 3z" fill="#2e2e2e"/>
<rect x="100" y="806.9" width="40.3" height="13" fill="#00ff00" rx="3.4" stroke="#000" stroke-opacity=".18" stroke-width=".8"/>
<text class="l" x="105.18" y="833.8" font-size="11.3" fill="#262626" textLength="27.46" lengthAdjust="spacingAndGlyphs" stroke="#262626" stroke-width=".45">100%</text>
<text class="l" x="105.18" y="845.8" font-size="11.3" fill="#262626" textLength="29.84" lengthAdjust="spacingAndGlyphs" stroke="#262626" stroke-width=".45">Green</text>
<path d="M147.1 850.6V806.4q0-4.3 4.3-4.3H192.8q4.3 0 4.3 4.3V850.6z" fill="url(#tab)"/>
<path d="M142.7 850.7l2.6-3h1.6l2.6 3z" fill="#2e2e2e"/>
<rect x="152" y="806.9" width="40.3" height="13" fill="#0000ff" rx="3.4" stroke="#000" stroke-opacity=".18" stroke-width=".8"/>
<text class="l" x="158.37" y="833.8" font-size="11.3" fill="#262626" textLength="27.46" lengthAdjust="spacingAndGlyphs" stroke="#262626" stroke-width=".45">100%</text>
<text class="l" x="158.37" y="845.8" font-size="11.3" fill="#262626" textLength="21.49" lengthAdjust="spacingAndGlyphs" stroke="#262626" stroke-width=".45">Blue</text>
<path d="M199.1 850.6V806.4q0-4.3 4.3-4.3H244.8q4.3 0 4.3 4.3V850.6z" fill="url(#tab)"/>
<path d="M194.7 850.7l2.6-3h1.6l2.6 3z" fill="#2e2e2e"/>
<rect x="204" y="806.9" width="40.3" height="13" fill="#00ffff" rx="3.4" stroke="#000" stroke-opacity=".18" stroke-width=".8"/>
<text class="l" x="210.37" y="833.8" font-size="11.3" fill="#262626" textLength="27.46" lengthAdjust="spacingAndGlyphs" stroke="#262626" stroke-width=".45">100%</text>
<text class="l" x="210.37" y="845.8" font-size="11.3" fill="#262626" textLength="25.06" lengthAdjust="spacingAndGlyphs" stroke="#262626" stroke-width=".45">Cyan</text>
<path d="M251.1 850.6V806.4q0-4.3 4.3-4.3H296.8q4.3 0 4.3 4.3V850.6z" fill="url(#tab)"/>
<path d="M246.7 850.7l2.6-3h1.6l2.6 3z" fill="#2e2e2e"/>
<rect x="256" y="806.9" width="40.3" height="13" fill="#ff00ff" rx="3.4" stroke="#000" stroke-opacity=".18" stroke-width=".8"/>
<text class="l" x="255.21" y="833.8" font-size="11.3" fill="#262626" textLength="27.46" lengthAdjust="spacingAndGlyphs" stroke="#262626" stroke-width=".45">100%</text>
<text class="l" x="255.21" y="845.8" font-size="11.3" fill="#262626" textLength="41.78" lengthAdjust="spacingAndGlyphs" stroke="#262626" stroke-width=".45">Magenta</text>
<path d="M303.1 850.6V806.4q0-4.3 4.3-4.3H348.8q4.3 0 4.3 4.3V850.6z" fill="url(#tab)"/>
<path d="M298.7 850.7l2.6-3h1.6l2.6 3z" fill="#2e2e2e"/>
<rect x="308" y="806.9" width="40.3" height="13" fill="#ffff00" rx="3.4" stroke="#000" stroke-opacity=".18" stroke-width=".8"/>
<text class="l" x="312.78" y="833.8" font-size="11.3" fill="#262626" textLength="27.46" lengthAdjust="spacingAndGlyphs" stroke="#262626" stroke-width=".45">100%</text>
<text class="l" x="312.78" y="845.8" font-size="11.3" fill="#262626" textLength="30.64" lengthAdjust="spacingAndGlyphs" stroke="#262626" stroke-width=".45">Yellow</text>
<path d="M355.1 850.6V806.4q0-4.3 4.3-4.3H400.8q4.3 0 4.3 4.3V850.6z" fill="url(#tab)"/>
<path d="M350.7 850.7l2.6-3h1.6l2.6 3z" fill="#2e2e2e"/>
<rect x="360" y="806.9" width="40.3" height="24.4" fill="#754a31" rx="3.4" stroke="#000" stroke-opacity=".18" stroke-width=".8"/>
<text class="l" x="373.53" y="845.8" font-size="11.3" fill="#262626" textLength="13.13" lengthAdjust="spacingAndGlyphs" stroke="#262626" stroke-width=".45">2E</text>
<path d="M407.1 850.6V806.4q0-4.3 4.3-4.3H452.8q4.3 0 4.3 4.3V850.6z" fill="url(#tab)"/>
<path d="M402.7 850.7l2.6-3h1.6l2.6 3z" fill="#2e2e2e"/>
<rect x="412" y="806.9" width="40.3" height="24.4" fill="#c48c6b" rx="3.4" stroke="#000" stroke-opacity=".18" stroke-width=".8"/>
<text class="l" x="425.84" y="845.8" font-size="11.3" fill="#262626" textLength="12.53" lengthAdjust="spacingAndGlyphs" stroke="#262626" stroke-width=".45">2F</text>
<path d="M459.1 850.6V806.4q0-4.3 4.3-4.3H504.8q4.3 0 4.3 4.3V850.6z" fill="url(#tab)"/>
<path d="M454.7 850.7l2.6-3h1.6l2.6 3z" fill="#2e2e2e"/>
<rect x="464" y="806.9" width="40.3" height="24.4" fill="#f8cda0" rx="3.4" stroke="#000" stroke-opacity=".18" stroke-width=".8"/>
<text class="l" x="477.53" y="845.8" font-size="11.3" fill="#262626" textLength="13.13" lengthAdjust="spacingAndGlyphs" stroke="#262626" stroke-width=".45">2K</text>
<path d="M511.1 850.6V806.4q0-4.3 4.3-4.3H556.8q4.3 0 4.3 4.3V850.6z" fill="url(#tab)"/>
<path d="M506.7 850.7l2.6-3h1.6l2.6 3z" fill="#2e2e2e"/>
<rect x="516" y="806.9" width="40.3" height="24.4" fill="#fbcdb6" rx="3.4" stroke="#000" stroke-opacity=".18" stroke-width=".8"/>
<text class="l" x="529.24" y="845.8" font-size="11.3" fill="#262626" textLength="13.72" lengthAdjust="spacingAndGlyphs" stroke="#262626" stroke-width=".45">5D</text>
<path d="M563.1 850.6V806.4q0-4.3 4.3-4.3H608.8q4.3 0 4.3 4.3V850.6z" fill="url(#tab)"/>
<path d="M558.7 850.7l2.6-3h1.6l2.6 3z" fill="#2e2e2e"/>
<rect x="568" y="806.9" width="40.3" height="24.4" fill="#f0b18b" rx="3.4" stroke="#000" stroke-opacity=".18" stroke-width=".8"/>
<text class="l" x="581.53" y="845.8" font-size="11.3" fill="#262626" textLength="13.13" lengthAdjust="spacingAndGlyphs" stroke="#262626" stroke-width=".45">7E</text>
<path d="M615.1 850.6V806.4q0-4.3 4.3-4.3H660.8q4.3 0 4.3 4.3V850.6z" fill="url(#tab)"/>
<path d="M610.7 850.7l2.6-3h1.6l2.6 3z" fill="#2e2e2e"/>
<rect x="620" y="806.9" width="40.3" height="24.4" fill="#c69466" rx="3.4" stroke="#000" stroke-opacity=".18" stroke-width=".8"/>
<text class="l" x="633.84" y="845.8" font-size="11.3" fill="#262626" textLength="12.53" lengthAdjust="spacingAndGlyphs" stroke="#262626" stroke-width=".45">7F</text>
<path d="M667.1 850.6V806.4q0-4.3 4.3-4.3H712.8q4.3 0 4.3 4.3V850.6z" fill="url(#tab)"/>
<path d="M662.7 850.7l2.6-3h1.6l2.6 3z" fill="#2e2e2e"/>
<rect x="672" y="806.9" width="40.3" height="24.4" fill="#8b6038" rx="3.4" stroke="#000" stroke-opacity=".18" stroke-width=".8"/>
<text class="l" x="684.94" y="845.8" font-size="11.3" fill="#262626" textLength="14.32" lengthAdjust="spacingAndGlyphs" stroke="#262626" stroke-width=".45">7G</text>
<path d="M719.1 850.6V806.4q0-4.3 4.3-4.3H764.8q4.3 0 4.3 4.3V850.6z" fill="url(#tab)"/>
<path d="M714.7 850.7l2.6-3h1.6l2.6 3z" fill="#2e2e2e"/>
<rect x="724" y="806.9" width="40.3" height="24.4" fill="#d09f7a" rx="3.4" stroke="#000" stroke-opacity=".18" stroke-width=".8"/>
<text class="l" x="737.24" y="845.8" font-size="11.3" fill="#262626" textLength="13.72" lengthAdjust="spacingAndGlyphs" stroke="#262626" stroke-width=".45">7H</text>
<path d="M771.1 850.6V806.4q0-4.3 4.3-4.3H816.8q4.3 0 4.3 4.3V850.6z" fill="url(#tab)"/>
<path d="M766.7 850.7l2.6-3h1.6l2.6 3z" fill="#2e2e2e"/>
<rect x="776" y="806.9" width="40.3" height="24.4" fill="#a2592a" rx="3.4" stroke="#000" stroke-opacity=".18" stroke-width=".8"/>
<text class="l" x="791.62" y="845.8" font-size="11.3" fill="#262626" textLength="8.95" lengthAdjust="spacingAndGlyphs" stroke="#262626" stroke-width=".45">7I</text>
<path d="M823.1 850.6V806.4q0-4.3 4.3-4.3H868.8q4.3 0 4.3 4.3V850.6z" fill="url(#tab)"/>
<path d="M818.7 850.7l2.6-3h1.6l2.6 3z" fill="#2e2e2e"/>
<rect x="828" y="806.9" width="40.3" height="24.4" fill="#cf8a66" rx="3.4" stroke="#000" stroke-opacity=".18" stroke-width=".8"/>
<text class="l" x="842.43" y="845.8" font-size="11.3" fill="#262626" textLength="11.34" lengthAdjust="spacingAndGlyphs" stroke="#262626" stroke-width=".45">7J</text>
<path d="M875.1 850.6V806.4q0-4.3 4.3-4.3H920.8q4.3 0 4.3 4.3V850.6z" fill="url(#tab)"/>
<path d="M870.7 850.7l2.6-3h1.6l2.6 3z" fill="#2e2e2e"/>
<rect x="880" y="806.9" width="40.3" height="24.4" fill="#d08c70" rx="3.4" stroke="#000" stroke-opacity=".18" stroke-width=".8"/>
<text class="l" x="893.24" y="845.8" font-size="11.3" fill="#262626" textLength="13.72" lengthAdjust="spacingAndGlyphs" stroke="#262626" stroke-width=".45">8D</text>
<path d="M927.1 850.6V806.4q0-4.3 4.3-4.3H972.8q4.3 0 4.3 4.3V850.6z" fill="url(#tab)"/>
<path d="M922.7 850.7l2.6-3h1.6l2.6 3z" fill="#2e2e2e"/>
<rect x="932" y="806.9" width="40.3" height="24.4" fill="#ef9c78" rx="3.4" stroke="#000" stroke-opacity=".18" stroke-width=".8"/>
<text class="l" x="945.53" y="845.8" font-size="11.3" fill="#262626" textLength="13.13" lengthAdjust="spacingAndGlyphs" stroke="#262626" stroke-width=".45">8E</text>
<path d="M979.1 850.6V806.4q0-4.3 4.3-4.3H1024.8q4.3 0 4.3 4.3V850.6z" fill="url(#tab)"/>
<path d="M974.7 850.7l2.6-3h1.6l2.6 3z" fill="#2e2e2e"/>
<rect x="984" y="806.9" width="40.3" height="24.4" fill="#c39170" rx="3.4" stroke="#000" stroke-opacity=".18" stroke-width=".8"/>
<text class="l" x="997.84" y="845.8" font-size="11.3" fill="#262626" textLength="12.53" lengthAdjust="spacingAndGlyphs" stroke="#262626" stroke-width=".45">8F</text>
<path d="M1031.1 850.6V806.4q0-4.3 4.3-4.3H1076.8q4.3 0 4.3 4.3V850.6z" fill="url(#tab)"/>
<path d="M1026.7 850.7l2.6-3h1.6l2.6 3z" fill="#2e2e2e"/>
<rect x="1036" y="806.9" width="40.3" height="24.4" fill="#d19873" rx="3.4" stroke="#000" stroke-opacity=".18" stroke-width=".8"/>
<text class="l" x="1048.94" y="845.8" font-size="11.3" fill="#262626" textLength="14.32" lengthAdjust="spacingAndGlyphs" stroke="#262626" stroke-width=".45">8G</text>
<path d="M1083.1 850.6V806.4q0-4.3 4.3-4.3H1128.8q4.3 0 4.3 4.3V850.6z" fill="url(#tab)"/>
<path d="M1078.7 850.7l2.6-3h1.6l2.6 3z" fill="#2e2e2e"/>
<rect x="1088" y="806.9" width="40.3" height="24.4" fill="#d09970" rx="3.4" stroke="#000" stroke-opacity=".18" stroke-width=".8"/>
<text class="l" x="1101.24" y="845.8" font-size="11.3" fill="#262626" textLength="13.72" lengthAdjust="spacingAndGlyphs" stroke="#262626" stroke-width=".45">8H</text>
<path d="M1135.1 850.6V806.4q0-4.3 4.3-4.3H1180.8q4.3 0 4.3 4.3V850.6z" fill="url(#tab)"/>
<path d="M1130.7 850.7l2.6-3h1.6l2.6 3z" fill="#2e2e2e"/>
<rect x="1140" y="806.9" width="40.3" height="24.4" fill="#7f5330" rx="3.4" stroke="#000" stroke-opacity=".18" stroke-width=".8"/>
<text class="l" x="1155.62" y="845.8" font-size="11.3" fill="#262626" textLength="8.95" lengthAdjust="spacingAndGlyphs" stroke="#262626" stroke-width=".45">8I</text>
<path d="M1187.1 850.6V806.4q0-4.3 4.3-4.3H1232.8q4.3 0 4.3 4.3V850.6z" fill="url(#tabs)"/>
<path d="M1182.7 850.7l2.6-3h1.6l2.6 3z" fill="#2e2e2e"/>
<rect x="1192" y="806.9" width="40.3" height="24.4" fill="#cf8f66" rx="3.4" stroke="#000" stroke-opacity=".18" stroke-width=".8"/>
<text class="l" x="1206.7" y="845.8" font-size="11.3" fill="#fff" font-weight="bold" textLength="10.81" lengthAdjust="spacingAndGlyphs">8J</text>
<rect x="0" y="851.5" width="6.6" height="8.5" fill="#9a9a9a" rx="1.5"/>
<path d="M3.6 853.4v5.6l-4.6-2.8z" fill="#3a3a3a"/>
<rect x="608" y="852" width="614.5" height="8" fill="#4a4a4a" rx="4"/>
<rect x="1226" y="851.5" width="11" height="8.5" fill="#8c8c8c"/>
<path d="M1229 853v6.4l5.4-3.2z" fill="#3a3a3a"/>
<path d="M1238 820V806.4q0-4.3 4.3-4.3H1281.7q4.3 0 4.3 4.3V820z" fill="url(#btn)"/>
<rect x="1238" y="821" width="48" height="39" fill="url(#pnl)"/>
<circle cx="1262.6" cy="810.9" r="7.2" fill="url(#circ)"/><path d="M1258.4 812.7l4.2-4.3 4.2 4.3z" fill="#333"/>
<rect x="1247.4" y="827.3" width="28.8" height="28.8" fill="url(#sq)" rx="3.6" stroke="#2c2c2c" stroke-width="2"/>
<rect x="1255.1" y="835.1" width="13.4" height="13.3" fill="url(#sqi)"/>
<path d="M1287 831.8V806q0-4.3 4.3-4.3H1333.1V831.8z" fill="url(#btn)"/>
<circle cx="1310.1" cy="817" r="9.8" fill="url(#circ)"/>
<rect x="1306.1" y="813" width="8" height="8" fill="#2c2c2c"/>
<rect x="1334" y="801.7" width="44.1" height="30.1" fill="url(#btn)"/>
<circle cx="1356.3" cy="817" r="9.8" fill="url(#circ)"/>
<path d="M1353 812.6v9.6l8.2-4.8z" fill="#2c2c2c"/>
<rect x="1379" y="801.7" width="44" height="30.1" fill="url(#btn)"/>
<circle cx="1400.9" cy="817" r="9.8" fill="url(#circ)"/>
<path d="M1398.3 811.6h-3.4v11h3.4v-1.9h-1.3v-7.2h1.3zM1403.5 811.6h3.4v11h-3.4v-1.9h1.3v-7.2h-1.3zM1398.7 816h1.8v1.9h-1.8zM1401.4 816h1.8v1.9h-1.8z" fill="#2c2c2c"/>
<rect x="1423.9" y="801.7" width="43.8" height="30.1" fill="url(#btn)"/>
<circle cx="1445.9" cy="817" r="9.8" fill="url(#circ)"/>
<path d="M1445.9 817c-1.8-3.3-6.6-3.3-6.6 0s4.8 3.3 6.6 0s6.6-3.3 6.6 0s-4.8 3.3-6.6 0z" fill="none" stroke="#2c2c2c" stroke-width="1.7"/>
<rect x="1468.6" y="801.7" width="44.5" height="30.1" fill="url(#btnd)"/>
<circle cx="1491.2" cy="817" r="9.8" fill="url(#circd)"/>
<g fill="none" stroke="#1d1d1d" stroke-width="1.9"><path d="M1486.8 816.2a4.4 4.4 0 0 1 7.6-2.4"/><path d="M1495.6 817.8a4.4 4.4 0 0 1-7.6 2.4"/></g>
<path d="M1496 811.4v4.6h-4.6zM1486.4 822.6v-4.6h4.6z" fill="#1d1d1d"/>
<rect x="1514" y="801.7" width="45.1" height="30.1" fill="url(#btn)"/>
<circle cx="1537" cy="817" r="9.8" fill="url(#circ)"/>
<path d="M1287 861V837.5q0-4.3 4.3-4.3H1423V861z" fill="url(#btn2)"/>
<rect x="1423.9" y="833.2" width="136" height="28" fill="url(#btn2)"/>
<circle cx="1317.7" cy="848" r="9.5" fill="url(#circ)"/>
<circle cx="1531.2" cy="848" r="9.5" fill="url(#circ)"/>
<path d="M1317.3 843.3l-4 4.7 4 4.7M1321.8 843.3l-4 4.7 4 4.7" fill="none" stroke="#2c2c2c" stroke-width="1.3"/>
<path d="M1527.2 843.3l4 4.7-4 4.7M1531.7 843.3l4 4.7-4 4.7" fill="none" stroke="#2c2c2c" stroke-width="1.3"/>
<text class="l" x="1344.8" y="855.6" font-size="22.8" fill="#333" textLength="50" lengthAdjust="spacingAndGlyphs" stroke="#333" stroke-width="0.7">Back</text>
<text class="l" x="1451.6" y="855.6" font-size="22.8" fill="#333" textLength="51.2" lengthAdjust="spacingAndGlyphs" stroke="#333" stroke-width="0.7">Next</text>
</svg>
</body></html>
